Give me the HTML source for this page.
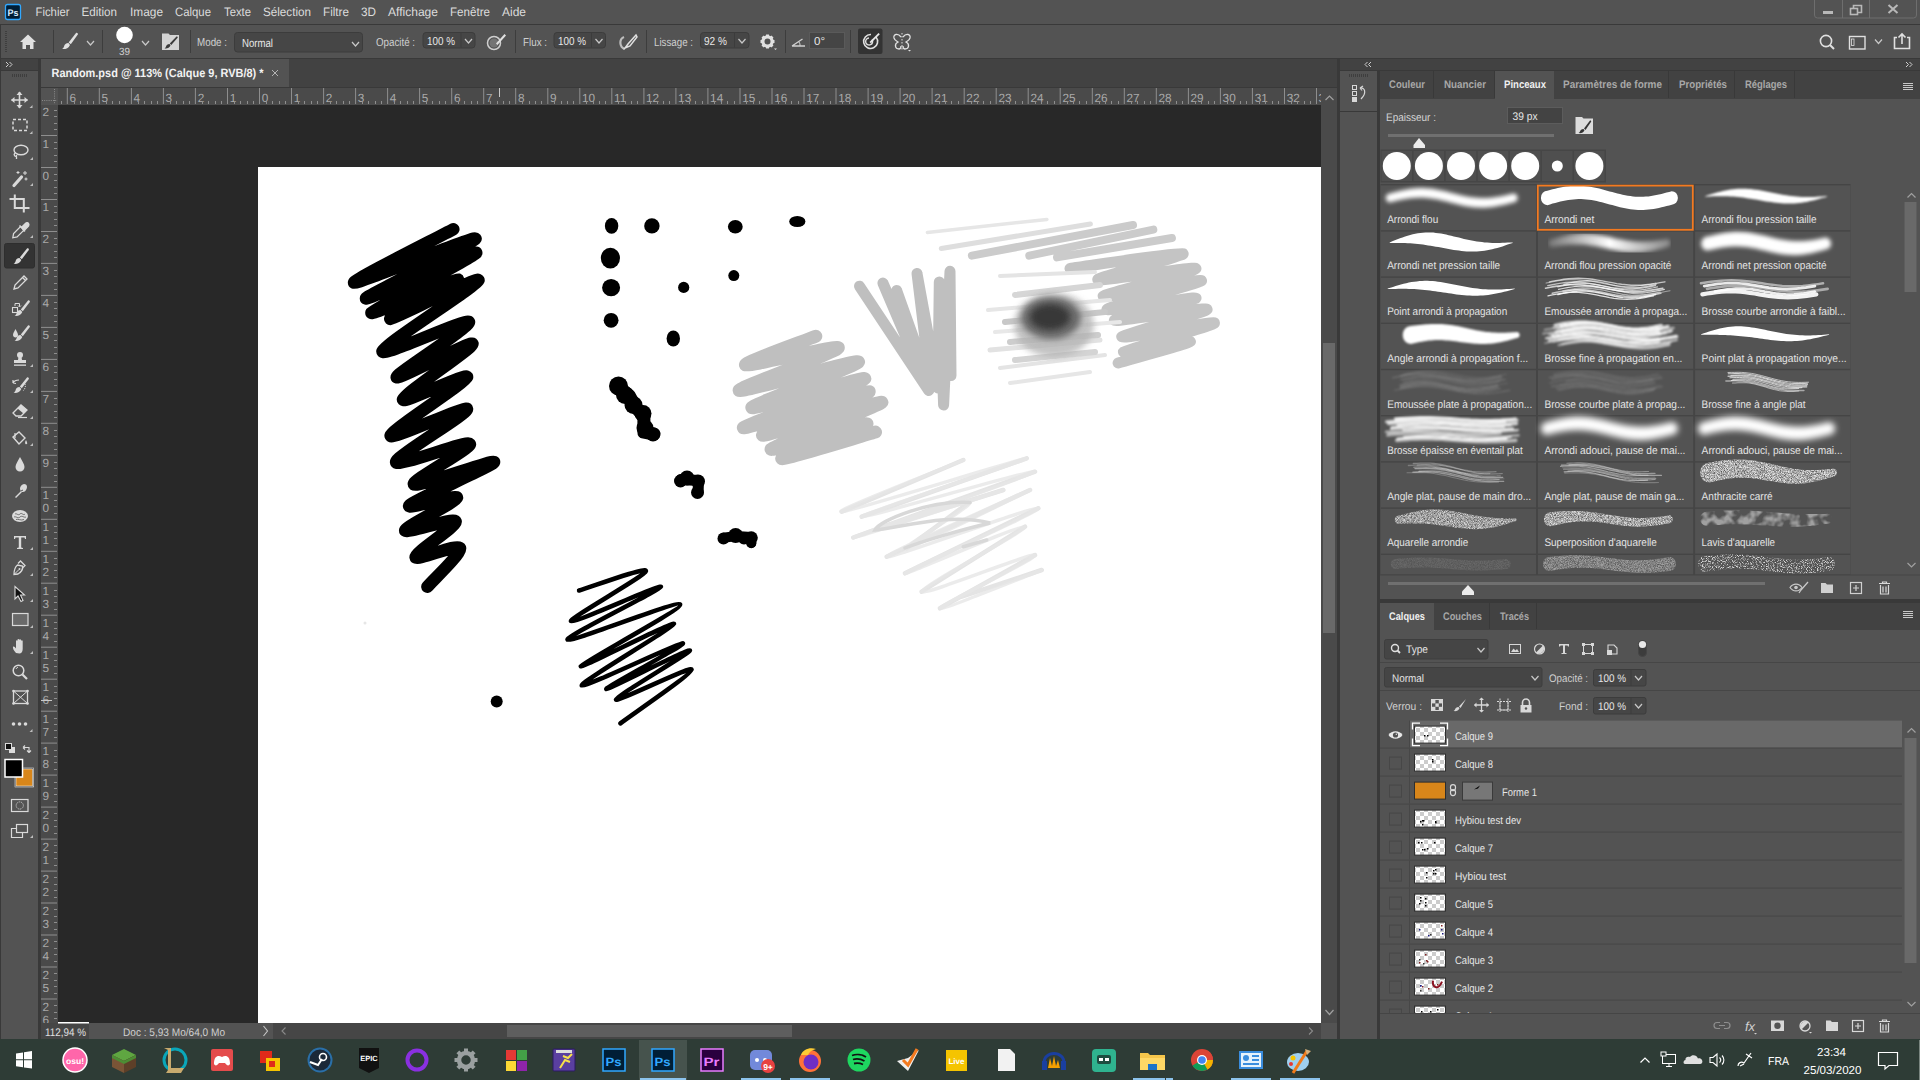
<!DOCTYPE html>
<html><head><meta charset="utf-8"><title>Photoshop</title>
<style>html,body{margin:0;padding:0;background:#393939;width:1920px;height:1080px;overflow:hidden}
svg{display:block;font-family:"Liberation Sans", sans-serif}</style></head>
<body><svg width="1920" height="1080" viewBox="0 0 1920 1080" text-rendering="geometricPrecision">
<defs>
<filter id="soft" x="-20%" y="-20%" width="140%" height="140%"><feGaussianBlur stdDeviation="0.7"/></filter>
<filter id="b06" x="-10%" y="-50%" width="120%" height="200%"><feGaussianBlur stdDeviation="0.6"/></filter>
<filter id="b1" x="-20%" y="-50%" width="140%" height="200%"><feGaussianBlur stdDeviation="1"/></filter>
<filter id="b2" x="-20%" y="-50%" width="140%" height="200%"><feGaussianBlur stdDeviation="2"/></filter>
<filter id="b3" x="-20%" y="-50%" width="140%" height="200%"><feGaussianBlur stdDeviation="3"/></filter>
<filter id="b4" x="-50%" y="-50%" width="200%" height="200%"><feGaussianBlur stdDeviation="6"/></filter>
<pattern id="checker" x="0" y="0" width="8" height="8" patternUnits="userSpaceOnUse"><rect width="8" height="8" fill="#ffffff"/><rect width="4" height="4" fill="#cccccc"/><rect x="4" y="4" width="4" height="4" fill="#cccccc"/></pattern>
<filter id="noise" x="-10%" y="-50%" width="120%" height="200%"><feTurbulence type="fractalNoise" baseFrequency="1.3" numOctaves="2" seed="3" result="n"/><feColorMatrix in="n" type="matrix" values="0 0 0 0 1  0 0 0 0 1  0 0 0 0 1  0 0 0 1.8 -0.3" result="na"/><feComposite in="SourceGraphic" in2="na" operator="in"/></filter>
<filter id="noise3" x="-10%" y="-50%" width="120%" height="200%"><feTurbulence type="fractalNoise" baseFrequency="0.12" numOctaves="2" seed="5" result="n"/><feColorMatrix in="n" type="matrix" values="0 0 0 0 1  0 0 0 0 1  0 0 0 0 1  0 0 0 3 -1.1" result="na"/><feComposite in="SourceGraphic" in2="na" operator="in"/></filter>
<filter id="noise2" x="-10%" y="-50%" width="120%" height="200%"><feTurbulence type="fractalNoise" baseFrequency="1.2" numOctaves="1" seed="7" result="n"/><feColorMatrix in="n" type="matrix" values="0 0 0 0 1  0 0 0 0 1  0 0 0 0 1  0 0 0 4 -1.9" result="na"/><feComposite in="SourceGraphic" in2="na" operator="in"/></filter>
<linearGradient id="fadeG" x1="0" x2="1" y1="0" y2="0"><stop offset="0" stop-color="#fff" stop-opacity="0.2"/><stop offset="0.5" stop-color="#fff" stop-opacity="1"/><stop offset="1" stop-color="#fff" stop-opacity="0.3"/></linearGradient>
<mask id="fadeMask" maskContentUnits="objectBoundingBox"><rect width="1" height="1" fill="url(#fadeG)"/></mask>
<clipPath id="rclip"><rect x="1316" y="88" width="5" height="17"/></clipPath>
<clipPath id="vrclip"><rect x="41" y="105" width="17" height="918"/></clipPath>
<clipPath id="canvclip"><rect x="258" y="167" width="1063" height="856"/></clipPath>
</defs>
<rect x="0" y="0" width="1920" height="1080" fill="#393939" />
<rect x="0" y="0" width="1920" height="24" fill="#535353" />
<rect x="5.5" y="4.5" width="15" height="15" rx="2" fill="#001e36" stroke="#31a8ff" stroke-width="1.3"/>
<text x="7.6" y="16" font-size="9.5" fill="#d6ecff" textLength="11" lengthAdjust="spacingAndGlyphs" font-weight="bold" >Ps</text>
<text x="35.5" y="16" font-size="12.3" fill="#dcdcdc" textLength="34" lengthAdjust="spacingAndGlyphs" >Fichier</text>
<text x="81.5" y="16" font-size="12.3" fill="#dcdcdc" textLength="35.5" lengthAdjust="spacingAndGlyphs" >Edition</text>
<text x="130" y="16" font-size="12.3" fill="#dcdcdc" textLength="33" lengthAdjust="spacingAndGlyphs" >Image</text>
<text x="175" y="16" font-size="12.3" fill="#dcdcdc" textLength="36" lengthAdjust="spacingAndGlyphs" >Calque</text>
<text x="224" y="16" font-size="12.3" fill="#dcdcdc" textLength="27" lengthAdjust="spacingAndGlyphs" >Texte</text>
<text x="263" y="16" font-size="12.3" fill="#dcdcdc" textLength="48" lengthAdjust="spacingAndGlyphs" >Sélection</text>
<text x="323" y="16" font-size="12.3" fill="#dcdcdc" textLength="26" lengthAdjust="spacingAndGlyphs" >Filtre</text>
<text x="361" y="16" font-size="12.3" fill="#dcdcdc" textLength="15" lengthAdjust="spacingAndGlyphs" >3D</text>
<text x="388" y="16" font-size="12.3" fill="#dcdcdc" textLength="50" lengthAdjust="spacingAndGlyphs" >Affichage</text>
<text x="450" y="16" font-size="12.3" fill="#dcdcdc" textLength="40" lengthAdjust="spacingAndGlyphs" >Fenêtre</text>
<text x="502" y="16" font-size="12.3" fill="#dcdcdc" textLength="24" lengthAdjust="spacingAndGlyphs" >Aide</text>
<path d="M1814.5,0 V15 a3,3 0 0 0 3,3 H1913.5 a3,3 0 0 0 3,-3 V0" fill="none" stroke="#6e6e6e" stroke-width="1"/>
<line x1="1842.5" y1="0" x2="1842.5" y2="18" stroke="#6e6e6e" stroke-width="1" />
<line x1="1869.5" y1="0" x2="1869.5" y2="18" stroke="#6e6e6e" stroke-width="1" />
<rect x="1823" y="11" width="10" height="3" fill="#b8b8b8" />
<rect x="1850.5" y="8.5" width="7" height="6" fill="none" stroke="#b8b8b8" stroke-width="1.6"/>
<path d="M1853.5,8 V5.5 H1861.5 V12.5 H1858" fill="none" stroke="#b8b8b8" stroke-width="1.6"/>
<path d="M1888.5,5 L1897.5,13 M1897.5,5 L1888.5,13" stroke="#b8b8b8" stroke-width="2"/>
<rect x="1" y="25" width="1919" height="33" fill="#535353" />
<line x1="6" y1="31" x2="6" y2="52" stroke="#3e3e3e" stroke-width="2" stroke-dasharray="1,1"/>
<path d="M20,42 L28,34.5 L36,42 H33.5 V49 H30 V45 H26 V49 H22.5 V42 Z" fill="#e0e0e0" />
<line x1="53.5" y1="30" x2="53.5" y2="53" stroke="#3d3d3d" stroke-width="1" />
<line x1="102.5" y1="30" x2="102.5" y2="53" stroke="#3d3d3d" stroke-width="1" />
<line x1="190.5" y1="30" x2="190.5" y2="53" stroke="#3d3d3d" stroke-width="1" />
<line x1="515.5" y1="30" x2="515.5" y2="53" stroke="#3d3d3d" stroke-width="1" />
<line x1="646.5" y1="30" x2="646.5" y2="53" stroke="#3d3d3d" stroke-width="1" />
<line x1="785.5" y1="30" x2="785.5" y2="53" stroke="#3d3d3d" stroke-width="1" />
<line x1="850.5" y1="30" x2="850.5" y2="53" stroke="#3d3d3d" stroke-width="1" />
<path d="M76,33 C77,32.5 78.3,33.5 77.8,34.6 L70.8,44.2 L68.6,42.4 Z" fill="#e0e0e0" />
<path d="M68.5,43 C66,43 64.5,44.5 64,46.5 C63.6,48 62.5,48.8 62,49 C65,49.5 68.5,48.5 70,45 Z" fill="#e0e0e0" />
<polyline points="87.0,41.0 90.5,45.0 94.0,41.0" fill="none" stroke="#c8c8c8" stroke-width="1.2"/>
<circle cx="124.5" cy="35" r="8.3" fill="#ffffff" filter="url(#soft)"/>
<text x="119" y="55" font-size="10.5" fill="#d0d0d0" textLength="11" lengthAdjust="spacingAndGlyphs" >39</text>
<polyline points="142.0,41.0 145.5,45.0 149.0,41.0" fill="none" stroke="#c8c8c8" stroke-width="1.2"/>
<path d="M162,33.5 H168.5 L170,35 H179 V50 H162 Z" fill="#d4d4d4" />
<path d="M176.5,36.5 C177.2,36.2 178,37 177.6,37.7 L171.3,45 L169.8,43.6 Z" fill="#3a3a3a" />
<path d="M169.5,44 C167.5,44 166.5,45 166,46.5 C165.7,47.5 165,48.2 164.5,48.5 C167,49 169.5,48 170.5,45.3 Z" fill="#3a3a3a" />
<text x="197" y="46" font-size="11.5" fill="#cfcfcf" textLength="30" lengthAdjust="spacingAndGlyphs" >Mode :</text>
<rect x="234.5" y="32.5" width="128" height="19.5" rx="3" fill="#464646" stroke="#3c3c3c" stroke-width="1"/>
<text x="242" y="46.5" font-size="11.5" fill="#e8e8e8" textLength="31" lengthAdjust="spacingAndGlyphs" >Normal</text>
<polyline points="352.0,42.0 355.5,46.0 359.0,42.0" fill="none" stroke="#c8c8c8" stroke-width="1.2"/>
<text x="376" y="46" font-size="11.5" fill="#cfcfcf" textLength="39" lengthAdjust="spacingAndGlyphs" >Opacité :</text>
<rect x="423.0" y="32.5" width="52.0" height="15.5" rx="3" fill="#464646" stroke="#3c3c3c" stroke-width="1"/>
<line x1="461" y1="33" x2="461" y2="47.5" stroke="#3c3c3c" stroke-width="1" />
<text x="427" y="45" font-size="11.5" fill="#e8e8e8" textLength="28" lengthAdjust="spacingAndGlyphs" >100 %</text>
<polyline points="465.0,39.0 468.5,43.0 472.0,39.0" fill="none" stroke="#c8c8c8" stroke-width="1.2"/>
<circle cx="494" cy="43" r="6.5" fill="none" stroke="#cfcfcf" stroke-width="1.5"/>
<circle cx="494" cy="43" r="4.5" fill="#8a8a8a" opacity="0.6"/>
<path d="M504.5,34 L496,43.5 L497.5,45 L506,35.5 Z" fill="#e0e0e0" />
<text x="523" y="46" font-size="11.5" fill="#cfcfcf" textLength="24" lengthAdjust="spacingAndGlyphs" >Flux :</text>
<rect x="554.0" y="32.5" width="51.5" height="15.5" rx="3" fill="#464646" stroke="#3c3c3c" stroke-width="1"/>
<line x1="591.5" y1="33" x2="591.5" y2="47.5" stroke="#3c3c3c" stroke-width="1" />
<text x="558" y="45" font-size="11.5" fill="#e8e8e8" textLength="28" lengthAdjust="spacingAndGlyphs" >100 %</text>
<polyline points="595.5,39.0 599,43.0 602.5,39.0" fill="none" stroke="#c8c8c8" stroke-width="1.2"/>
<path d="M624,37 C619,39 619,47 625,49" fill="none" stroke="#bdbdbd" stroke-width="2.2" />
<path d="M636,35 L628,44 L625,48 L630,46 L637,37 Z" fill="none" stroke="#e0e0e0" stroke-width="1.5" />
<text x="654" y="46" font-size="11.5" fill="#cfcfcf" textLength="39" lengthAdjust="spacingAndGlyphs" >Lissage :</text>
<rect x="700.5" y="32.5" width="48.5" height="15.5" rx="3" fill="#464646" stroke="#3c3c3c" stroke-width="1"/>
<line x1="734.5" y1="33" x2="734.5" y2="47.5" stroke="#3c3c3c" stroke-width="1" />
<text x="704" y="45" font-size="11.5" fill="#e8e8e8" textLength="23" lengthAdjust="spacingAndGlyphs" >92 %</text>
<polyline points="738.5,39.0 742,43.0 745.5,39.0" fill="none" stroke="#c8c8c8" stroke-width="1.2"/>
<g transform="translate(767.5,41.5)"><circle r="4.6" fill="none" stroke="#e0e0e0" stroke-width="3.2"/><rect x="-1.5" y="-7" width="3" height="3" fill="#e0e0e0" transform="rotate(0)"/><rect x="-1.5" y="-7" width="3" height="3" fill="#e0e0e0" transform="rotate(45)"/><rect x="-1.5" y="-7" width="3" height="3" fill="#e0e0e0" transform="rotate(90)"/><rect x="-1.5" y="-7" width="3" height="3" fill="#e0e0e0" transform="rotate(135)"/><rect x="-1.5" y="-7" width="3" height="3" fill="#e0e0e0" transform="rotate(180)"/><rect x="-1.5" y="-7" width="3" height="3" fill="#e0e0e0" transform="rotate(225)"/><rect x="-1.5" y="-7" width="3" height="3" fill="#e0e0e0" transform="rotate(270)"/><rect x="-1.5" y="-7" width="3" height="3" fill="#e0e0e0" transform="rotate(315)"/></g>
<path d="M774,48.5 L777,48.5 L775.5,50 Z" fill="#e0e0e0" />
<path d="M792,46 H805 M792,46 L802.5,39" fill="none" stroke="#d0d0d0" stroke-width="1.3" />
<path d="M800,46 A5,5 0 0 0 799,42" fill="none" stroke="#d0d0d0" stroke-width="1" />
<rect x="809.5" y="32.5" width="35" height="16" fill="#454545" stroke="#5a5a5a" stroke-width="1"/>
<text x="814" y="45" font-size="11.5" fill="#e8e8e8" textLength="11" lengthAdjust="spacingAndGlyphs" >0°</text>
<rect x="858" y="28.5" width="24.5" height="25.5" rx="2" fill="#333333"/>
<path d="M876,37 A7,7 0 1 1 871,34.5" fill="none" stroke="#e0e0e0" stroke-width="1.6"/>
<path d="M872,39.5 A3.5,3.5 0 1 1 869,38" fill="none" stroke="#e0e0e0" stroke-width="1.4"/>
<path d="M878.5,33 L869.5,42 L870.8,43.3 L879.8,34.3 Z" fill="#e8e8e8" />
<line x1="902" y1="33" x2="902" y2="51" stroke="#e0e0e0" stroke-width="1" stroke-dasharray="1.5,1.5"/>
<path d="M901,37 C898,33 893,34 894,38 C895,41 897,41 898,42 C894,44 895,49 899,49 C900,49 901,48 901,46" fill="none" stroke="#e0e0e0" stroke-width="1.3" />
<path d="M903,37 C906,33 911,34 910,38 C909,41 907,41 906,42 C910,44 909,49 905,49 C904,49 903,48 903,46" fill="none" stroke="#e0e0e0" stroke-width="1.3" />
<path d="M908,50 L911,50 L909.5,51.5 Z" fill="#e0e0e0" />
<circle cx="1826" cy="41" r="5.6" fill="none" stroke="#e0e0e0" stroke-width="1.6"/>
<line x1="1830" y1="45" x2="1834" y2="49" stroke="#e0e0e0" stroke-width="2" />
<rect x="1849.5" y="36.5" width="15.5" height="12.5" fill="none" stroke="#e0e0e0" stroke-width="1.4"/>
<rect x="1851.5" y="39" width="2.5" height="6.5" fill="none" stroke="#e0e0e0" stroke-width="0.8"/>
<polyline points="1875.0,39.5 1878.5,43.5 1882.0,39.5" fill="none" stroke="#c8c8c8" stroke-width="1.2"/>
<path d="M1897,37.5 H1894.5 V48.5 H1909.5 V37.5 H1907" fill="none" stroke="#e0e0e0" stroke-width="1.6" />
<path d="M1902,44 V35 M1898.5,37.5 L1902,34 L1905.5,37.5" fill="none" stroke="#e0e0e0" stroke-width="1.6" />
<rect x="41" y="59" width="1296" height="28" fill="#424242" />
<rect x="41" y="59" width="248" height="28" fill="#535353" />
<text x="51.5" y="77.3" font-size="12" fill="#f2f2f2" textLength="212" lengthAdjust="spacingAndGlyphs" font-weight="bold" >Random.psd @ 113% (Calque 9, RVB/8) *</text>
<path d="M272,70 L278,76 M278,70 L272,76" fill="none" stroke="#c0c0c0" stroke-width="0.9" />
<rect x="41" y="88" width="17" height="17" fill="#535353" />
<line x1="42" y1="100.5" x2="57" y2="100.5" stroke="#8a8a8a" stroke-width="1" stroke-dasharray="1,1.2"/>
<line x1="54.5" y1="89" x2="54.5" y2="104" stroke="#8a8a8a" stroke-width="1" stroke-dasharray="1,1.2"/>
<rect x="58" y="88" width="1263" height="17" fill="#4a4a4a" />
<rect x="41" y="105" width="17" height="918" fill="#4a4a4a" />
<text x="69.52" y="102" font-size="11.8" fill="#a9a9a9" >6</text>
<text x="101.55" y="102" font-size="11.8" fill="#a9a9a9" >5</text>
<text x="133.57999999999998" y="102" font-size="11.8" fill="#a9a9a9" >4</text>
<text x="165.60999999999999" y="102" font-size="11.8" fill="#a9a9a9" >3</text>
<text x="197.64" y="102" font-size="11.8" fill="#a9a9a9" >2</text>
<text x="229.67" y="102" font-size="11.8" fill="#a9a9a9" >1</text>
<text x="261.7" y="102" font-size="11.8" fill="#a9a9a9" >0</text>
<text x="293.72999999999996" y="102" font-size="11.8" fill="#a9a9a9" >1</text>
<text x="325.76" y="102" font-size="11.8" fill="#a9a9a9" >2</text>
<text x="357.79" y="102" font-size="11.8" fill="#a9a9a9" >3</text>
<text x="389.82" y="102" font-size="11.8" fill="#a9a9a9" >4</text>
<text x="421.84999999999997" y="102" font-size="11.8" fill="#a9a9a9" >5</text>
<text x="453.88" y="102" font-size="11.8" fill="#a9a9a9" >6</text>
<text x="485.91" y="102" font-size="11.8" fill="#a9a9a9" >7</text>
<text x="517.94" y="102" font-size="11.8" fill="#a9a9a9" >8</text>
<text x="549.97" y="102" font-size="11.8" fill="#a9a9a9" >9</text>
<text x="582.0" y="102" font-size="11.8" fill="#a9a9a9" >10</text>
<text x="614.0300000000001" y="102" font-size="11.8" fill="#a9a9a9" >11</text>
<text x="646.0600000000001" y="102" font-size="11.8" fill="#a9a9a9" >12</text>
<text x="678.09" y="102" font-size="11.8" fill="#a9a9a9" >13</text>
<text x="710.1200000000001" y="102" font-size="11.8" fill="#a9a9a9" >14</text>
<text x="742.1500000000001" y="102" font-size="11.8" fill="#a9a9a9" >15</text>
<text x="774.1800000000001" y="102" font-size="11.8" fill="#a9a9a9" >16</text>
<text x="806.21" y="102" font-size="11.8" fill="#a9a9a9" >17</text>
<text x="838.24" y="102" font-size="11.8" fill="#a9a9a9" >18</text>
<text x="870.2700000000001" y="102" font-size="11.8" fill="#a9a9a9" >19</text>
<text x="902.3000000000001" y="102" font-size="11.8" fill="#a9a9a9" >20</text>
<text x="934.33" y="102" font-size="11.8" fill="#a9a9a9" >21</text>
<text x="966.3600000000001" y="102" font-size="11.8" fill="#a9a9a9" >22</text>
<text x="998.3900000000001" y="102" font-size="11.8" fill="#a9a9a9" >23</text>
<text x="1030.42" y="102" font-size="11.8" fill="#a9a9a9" >24</text>
<text x="1062.45" y="102" font-size="11.8" fill="#a9a9a9" >25</text>
<text x="1094.48" y="102" font-size="11.8" fill="#a9a9a9" >26</text>
<text x="1126.51" y="102" font-size="11.8" fill="#a9a9a9" >27</text>
<text x="1158.5400000000002" y="102" font-size="11.8" fill="#a9a9a9" >28</text>
<text x="1190.57" y="102" font-size="11.8" fill="#a9a9a9" >29</text>
<text x="1222.6000000000001" y="102" font-size="11.8" fill="#a9a9a9" >30</text>
<text x="1254.63" y="102" font-size="11.8" fill="#a9a9a9" >31</text>
<text x="1286.66" y="102" font-size="11.8" fill="#a9a9a9" >32</text>
<text x="1318.5" y="102" font-size="11.8" fill="#a9a9a9" clip-path="url(#rclip)">3</text>
<text x="42.5" y="115.53999999999999" font-size="11.8" fill="#a9a9a9" clip-path="url(#vrclip)">2</text>
<text x="42.5" y="147.52" font-size="11.8" fill="#a9a9a9" clip-path="url(#vrclip)">1</text>
<text x="42.5" y="179.5" font-size="11.8" fill="#a9a9a9" clip-path="url(#vrclip)">0</text>
<text x="42.5" y="211.48" font-size="11.8" fill="#a9a9a9" clip-path="url(#vrclip)">1</text>
<text x="42.5" y="243.46" font-size="11.8" fill="#a9a9a9" clip-path="url(#vrclip)">2</text>
<text x="42.5" y="275.44" font-size="11.8" fill="#a9a9a9" clip-path="url(#vrclip)">3</text>
<text x="42.5" y="307.42" font-size="11.8" fill="#a9a9a9" clip-path="url(#vrclip)">4</text>
<text x="42.5" y="339.4" font-size="11.8" fill="#a9a9a9" clip-path="url(#vrclip)">5</text>
<text x="42.5" y="371.38" font-size="11.8" fill="#a9a9a9" clip-path="url(#vrclip)">6</text>
<text x="42.5" y="403.36" font-size="11.8" fill="#a9a9a9" clip-path="url(#vrclip)">7</text>
<text x="42.5" y="435.34000000000003" font-size="11.8" fill="#a9a9a9" clip-path="url(#vrclip)">8</text>
<text x="42.5" y="467.32" font-size="11.8" fill="#a9a9a9" clip-path="url(#vrclip)">9</text>
<text x="42.5" y="499.3" font-size="11.8" fill="#a9a9a9" clip-path="url(#vrclip)">1</text>
<text x="42.5" y="512.3" font-size="11.8" fill="#a9a9a9" clip-path="url(#vrclip)">0</text>
<text x="42.5" y="531.28" font-size="11.8" fill="#a9a9a9" clip-path="url(#vrclip)">1</text>
<text x="42.5" y="544.28" font-size="11.8" fill="#a9a9a9" clip-path="url(#vrclip)">1</text>
<text x="42.5" y="563.26" font-size="11.8" fill="#a9a9a9" clip-path="url(#vrclip)">1</text>
<text x="42.5" y="576.26" font-size="11.8" fill="#a9a9a9" clip-path="url(#vrclip)">2</text>
<text x="42.5" y="595.24" font-size="11.8" fill="#a9a9a9" clip-path="url(#vrclip)">1</text>
<text x="42.5" y="608.24" font-size="11.8" fill="#a9a9a9" clip-path="url(#vrclip)">3</text>
<text x="42.5" y="627.22" font-size="11.8" fill="#a9a9a9" clip-path="url(#vrclip)">1</text>
<text x="42.5" y="640.22" font-size="11.8" fill="#a9a9a9" clip-path="url(#vrclip)">4</text>
<text x="42.5" y="659.2" font-size="11.8" fill="#a9a9a9" clip-path="url(#vrclip)">1</text>
<text x="42.5" y="672.2" font-size="11.8" fill="#a9a9a9" clip-path="url(#vrclip)">5</text>
<text x="42.5" y="691.1800000000001" font-size="11.8" fill="#a9a9a9" clip-path="url(#vrclip)">1</text>
<text x="42.5" y="704.1800000000001" font-size="11.8" fill="#a9a9a9" clip-path="url(#vrclip)">6</text>
<text x="42.5" y="723.16" font-size="11.8" fill="#a9a9a9" clip-path="url(#vrclip)">1</text>
<text x="42.5" y="736.16" font-size="11.8" fill="#a9a9a9" clip-path="url(#vrclip)">7</text>
<text x="42.5" y="755.14" font-size="11.8" fill="#a9a9a9" clip-path="url(#vrclip)">1</text>
<text x="42.5" y="768.14" font-size="11.8" fill="#a9a9a9" clip-path="url(#vrclip)">8</text>
<text x="42.5" y="787.12" font-size="11.8" fill="#a9a9a9" clip-path="url(#vrclip)">1</text>
<text x="42.5" y="800.12" font-size="11.8" fill="#a9a9a9" clip-path="url(#vrclip)">9</text>
<text x="42.5" y="819.1" font-size="11.8" fill="#a9a9a9" clip-path="url(#vrclip)">2</text>
<text x="42.5" y="832.1" font-size="11.8" fill="#a9a9a9" clip-path="url(#vrclip)">0</text>
<text x="42.5" y="851.08" font-size="11.8" fill="#a9a9a9" clip-path="url(#vrclip)">2</text>
<text x="42.5" y="864.08" font-size="11.8" fill="#a9a9a9" clip-path="url(#vrclip)">1</text>
<text x="42.5" y="883.0600000000001" font-size="11.8" fill="#a9a9a9" clip-path="url(#vrclip)">2</text>
<text x="42.5" y="896.0600000000001" font-size="11.8" fill="#a9a9a9" clip-path="url(#vrclip)">2</text>
<text x="42.5" y="915.04" font-size="11.8" fill="#a9a9a9" clip-path="url(#vrclip)">2</text>
<text x="42.5" y="928.04" font-size="11.8" fill="#a9a9a9" clip-path="url(#vrclip)">3</text>
<text x="42.5" y="947.02" font-size="11.8" fill="#a9a9a9" clip-path="url(#vrclip)">2</text>
<text x="42.5" y="960.02" font-size="11.8" fill="#a9a9a9" clip-path="url(#vrclip)">4</text>
<text x="42.5" y="979.0" font-size="11.8" fill="#a9a9a9" clip-path="url(#vrclip)">2</text>
<text x="42.5" y="992.0" font-size="11.8" fill="#a9a9a9" clip-path="url(#vrclip)">5</text>
<text x="42.5" y="1010.98" font-size="11.8" fill="#a9a9a9" clip-path="url(#vrclip)">2</text>
<text x="42.5" y="1023.98" font-size="11.8" fill="#a9a9a9" clip-path="url(#vrclip)">6</text>
<path d="M61.5,101 V104 M67.3,88 V104 M74.5,101 V104 M80.5,101 V104 M87.5,101 V104 M93.5,101 V104 M99.3,88 V104 M106.5,101 V104 M112.5,101 V104 M119.5,101 V104 M125.5,101 V104 M131.4,88 V104 M138.5,101 V104 M144.5,101 V104 M151.5,101 V104 M157.5,101 V104 M163.4,88 V104 M170.5,101 V104 M176.5,101 V104 M183.5,101 V104 M189.5,101 V104 M195.4,88 V104 M202.5,101 V104 M208.5,101 V104 M215.5,101 V104 M221.5,101 V104 M227.5,88 V104 M234.5,101 V104 M240.5,101 V104 M247.5,101 V104 M253.5,101 V104 M259.5,88 V104 M266.5,101 V104 M272.5,101 V104 M279.5,101 V104 M285.5,101 V104 M291.5,88 V104 M298.5,101 V104 M304.5,101 V104 M311.5,101 V104 M317.5,101 V104 M323.6,88 V104 M330.5,101 V104 M336.5,101 V104 M343.5,101 V104 M349.5,101 V104 M355.6,88 V104 M362.5,101 V104 M368.5,101 V104 M375.5,101 V104 M381.5,101 V104 M387.6,88 V104 M394.5,101 V104 M400.5,101 V104 M407.5,101 V104 M413.5,101 V104 M419.6,88 V104 M426.5,101 V104 M432.5,101 V104 M439.5,101 V104 M445.5,101 V104 M451.7,88 V104 M458.5,101 V104 M464.5,101 V104 M471.5,101 V104 M477.5,101 V104 M483.7,88 V104 M490.5,101 V104 M497.5,101 V104 M503.5,101 V104 M509.5,101 V104 M515.7,88 V104 M522.5,101 V104 M529.5,101 V104 M535.5,101 V104 M541.5,101 V104 M547.8,88 V104 M554.5,101 V104 M561.5,101 V104 M567.5,101 V104 M573.5,101 V104 M579.8,88 V104 M586.5,101 V104 M593.5,101 V104 M599.5,101 V104 M605.5,101 V104 M611.8,88 V104 M618.5,101 V104 M625.5,101 V104 M631.5,101 V104 M637.5,101 V104 M643.9,88 V104 M650.5,101 V104 M657.5,101 V104 M663.5,101 V104 M669.5,101 V104 M675.9,88 V104 M682.5,101 V104 M689.5,101 V104 M695.5,101 V104 M702.5,101 V104 M707.9,88 V104 M714.5,101 V104 M721.5,101 V104 M727.5,101 V104 M734.5,101 V104 M740.0,88 V104 M746.5,101 V104 M753.5,101 V104 M759.5,101 V104 M766.5,101 V104 M772.0,88 V104 M778.5,101 V104 M785.5,101 V104 M791.5,101 V104 M798.5,101 V104 M804.0,88 V104 M810.5,101 V104 M817.5,101 V104 M823.5,101 V104 M830.5,101 V104 M836.0,88 V104 M842.5,101 V104 M849.5,101 V104 M855.5,101 V104 M862.5,101 V104 M868.1,88 V104 M874.5,101 V104 M881.5,101 V104 M887.5,101 V104 M894.5,101 V104 M900.1,88 V104 M907.5,101 V104 M913.5,101 V104 M919.5,101 V104 M926.5,101 V104 M932.1,88 V104 M939.5,101 V104 M945.5,101 V104 M951.5,101 V104 M958.5,101 V104 M964.2,88 V104 M971.5,101 V104 M977.5,101 V104 M983.5,101 V104 M990.5,101 V104 M996.2,88 V104 M1003.5,101 V104 M1009.5,101 V104 M1015.5,101 V104 M1022.5,101 V104 M1028.2,88 V104 M1035.5,101 V104 M1041.5,101 V104 M1047.5,101 V104 M1054.5,101 V104 M1060.2,88 V104 M1067.5,101 V104 M1073.5,101 V104 M1079.5,101 V104 M1086.5,101 V104 M1092.3,88 V104 M1099.5,101 V104 M1105.5,101 V104 M1111.5,101 V104 M1118.5,101 V104 M1124.3,88 V104 M1131.5,101 V104 M1137.5,101 V104 M1144.5,101 V104 M1150.5,101 V104 M1156.3,88 V104 M1163.5,101 V104 M1169.5,101 V104 M1176.5,101 V104 M1182.5,101 V104 M1188.4,88 V104 M1195.5,101 V104 M1201.5,101 V104 M1208.5,101 V104 M1214.5,101 V104 M1220.4,88 V104 M1227.5,101 V104 M1233.5,101 V104 M1240.5,101 V104 M1246.5,101 V104 M1252.4,88 V104 M1259.5,101 V104 M1265.5,101 V104 M1272.5,101 V104 M1278.5,101 V104 M1284.5,88 V104 M1291.5,101 V104 M1297.5,101 V104 M1304.5,101 V104 M1310.5,101 V104 M1316.5,88 V104 M54,110.5 H57 M54,116.5 H57 M54,123.5 H57 M54,129.5 H57 M41,135.5 H57 M54,142.5 H57 M54,148.5 H57 M54,155.5 H57 M54,161.5 H57 M41,167.5 H57 M54,174.5 H57 M54,180.5 H57 M54,187.5 H57 M54,193.5 H57 M41,199.5 H57 M54,206.5 H57 M54,212.5 H57 M54,219.5 H57 M54,225.5 H57 M41,231.5 H57 M54,238.5 H57 M54,244.5 H57 M54,251.5 H57 M54,257.5 H57 M41,263.4 H57 M54,270.5 H57 M54,276.5 H57 M54,283.5 H57 M54,289.5 H57 M41,295.4 H57 M54,302.5 H57 M54,308.5 H57 M54,315.5 H57 M54,321.5 H57 M41,327.4 H57 M54,334.5 H57 M54,340.5 H57 M54,347.5 H57 M54,353.5 H57 M41,359.4 H57 M54,366.5 H57 M54,372.5 H57 M54,379.5 H57 M54,385.5 H57 M41,391.4 H57 M54,398.5 H57 M54,404.5 H57 M54,411.5 H57 M54,417.5 H57 M41,423.3 H57 M54,430.5 H57 M54,436.5 H57 M54,443.5 H57 M54,449.5 H57 M41,455.3 H57 M54,462.5 H57 M54,468.5 H57 M54,475.5 H57 M54,481.5 H57 M41,487.3 H57 M54,494.5 H57 M54,500.5 H57 M54,506.5 H57 M54,513.5 H57 M41,519.3 H57 M54,526.5 H57 M54,532.5 H57 M54,538.5 H57 M54,545.5 H57 M41,551.3 H57 M54,558.5 H57 M54,564.5 H57 M54,570.5 H57 M54,577.5 H57 M41,583.2 H57 M54,590.5 H57 M54,596.5 H57 M54,602.5 H57 M54,609.5 H57 M41,615.2 H57 M54,622.5 H57 M54,628.5 H57 M54,634.5 H57 M54,641.5 H57 M41,647.2 H57 M54,654.5 H57 M54,660.5 H57 M54,666.5 H57 M54,673.5 H57 M41,679.2 H57 M54,686.5 H57 M54,692.5 H57 M54,698.5 H57 M54,705.5 H57 M41,711.2 H57 M54,718.5 H57 M54,724.5 H57 M54,730.5 H57 M54,737.5 H57 M41,743.1 H57 M54,750.5 H57 M54,756.5 H57 M54,762.5 H57 M54,769.5 H57 M41,775.1 H57 M54,782.5 H57 M54,788.5 H57 M54,794.5 H57 M54,801.5 H57 M41,807.1 H57 M54,813.5 H57 M54,820.5 H57 M54,826.5 H57 M54,833.5 H57 M41,839.1 H57 M54,845.5 H57 M54,852.5 H57 M54,858.5 H57 M54,865.5 H57 M41,871.1 H57 M54,877.5 H57 M54,884.5 H57 M54,890.5 H57 M54,897.5 H57 M41,903.0 H57 M54,909.5 H57 M54,916.5 H57 M54,922.5 H57 M54,929.5 H57 M41,935.0 H57 M54,941.5 H57 M54,948.5 H57 M54,954.5 H57 M54,961.5 H57 M41,967.0 H57 M54,973.5 H57 M54,980.5 H57 M54,986.5 H57 M54,993.5 H57 M41,999.0 H57 M54,1005.5 H57 M54,1012.5 H57 M54,1018.5 H57" stroke="#8e8e8e" stroke-width="1" fill="none"/>
<line x1="499.5" y1="88" x2="499.5" y2="97" stroke="#c8c8c8" stroke-width="1" />
<line x1="41" y1="700.5" x2="52" y2="700.5" stroke="#c8c8c8" stroke-width="1" />
<rect x="58" y="105" width="1263" height="918" fill="#282828" />
<rect x="258" y="167" width="1063" height="856" fill="#ffffff" />
<rect x="1321" y="88" width="16" height="935" fill="#4a4a4a" />
<polyline points="1325.5,100 1329.5,96 1333.5,100" fill="none" stroke="#a0a0a0" stroke-width="1.2"/>
<polyline points="1325.5,1010 1329.5,1014.5 1333.5,1010" fill="none" stroke="#a0a0a0" stroke-width="1.2"/>
<rect x="1323" y="343" width="12" height="290" fill="#696969" />
<rect x="41" y="1023" width="1296" height="16" fill="#464646" />
<rect x="89" y="1023" width="184" height="16" fill="#535353" />
<rect x="58" y="1022" width="31" height="1.5" fill="#ffffff" />
<text x="45" y="1035.5" font-size="11" fill="#e0e0e0" textLength="41" lengthAdjust="spacingAndGlyphs" >112,94 %</text>
<text x="123" y="1035.5" font-size="11" fill="#d0d0d0" textLength="102" lengthAdjust="spacingAndGlyphs" >Doc : 5,93 Mo/64,0 Mo</text>
<path d="M263.5,1026 L267.5,1031 L263.5,1036" fill="none" stroke="#c8c8c8" stroke-width="1.1" />
<path d="M285.5,1027.5 L282,1031 L285.5,1034.5" fill="none" stroke="#8a8a8a" stroke-width="1.1" />
<rect x="507" y="1025" width="285" height="12" fill="#5e5e5e" />
<path d="M1309,1027.5 L1312.5,1031 L1309,1034.5" fill="none" stroke="#8a8a8a" stroke-width="1.1" />
<rect x="1321" y="1023" width="16" height="16" fill="#535353" />
<g clip-path="url(#canvclip)">
<path d="M963.3,460 L841.7,511.7 M1026.7,458.3 L861.7,516.7 M1035,471.7 L853.3,537.5 M1003.3,490 L875,530 M970,501.7 L906.7,548.3 M1030,490 L886.7,556.7 M1038.3,508.3 L905,573.3 M1025,526.7 L921.7,591.7 M1035,555 L940,608.3 M1041.7,570 L961.7,596.7" stroke="#e4e4e4" stroke-width="4.5" stroke-linecap="round" fill="none"/>
<path d="M963.3,460 C943.0,468.6 831.1,512.0 841.7,511.7 C852.3,511.4 1023.4,457.5 1026.7,458.3 C1030.0,459.1 860.3,514.5 861.7,516.7 C863.1,518.9 1036.4,468.2 1035,471.7 C1033.6,475.2 858.6,534.5 853.3,537.5 C848.0,540.5 999.7,491.2 1003.3,490 C1006.9,488.8 880.5,528.0 875,530 C869.5,532.0 964.7,498.6 970,501.7 C975.3,504.8 896.7,550.2 906.7,548.3 C916.7,546.3 1033.3,488.6 1030,490 C1026.7,491.4 885.3,553.7 886.7,556.7 C888.1,559.8 1035.2,505.5 1038.3,508.3 C1041.3,511.1 907.2,570.2 905,573.3 C902.8,576.4 1022.2,523.6 1025,526.7 C1027.8,529.8 920.0,587.0 921.7,591.7 C923.4,596.4 1032.0,552.2 1035,555 C1038.0,557.8 938.9,605.8 940,608.3 C941.1,610.8 1024.8,576.4 1041.7,570" fill="none" stroke="#e6e6e6" stroke-width="3.5" stroke-linecap="round" stroke-linejoin="round" opacity="0.8"/>
<path d="M970,502.5 C930,500 880,520 875,530 C900,528 950,512 990,523 C960,530 920,542 905,548 M986.7,540 L963.3,546.7" stroke="#d8d8d8" stroke-width="3.5" fill="none" stroke-linecap="round"/>
<path d="M815.8,336.2 C804.1,341.0 741.9,363.0 745.6,365 C749.3,367.0 839.3,343.8 838.2,348 C837.1,352.2 735.8,388.2 739.2,390.5 C742.6,392.8 856.3,358.9 858.4,361.8 C860.5,364.7 750.8,404.8 751.9,407.6 C753.0,410.4 866.2,375.4 864.8,378.8 C863.4,382.2 742.7,425.7 743.4,427.8 C744.1,429.9 865.9,390.4 869.1,391.6 C872.3,392.9 760.5,433.5 762.6,435.3 C764.7,437.1 880.4,400.0 881.8,402.3 C883.2,404.6 773.6,445.6 771.1,449.1 C768.6,452.7 865.1,422.0 866.9,423.6 C868.7,425.2 780.4,457.3 781.8,458.7 C783.2,460.1 859.9,436.5 875.5,432.1" fill="none" stroke="#bfbfbf" stroke-width="13" stroke-linecap="round" stroke-linejoin="round" />
<polyline points="859.5,286.2 928.7,390.5 882.9,283 928,388 896.7,290.5 930.8,386.3 917,273.4 938,388 939.3,282 943.6,405 950,271.3 951,375.6" fill="none" stroke="#bfbfbf" stroke-width="11" stroke-linecap="round" stroke-linejoin="round" />
<path d="M927.4,232.4 L1046.9,219.4" stroke="#e6e6e6" stroke-width="3.5" stroke-linecap="round"/>
<path d="M941.3,248.5 L1090.4,224" stroke="#dedede" stroke-width="5" stroke-linecap="round"/>
<path d="M971.9,255.6 L1133,225 M1029.3,255.6 L1153.3,229.6 M1057,257.4 L1171.9,238" stroke="#cbcbcb" stroke-width="8" stroke-linecap="round"/>
<path d="M1070,268.5 C1088.8,266.0 1178.4,251.8 1183,253.7 C1187.6,255.5 1095.6,277.1 1097.8,279.6 C1100.0,282.1 1195.0,265.7 1195.9,268.5 C1196.8,271.3 1102.4,294.3 1103.3,296.3 C1104.2,298.3 1200.9,278.4 1201.5,280.6 C1202.1,282.8 1107.9,306.4 1107,309.3 C1106.1,312.2 1194.8,296.1 1196,298 C1197.2,299.9 1112.6,318.5 1114.4,320.4 C1116.2,322.3 1205.8,306.5 1207,309.3 C1208.2,312.1 1120.7,334.7 1121.9,337 C1123.1,339.3 1214.1,320.5 1214.4,323 C1214.7,325.5 1127.7,348.8 1123.7,351.9 C1119.7,355.0 1191.3,339.8 1190.4,341.7 C1189.5,343.6 1130.1,359.4 1118.1,363" fill="none" stroke="#c4c4c4" stroke-width="11" stroke-linecap="round" stroke-linejoin="round" />
<path d="M1000,276 L1095,272" stroke="#e4e4e4" stroke-width="4" stroke-linecap="round"/>
<path d="M988,310 L1110,300" stroke="#e6e6e6" stroke-width="4" stroke-linecap="round"/>
<path d="M995,332 L1120,322" stroke="#e8e8e8" stroke-width="4" stroke-linecap="round"/>
<path d="M990,350 L1100,340" stroke="#e2e2e2" stroke-width="5" stroke-linecap="round"/>
<path d="M1000,368 L1105,355" stroke="#e4e4e4" stroke-width="4" stroke-linecap="round"/>
<path d="M1010,383 L1090,372" stroke="#e6e6e6" stroke-width="4" stroke-linecap="round"/>
<path d="M1015,295 L1100,285" stroke="#d6d6d6" stroke-width="6" stroke-linecap="round"/>
<path d="M1005,322 L1105,312" stroke="#c8c8c8" stroke-width="6" stroke-linecap="round"/>
<path d="M1010,342 L1098,335" stroke="#cdcdcd" stroke-width="6" stroke-linecap="round"/>
<path d="M1015,360 L1095,352" stroke="#d4d4d4" stroke-width="6" stroke-linecap="round"/>
<ellipse cx="1054" cy="325" rx="40" ry="32" fill="#b4b4b4" filter="url(#b3)" opacity="0.8"/>
<ellipse cx="1051" cy="318" rx="30" ry="21" fill="#6a6a6a" filter="url(#b3)"/>
<ellipse cx="1050" cy="317" rx="20" ry="13" fill="#383838" filter="url(#b3)"/>
<circle cx="365" cy="623" r="1.5" fill="#e6e6e6" />
<path d="M453.3,229.2 C436.8,238.1 350.5,281.1 354.2,282.7 C357.9,284.3 473.4,236.0 475.4,238.6 C477.4,241.2 365.9,296.0 366,298.4 C366.1,300.8 475.3,250.4 476.2,252.8 C477.1,255.2 374.5,308.2 371.5,312.6 C368.5,317.1 454.9,278.4 458,279.5 C461.1,280.6 387.0,318.8 390.4,318.9 C393.8,319.0 479.8,274.9 478.5,280.3 C477.2,285.7 384.1,344.2 382.5,351.2 C380.9,358.1 466.6,317.7 469,322 C471.4,326.3 396.1,373.5 396.7,377.1 C397.3,380.8 471.4,340.2 472.5,343.9 C473.6,347.6 403.9,393.8 403,399.4 C402.1,404.9 469.1,371.2 467,377.2 C464.9,383.2 390.6,430.3 390.6,435.6 C390.6,440.9 466.1,404.8 467,409.2 C467.9,413.6 395.7,456.2 396.1,462 C396.6,467.8 466.7,440.2 469.7,443.9 C472.7,447.6 409.9,481.3 414,484.4 C418.1,487.4 494.7,458.7 494,462.2 C493.3,465.7 415.8,499.3 409.6,505.2 C403.4,511.1 457.7,493.6 457,497.8 C456.3,502.0 405.4,526.4 405.2,530.4 C405.0,534.4 453.9,517.1 455.6,521.5 C457.3,525.9 414.9,552.6 415.6,557 C416.3,561.4 458.0,543.1 460,548.1 C462.0,553.1 432.8,580.3 427.4,586.7" fill="none" stroke="#000" stroke-width="12.5" stroke-linecap="round" stroke-linejoin="round" />
<ellipse cx="611.6" cy="225.9" rx="6.7" ry="7.9" fill="#000" />
<ellipse cx="651.9" cy="225.9" rx="7.7" ry="7.7" fill="#000" />
<ellipse cx="735.3" cy="226.7" rx="7.4" ry="6.7" fill="#000" />
<ellipse cx="797.3" cy="221.5" rx="8.1" ry="5.6" fill="#000" />
<ellipse cx="610.4" cy="258.1" rx="9.6" ry="10.4" fill="#000" />
<ellipse cx="611.1" cy="287.7" rx="9" ry="8.6" fill="#000" />
<ellipse cx="611.1" cy="320.3" rx="7.4" ry="7.4" fill="#000" />
<ellipse cx="683.7" cy="287.4" rx="5.6" ry="5.6" fill="#000" />
<ellipse cx="733.8" cy="275.6" rx="5.5" ry="5.5" fill="#000" />
<ellipse cx="673.3" cy="338.5" rx="6.7" ry="8.1" fill="#000" />
<ellipse cx="496.7" cy="701.6" rx="6" ry="6" fill="#000" />
<circle cx="618.5" cy="386" r="9.5" fill="#000" />
<circle cx="625" cy="395" r="9" fill="#000" />
<circle cx="633.5" cy="405" r="9" fill="#000" />
<circle cx="643" cy="413.5" r="8.5" fill="#000" />
<circle cx="645" cy="428" r="8.5" fill="#000" />
<circle cx="653" cy="434.5" r="7" fill="#000" />
<circle cx="680.5" cy="481" r="6.5" fill="#000" />
<circle cx="687" cy="478" r="7.5" fill="#000" />
<circle cx="698" cy="481.5" r="7" fill="#000" />
<circle cx="697.5" cy="492.5" r="6.5" fill="#000" />
<circle cx="723.5" cy="538.5" r="6" fill="#000" />
<circle cx="735.6" cy="535.5" r="7.5" fill="#000" />
<circle cx="744" cy="538.5" r="6" fill="#000" />
<circle cx="751.3" cy="537.8" r="6.5" fill="#000" />
<circle cx="751.3" cy="543" r="5" fill="#000" />
<polyline points="619.8,387.8 629,395.2 635.6,407.2 643.9,416.5 643.9,432.2 654,434" fill="none" stroke="#000" stroke-width="13" stroke-linecap="round" stroke-linejoin="round" />
<polyline points="681,479.4 698.5,480.4 698.1,492.4" fill="none" stroke="#000" stroke-width="11" stroke-linecap="round" stroke-linejoin="round" />
<polyline points="723.5,537.8 736.5,536 751.3,536.9 751.3,543.3" fill="none" stroke="#000" stroke-width="10" stroke-linecap="round" stroke-linejoin="round" />
<path d="M579.1,590.5 C590.2,587.3 647.2,566.0 645.9,571.1 C644.6,576.2 568.6,618.6 571.1,621.2 C573.6,623.8 661.5,583.8 660.9,586.9 C660.3,590.0 564.4,636.8 567.6,639.7 C570.8,642.6 678.0,600.1 680.2,604.5 C682.4,608.9 581.8,662.9 580.8,666.1 C579.8,669.3 673.9,620.7 674,623.9 C674.1,627.1 580.2,682.2 581.7,685.4 C583.2,688.6 678.7,642.6 682.8,643.2 C686.9,643.8 605.1,687.8 606.3,689 C607.5,690.2 688.3,648.5 689.9,650.3 C691.5,652.0 615.7,696.3 616,699.5 C616.3,702.7 690.9,665.6 691.6,669.6 C692.3,673.6 632.3,714.3 620.4,723.3" fill="none" stroke="#000" stroke-width="4.6" stroke-linecap="round" stroke-linejoin="round" />
</g>
<rect x="1" y="59" width="37" height="11" fill="#424242" />
<path d="M6,62 L8.5,64.5 L6,67 M9.5,62 L12,64.5 L9.5,67" fill="none" stroke="#d0d0d0" stroke-width="1" />
<rect x="1" y="71" width="37" height="968" fill="#535353" />
<line x1="12" y1="75.5" x2="28" y2="75.5" stroke="#3e3e3e" stroke-width="3" stroke-dasharray="1,1"/>
<g transform="translate(11.5,92)"><path d="M8,0 V16 M0,8 H16" stroke="#dadada" stroke-width="1.6"/><path d="M8,-0.5 L5,3 H11 Z M8,16.5 L5,13 H11 Z M-0.5,8 L3,5 V11 Z M16.5,8 L13,5 V11 Z" fill="#dadada"/></g>
<path d="M29.5,108 h3 v-3 z" fill="#bdbdbd"/>
<g transform="translate(11.5,118)"><rect x="1.5" y="1.5" width="14" height="11" fill="none" stroke="#dadada" stroke-width="1.5" stroke-dasharray="3,2"/></g>
<path d="M29.5,134 h3 v-3 z" fill="#bdbdbd"/>
<g transform="translate(12,144)"><ellipse cx="9" cy="6" rx="7" ry="4.8" fill="none" stroke="#dadada" stroke-width="1.4"/><path d="M3,9 C1,11 3,13 5,12 M4.5,11 V15" fill="none" stroke="#dadada" stroke-width="1.3"/></g>
<path d="M30,160 h3 v-3 z" fill="#bdbdbd"/>
<g transform="translate(12,170)"><path d="M2,15.5 L9.5,7" stroke="#dadada" stroke-width="3.2" stroke-linecap="round"/><path d="M6,1 v3 M4.5,2.5 h3 M13,1 v4 M11,3 h4 M14,7.5 v3 M12.5,9 h3" stroke="#dadada" stroke-width="1"/></g>
<path d="M30,186 h3 v-3 z" fill="#bdbdbd"/>
<path d="M14.8,194.5 V208 H29.5 M9.5,199 H23.8 V212.5" fill="none" stroke="#dadada" stroke-width="2"/>
<path d="M12.8,237.8 L13.6,233.5 L20.5,226.6 L24,230.1 L17.1,237 Z" fill="none" stroke="#dadada" stroke-width="1.3"/>
<path d="M19.5,225.5 L25.2,231.2 M21.5,227.5 L25.5,223.5 C26.5,222.5 28.5,222.5 28.8,224.5 C29,226 27.5,227 26.5,228 L23.3,231.2" fill="#dadada" stroke="#dadada" stroke-width="1.6"/>
<path d="M30,238 h3 v-3 z" fill="#bdbdbd"/>
<rect x="4.5" y="243.5" width="30" height="24.5" rx="2" fill="#333333" stroke="#2e2e2e"/>
<g transform="translate(12,248)"><path d="M15,0.5 C16,0 17.2,1 16.8,2 L9.8,11.2 L7.8,9.5 Z" fill="#dadada"/><path d="M7.5,10 C5,10 4,11.5 3.5,13.5 C3.2,14.8 2,15.5 1.5,15.8 C4.5,16.3 8,15.5 9.3,12 Z" fill="#dadada"/></g>
<g transform="translate(12,274)"><path d="M2,15 L3,11 L12,2 L15,5 L6,14 Z M10.5,3.5 L13.5,6.5" fill="none" stroke="#dadada" stroke-width="1.3"/></g>
<g transform="translate(13,300)"><rect x="-0.5" y="7.5" width="5" height="5" fill="none" stroke="#dadada" stroke-width="1.1"/><path d="M2,6 V3.5 H6.5 V6.5 M5,5.5 L6.5,7 L8,5.5" fill="none" stroke="#dadada" stroke-width="1"/><path d="M15,0.5 C16,0 17.2,1 16.8,2 L9.8,11.2 L7.8,9.5 Z" fill="#dadada"/><path d="M7.5,10 C5,10 4,11.5 3.5,13.5 C3.2,14.8 2,15.5 1.5,15.8 C4.5,16.3 8,15.5 9.3,12 Z" fill="#dadada"/></g>
<g transform="translate(13,325)"><path d="M2.5,4 C1,7 0,8.5 0,10 C0,11.5 1.2,12.5 2.5,12.5 C3.8,12.5 5,11.5 5,10 C5,8.5 4,7 2.5,4 Z" fill="#dadada"/><path d="M15,0.5 C16,0 17.2,1 16.8,2 L9.8,11.2 L7.8,9.5 Z" fill="#dadada"/><path d="M7.5,10 C5,10 4,11.5 3.5,13.5 C3.2,14.8 2,15.5 1.5,15.8 C4.5,16.3 8,15.5 9.3,12 Z" fill="#dadada"/></g>
<g transform="translate(12,351)"><circle cx="8" cy="4" r="3" fill="#dadada"/><path d="M6.5,6 L6,9 H2 V12 H14 V9 H10 L9.5,6 Z" fill="#dadada"/><rect x="2" y="13.5" width="12" height="1.3" fill="#dadada"/></g>
<path d="M30,367 h3 v-3 z" fill="#bdbdbd"/>
<g transform="translate(12,377)"><path d="M7,3 C4,3 2,4 1,6 M1,6 L1,3 M1,6 L4,6.5" fill="none" stroke="#dadada" stroke-width="1.2"/><path d="M13,7 C14,9 13,12 11,14" fill="none" stroke="#dadada" stroke-width="1" stroke-dasharray="1,1"/><path d="M15,0.5 C16,0 17.2,1 16.8,2 L9.8,11.2 L7.8,9.5 Z" fill="#dadada"/><path d="M7.5,10 C5,10 4,11.5 3.5,13.5 C3.2,14.8 2,15.5 1.5,15.8 C4.5,16.3 8,15.5 9.3,12 Z" fill="#dadada"/></g>
<path d="M30,393 h3 v-3 z" fill="#bdbdbd"/>
<g transform="translate(12,403)"><path d="M1,10 L9,2 L15,7 L9,13 H4 Z" fill="none" stroke="#dadada" stroke-width="1.3"/><path d="M9,2 L15,7 L11.5,10.5 L5.5,5.5 Z" fill="#dadada"/><path d="M6,14.5 H15" stroke="#dadada" stroke-width="1.2"/></g>
<path d="M30,419 h3 v-3 z" fill="#bdbdbd"/>
<g transform="translate(12,430)"><path d="M1,7 L7,2 L13,8 L7,14 Z" fill="none" stroke="#dadada" stroke-width="1.4"/><path d="M3,3 V8" stroke="#dadada" stroke-width="1.2"/><path d="M14,10 C13,12 12.8,13 13.5,14 C14.5,14.5 15.5,14 15.2,13 C15,12 14.5,11 14,10 Z" fill="#dadada"/></g>
<path d="M30,446 h3 v-3 z" fill="#bdbdbd"/>
<g transform="translate(12,456)"><path d="M8,1 C6,5 3.5,8 3.5,11 C3.5,13.5 5.5,15.5 8,15.5 C10.5,15.5 12.5,13.5 12.5,11 C12.5,8 10,5 8,1 Z" fill="#dadada"/></g>
<g transform="translate(12,482)"><path d="M3,15 L9,9 C7,7 8,3 12,2 C15,2 16,5 14,8 C13,10 11,10 10,10 L4,16 Z" fill="#dadada"/><path d="M9,9 L11,8" stroke="#535353" stroke-width="1"/></g>
<g transform="translate(12,508)"><ellipse cx="8" cy="8" rx="8" ry="6" fill="#dadada"/><path d="M3,6 C5,5 6,8 8,6 C10,4 11,8 13,6 M2,9 C4,8 6,11 8,9 C10,7 12,10 14,9 M4,11.5 C6,10.5 9,13 12,11.5" fill="none" stroke="#535353" stroke-width="0.8"/></g>
<g transform="translate(12,534)"><path d="M2,2 H14 V5 H13 L12.5,3.5 H9.2 V13.5 L11,14 V15 H5 V14 L6.8,13.5 V3.5 H3.5 L3,5 H2 Z" fill="#dadada"/></g>
<path d="M30,550 h3 v-3 z" fill="#bdbdbd"/>
<g transform="translate(12,560)"><path d="M2,14.5 C2,10 3,7 5.5,5 L10.5,6 C11,9 9.5,12 6,14 Z" fill="none" stroke="#dadada" stroke-width="1.3"/><path d="M6,3.5 L8.5,1 L13,5.5 L10.5,8" fill="none" stroke="#dadada" stroke-width="1.3"/><path d="M2.5,14 L7,9.5" stroke="#dadada" stroke-width="1"/><circle cx="7.5" cy="9" r="1" fill="#dadada"/></g>
<path d="M30,576 h3 v-3 z" fill="#bdbdbd"/>
<g transform="translate(12,586)"><path d="M3,0.5 V13 L6,10 L9,15.5 L11,14.5 L8.5,9 H12.5 Z" fill="#111111" stroke="#dadada" stroke-width="1.1"/></g>
<path d="M30,602 h3 v-3 z" fill="#bdbdbd"/>
<g transform="translate(12,612)"><rect x="0.5" y="1.5" width="15.5" height="12" fill="#6a6a6a" stroke="#dadada" stroke-width="1.2"/></g>
<path d="M30,628 h3 v-3 z" fill="#bdbdbd"/>
<g transform="translate(12,638)"><path d="M4,15 C2,13 0.5,10 1,9 C1.5,8 3,9 4,10.5 V3 C4,2 5.5,2 5.5,3 V8 V1.8 C5.5,0.8 7.3,0.8 7.3,1.8 V8 V2 C7.3,1 9,1 9,2 V8 V3 C9,2 10.7,2 10.7,3 V11 C10.7,14 9,15.5 7.5,15.5 Z" fill="#dadada"/></g>
<path d="M30,654 h3 v-3 z" fill="#bdbdbd"/>
<g transform="translate(12,664)"><circle cx="6.5" cy="6.5" r="5.3" fill="none" stroke="#dadada" stroke-width="1.5"/><path d="M10.5,10.5 L15,15" stroke="#dadada" stroke-width="2.2"/><path d="M4,5 A3,3 0 0 1 6,3.2" stroke="#dadada" stroke-width="0.9" fill="none"/></g>
<g transform="translate(12.5,690)"><rect x="1" y="1" width="14" height="12.5" fill="none" stroke="#dadada" stroke-width="1.3"/><path d="M1,1 L15,13.5 M15,1 L1,13.5" stroke="#dadada" stroke-width="1"/><circle cx="1" cy="1" r="1.3" fill="#dadada"/><circle cx="15" cy="1" r="1.3" fill="#dadada"/><circle cx="1" cy="13.5" r="1.3" fill="#dadada"/><circle cx="15" cy="13.5" r="1.3" fill="#dadada"/></g>
<g transform="translate(11.5,716)"><circle cx="2" cy="8" r="1.8" fill="#dadada"/><circle cx="8" cy="8" r="1.8" fill="#dadada"/><circle cx="14" cy="8" r="1.8" fill="#dadada"/></g>
<path d="M29.5,732 h3 v-3 z" fill="#bdbdbd"/>
<rect x="9" y="747" width="6" height="6" fill="#dadada"/><rect x="5.5" y="743.5" width="6" height="6" fill="#111" stroke="#dadada" stroke-width="1"/>
<path d="M23,747.5 H29 V752.5 M23,747.5 L25,745.5 M23,747.5 L25,749.5 M29,752.5 L27,750.5 M29,752.5 L31,750.5" fill="none" stroke="#dadada" stroke-width="1.1" />
<rect x="15.5" y="768.5" width="17.5" height="18" fill="#d8861a" stroke="#ffffff" stroke-width="1.5"/>
<rect x="15.5" y="768.5" width="17.5" height="18" fill="none" stroke="#222" stroke-width="0.5" transform="translate(0,0)"/>
<rect x="5" y="759.5" width="17.5" height="17.5" fill="#000000" stroke="#ffffff" stroke-width="1.5"/>
<rect x="11.5" y="799.5" width="16.5" height="12" fill="none" stroke="#dadada" stroke-width="1.2"/><circle cx="19.75" cy="805.5" r="3.6" fill="none" stroke="#dadada" stroke-width="1" stroke-dasharray="1,1"/>
<rect x="16.5" y="824.5" width="11" height="8" fill="#535353" stroke="#dadada" stroke-width="1.2"/><path d="M16.5,828.5 H11.5 V837.5 H22.5 V832.5" fill="none" stroke="#dadada" stroke-width="1.2"/>
<path d="M30,838 h3 v-3 z" fill="#bdbdbd"/>
<rect x="1340" y="59" width="580" height="11" fill="#424242" />
<path d="M1367.5,62 L1365,64.5 L1367.5,67 M1371,62 L1368.5,64.5 L1371,67" fill="none" stroke="#d0d0d0" stroke-width="1" />
<path d="M1906,62 L1908.5,64.5 L1906,67 M1909.5,62 L1912,64.5 L1909.5,67" fill="none" stroke="#d0d0d0" stroke-width="1" />
<rect x="1340" y="71" width="37" height="40" fill="#535353" />
<line x1="1349" y1="75.5" x2="1368" y2="75.5" stroke="#3e3e3e" stroke-width="3" stroke-dasharray="1,1"/>
<rect x="1352.5" y="85.5" width="4" height="4" fill="none" stroke="#d8d8d8" stroke-width="1"/><rect x="1352.5" y="91.5" width="4" height="4" fill="none" stroke="#d8d8d8" stroke-width="1"/><rect x="1352" y="97" width="5" height="5" fill="#d8d8d8"/>
<path d="M1360,88 C1365,87 1367,93 1361,99 M1360,88 L1363,86 M1360,88 L1362,90.5" fill="none" stroke="#d8d8d8" stroke-width="1.2" />
<rect x="1340" y="112" width="37" height="927" fill="#535353" />
<rect x="1380" y="71" width="540" height="28" fill="#424242" />
<line x1="1433.5" y1="71" x2="1433.5" y2="98" stroke="#393939" stroke-width="1" />
<text x="1389" y="87.5" font-size="11" fill="#a8a8a8" textLength="36" lengthAdjust="spacingAndGlyphs" font-weight="bold" >Couleur</text>
<line x1="1494.5" y1="71" x2="1494.5" y2="98" stroke="#393939" stroke-width="1" />
<text x="1444" y="87.5" font-size="11" fill="#a8a8a8" textLength="42" lengthAdjust="spacingAndGlyphs" font-weight="bold" >Nuancier</text>
<rect x="1495" y="71" width="59" height="28" fill="#535353" />
<text x="1504" y="87.5" font-size="11" fill="#f0f0f0" textLength="42" lengthAdjust="spacingAndGlyphs" font-weight="bold" >Pinceaux</text>
<line x1="1668.5" y1="71" x2="1668.5" y2="98" stroke="#393939" stroke-width="1" />
<text x="1563" y="87.5" font-size="11" fill="#a8a8a8" textLength="99" lengthAdjust="spacingAndGlyphs" font-weight="bold" >Paramètres de forme</text>
<line x1="1734.5" y1="71" x2="1734.5" y2="98" stroke="#393939" stroke-width="1" />
<text x="1679" y="87.5" font-size="11" fill="#a8a8a8" textLength="48" lengthAdjust="spacingAndGlyphs" font-weight="bold" >Propriétés</text>
<line x1="1794.5" y1="71" x2="1794.5" y2="98" stroke="#393939" stroke-width="1" />
<text x="1745" y="87.5" font-size="11" fill="#a8a8a8" textLength="42" lengthAdjust="spacingAndGlyphs" font-weight="bold" >Réglages</text>
<line x1="1903" y1="83.5" x2="1913" y2="83.5" stroke="#c8c8c8" stroke-width="1" />
<line x1="1903" y1="85.5" x2="1913" y2="85.5" stroke="#c8c8c8" stroke-width="1" />
<line x1="1903" y1="87.5" x2="1913" y2="87.5" stroke="#c8c8c8" stroke-width="1" />
<line x1="1903" y1="89.5" x2="1913" y2="89.5" stroke="#c8c8c8" stroke-width="1" />
<rect x="1380" y="99" width="540" height="500" fill="#535353" />
<text x="1386" y="121" font-size="11" fill="#d4d4d4" textLength="50" lengthAdjust="spacingAndGlyphs" >Epaisseur :</text>
<rect x="1507.5" y="107.5" width="55" height="16" fill="#434343" stroke="#5c5c5c" stroke-width="1"/>
<text x="1512.5" y="120" font-size="11" fill="#e8e8e8" textLength="25" lengthAdjust="spacingAndGlyphs" >39 px</text>
<path d="M1575.5,117 H1582 L1583.5,118.5 H1593 V134 H1575.5 Z" fill="#dcdcdc" />
<path d="M1590,120.5 C1590.7,120.2 1591.5,121 1591.1,121.7 L1585.5,130 L1584,128.6 Z" fill="#333" />
<path d="M1583.5,129 C1581.5,129 1580.5,130 1580,131.5 C1579.7,132.3 1579,132.8 1578.5,133 C1581,133.5 1583.5,132.8 1584.5,130.3 Z" fill="#333" />
<rect x="1388" y="134" width="166" height="3" fill="#707070" />
<path d="M1419,138 L1425,145 V148 H1413.5 V145 Z" fill="#ececec" />
<rect x="1380.5" y="149.5" width="225.5" height="33" fill="#464646" />
<rect x="1381.5" y="151" width="30.5" height="30" fill="#4f4f4f" />
<circle cx="1396.8" cy="166" r="14" fill="#ffffff" filter="url(#soft)"/>
<rect x="1413.6" y="151" width="30.5" height="30" fill="#4f4f4f" />
<circle cx="1428.8999999999999" cy="166" r="14" fill="#ffffff" filter="url(#soft)"/>
<rect x="1445.7" y="151" width="30.5" height="30" fill="#4f4f4f" />
<circle cx="1461.0" cy="166" r="14" fill="#ffffff" filter="url(#soft)"/>
<rect x="1477.8" y="151" width="30.5" height="30" fill="#4f4f4f" />
<circle cx="1493.1" cy="166" r="14" fill="#ffffff" filter="url(#soft)"/>
<rect x="1509.9" y="151" width="30.5" height="30" fill="#4f4f4f" />
<circle cx="1525.2" cy="166" r="14" fill="#ffffff" filter="url(#soft)"/>
<rect x="1542.0" y="151" width="30.5" height="30" fill="#4f4f4f" />
<circle cx="1557.3" cy="166" r="5.5" fill="#ffffff" filter="url(#soft)"/>
<rect x="1574.1" y="151" width="30.5" height="30" fill="#4f4f4f" />
<circle cx="1589.3999999999999" cy="166" r="14" fill="#ffffff" filter="url(#soft)"/>
<rect x="1380.5" y="184" width="470" height="391" fill="#454545" />
<clipPath id="gridclip"><rect x="1380" y="184" width="471" height="390.5"/></clipPath>
<g clip-path="url(#gridclip)">
<rect x="1380.7" y="185.4" width="155.3" height="44.8" fill="#535353" />
<text x="1387.2" y="222.9" font-size="11" fill="#e4e4e4" textLength="51" lengthAdjust="spacingAndGlyphs" >Arrondi flou</text>
<rect x="1537.9" y="185.4" width="155.3" height="44.8" fill="#535353" />
<text x="1544.4" y="222.9" font-size="11" fill="#e4e4e4" textLength="50" lengthAdjust="spacingAndGlyphs" >Arrondi net</text>
<rect x="1695.1" y="185.4" width="155.3" height="44.8" fill="#535353" />
<text x="1701.6" y="222.9" font-size="11" fill="#e4e4e4" textLength="115" lengthAdjust="spacingAndGlyphs" >Arrondi flou pression taille</text>
<rect x="1380.7" y="231.60000000000002" width="155.3" height="44.8" fill="#535353" />
<text x="1387.2" y="269.1" font-size="11" fill="#e4e4e4" textLength="113" lengthAdjust="spacingAndGlyphs" >Arrondi net pression taille</text>
<rect x="1537.9" y="231.60000000000002" width="155.3" height="44.8" fill="#535353" />
<text x="1544.4" y="269.1" font-size="11" fill="#e4e4e4" textLength="127" lengthAdjust="spacingAndGlyphs" >Arrondi flou pression opacité</text>
<rect x="1695.1" y="231.60000000000002" width="155.3" height="44.8" fill="#535353" />
<text x="1701.6" y="269.1" font-size="11" fill="#e4e4e4" textLength="125" lengthAdjust="spacingAndGlyphs" >Arrondi net pression opacité</text>
<rect x="1380.7" y="277.8" width="155.3" height="44.8" fill="#535353" />
<text x="1387.2" y="315.3" font-size="11" fill="#e4e4e4" textLength="120" lengthAdjust="spacingAndGlyphs" >Point arrondi à propagation</text>
<rect x="1537.9" y="277.8" width="155.3" height="44.8" fill="#535353" />
<text x="1544.4" y="315.3" font-size="11" fill="#e4e4e4" textLength="143" lengthAdjust="spacingAndGlyphs" >Emoussée arrondie à propaga...</text>
<rect x="1695.1" y="277.8" width="155.3" height="44.8" fill="#535353" />
<text x="1701.6" y="315.3" font-size="11" fill="#e4e4e4" textLength="144" lengthAdjust="spacingAndGlyphs" >Brosse courbe arrondie à faibl...</text>
<rect x="1380.7" y="324.0" width="155.3" height="44.8" fill="#535353" />
<text x="1387.2" y="361.5" font-size="11" fill="#e4e4e4" textLength="141" lengthAdjust="spacingAndGlyphs" >Angle arrondi à propagation f...</text>
<rect x="1537.9" y="324.0" width="155.3" height="44.8" fill="#535353" />
<text x="1544.4" y="361.5" font-size="11" fill="#e4e4e4" textLength="138" lengthAdjust="spacingAndGlyphs" >Brosse fine à propagation en...</text>
<rect x="1695.1" y="324.0" width="155.3" height="44.8" fill="#535353" />
<text x="1701.6" y="361.5" font-size="11" fill="#e4e4e4" textLength="145" lengthAdjust="spacingAndGlyphs" >Point plat à propagation moye...</text>
<rect x="1380.7" y="370.20000000000005" width="155.3" height="44.8" fill="#535353" />
<text x="1387.2" y="407.70000000000005" font-size="11" fill="#e4e4e4" textLength="145" lengthAdjust="spacingAndGlyphs" >Emoussée plate à propagation...</text>
<rect x="1537.9" y="370.20000000000005" width="155.3" height="44.8" fill="#535353" />
<text x="1544.4" y="407.70000000000005" font-size="11" fill="#e4e4e4" textLength="141" lengthAdjust="spacingAndGlyphs" >Brosse courbe plate à propag...</text>
<rect x="1695.1" y="370.20000000000005" width="155.3" height="44.8" fill="#535353" />
<text x="1701.6" y="407.70000000000005" font-size="11" fill="#e4e4e4" textLength="104" lengthAdjust="spacingAndGlyphs" >Brosse fine à angle plat</text>
<rect x="1380.7" y="416.4" width="155.3" height="44.8" fill="#535353" />
<text x="1387.2" y="453.9" font-size="11" fill="#e4e4e4" textLength="135.5" lengthAdjust="spacingAndGlyphs" >Brosse épaisse en éventail plat</text>
<rect x="1537.9" y="416.4" width="155.3" height="44.8" fill="#535353" />
<text x="1544.4" y="453.9" font-size="11" fill="#e4e4e4" textLength="141" lengthAdjust="spacingAndGlyphs" >Arrondi adouci, pause de mai...</text>
<rect x="1695.1" y="416.4" width="155.3" height="44.8" fill="#535353" />
<text x="1701.6" y="453.9" font-size="11" fill="#e4e4e4" textLength="141" lengthAdjust="spacingAndGlyphs" >Arrondi adouci, pause de mai...</text>
<rect x="1380.7" y="462.6" width="155.3" height="44.8" fill="#535353" />
<text x="1387.2" y="500.1" font-size="11" fill="#e4e4e4" textLength="144" lengthAdjust="spacingAndGlyphs" >Angle plat, pause de main dro...</text>
<rect x="1537.9" y="462.6" width="155.3" height="44.8" fill="#535353" />
<text x="1544.4" y="500.1" font-size="11" fill="#e4e4e4" textLength="140" lengthAdjust="spacingAndGlyphs" >Angle plat, pause de main ga...</text>
<rect x="1695.1" y="462.6" width="155.3" height="44.8" fill="#535353" />
<text x="1701.6" y="500.1" font-size="11" fill="#e4e4e4" textLength="71" lengthAdjust="spacingAndGlyphs" >Anthracite carré</text>
<rect x="1380.7" y="508.80000000000007" width="155.3" height="44.8" fill="#535353" />
<text x="1387.2" y="546.3000000000001" font-size="11" fill="#e4e4e4" textLength="81" lengthAdjust="spacingAndGlyphs" >Aquarelle arrondie</text>
<rect x="1537.9" y="508.80000000000007" width="155.3" height="44.8" fill="#535353" />
<text x="1544.4" y="546.3000000000001" font-size="11" fill="#e4e4e4" textLength="112.5" lengthAdjust="spacingAndGlyphs" >Superposition d&#x27;aquarelle</text>
<rect x="1695.1" y="508.80000000000007" width="155.3" height="44.8" fill="#535353" />
<text x="1701.6" y="546.3000000000001" font-size="11" fill="#e4e4e4" textLength="73.5" lengthAdjust="spacingAndGlyphs" >Lavis d&#x27;aquarelle</text>
<rect x="1380.7" y="555.0" width="155.3" height="44.8" fill="#535353" />
<rect x="1537.9" y="555.0" width="155.3" height="44.8" fill="#535353" />
<rect x="1695.1" y="555.0" width="155.3" height="44.8" fill="#535353" />
<path d="M1389.8,193.4 L1388.2,193.7 L1386.9,194.7 L1386.0,196.2 L1385.7,197.9 L1386.0,199.6 L1386.9,201.1 L1388.2,202.1 L1389.8,202.4 L1389.8,193.4 L1392.3,192.7 L1394.9,192.0 L1397.5,191.4 L1400.1,190.8 L1402.7,190.2 L1405.2,189.7 L1407.8,189.2 L1410.4,188.8 L1413.0,188.5 L1415.6,188.3 L1418.1,188.1 L1420.7,188.0 L1423.3,188.1 L1425.9,188.2 L1428.5,188.4 L1431.0,188.6 L1433.6,189.0 L1436.2,189.4 L1438.8,189.9 L1441.4,190.4 L1444.0,191.0 L1446.5,191.6 L1449.1,192.2 L1451.7,192.9 L1454.3,193.6 L1456.9,194.2 L1459.4,194.8 L1462.0,195.4 L1464.6,196.0 L1467.2,196.5 L1469.8,196.9 L1472.4,197.3 L1474.9,197.6 L1477.5,197.8 L1480.1,198.0 L1482.7,198.0 L1485.3,198.0 L1487.8,197.9 L1490.4,197.7 L1493.0,197.5 L1495.6,197.1 L1498.2,196.7 L1500.7,196.3 L1503.3,195.8 L1505.9,195.2 L1508.5,194.6 L1511.1,194.0 L1513.7,193.4 L1513.7,193.4 L1515.2,193.7 L1516.5,194.7 L1517.4,196.2 L1517.7,197.9 L1517.4,199.6 L1516.5,201.1 L1515.2,202.1 L1513.7,202.4 L1513.7,202.4 L1511.1,203.1 L1508.5,203.8 L1505.9,204.4 L1503.3,205.0 L1500.7,205.6 L1498.2,206.1 L1495.6,206.6 L1493.0,207.0 L1490.4,207.3 L1487.8,207.5 L1485.3,207.7 L1482.7,207.8 L1480.1,207.7 L1477.5,207.6 L1474.9,207.4 L1472.4,207.2 L1469.8,206.8 L1467.2,206.4 L1464.6,205.9 L1462.0,205.4 L1459.4,204.8 L1456.9,204.2 L1454.3,203.6 L1451.7,202.9 L1449.1,202.2 L1446.5,201.6 L1444.0,201.0 L1441.4,200.4 L1438.8,199.8 L1436.2,199.3 L1433.6,198.9 L1431.0,198.5 L1428.5,198.2 L1425.9,198.0 L1423.3,197.8 L1420.7,197.8 L1418.1,197.8 L1415.6,197.9 L1413.0,198.1 L1410.4,198.3 L1407.8,198.7 L1405.2,199.1 L1402.7,199.5 L1400.1,200.0 L1397.5,200.6 L1394.9,201.2 L1392.3,201.8 L1389.8,202.4Z" fill="#ffffff" opacity="1" filter="url(#b2)" />
<path d="M1547.4,190.7 L1544.9,191.2 L1542.8,192.8 L1541.4,195.1 L1540.9,197.9 L1541.4,200.7 L1542.8,203.0 L1544.9,204.6 L1547.4,205.2 L1547.4,190.7 L1550.0,190.0 L1552.6,189.3 L1555.2,188.7 L1557.8,188.1 L1560.4,187.5 L1563.0,187.0 L1565.6,186.6 L1568.2,186.3 L1570.8,186.0 L1573.3,185.8 L1575.9,185.7 L1578.5,185.7 L1581.1,185.8 L1583.7,185.9 L1586.3,186.2 L1588.9,186.5 L1591.5,187.0 L1594.1,187.5 L1596.7,188.0 L1599.3,188.6 L1601.9,189.3 L1604.4,190.0 L1607.0,190.7 L1609.6,191.4 L1612.2,192.1 L1614.8,192.8 L1617.4,193.5 L1620.0,194.1 L1622.6,194.7 L1625.2,195.3 L1627.8,195.7 L1630.4,196.1 L1633.0,196.4 L1635.5,196.7 L1638.1,196.8 L1640.7,196.8 L1643.3,196.8 L1645.9,196.6 L1648.5,196.4 L1651.1,196.0 L1653.7,195.6 L1656.3,195.1 L1658.9,194.6 L1661.5,194.0 L1664.0,193.3 L1666.6,192.6 L1669.2,191.9 L1671.8,191.2 L1671.8,191.2 L1674.1,191.7 L1676.1,193.1 L1677.4,195.3 L1677.9,197.9 L1677.4,200.5 L1676.1,202.7 L1674.1,204.1 L1671.8,204.7 L1671.8,204.7 L1669.2,205.4 L1666.6,206.0 L1664.0,206.7 L1661.5,207.3 L1658.9,207.9 L1656.3,208.4 L1653.7,208.9 L1651.1,209.3 L1648.5,209.6 L1645.9,209.8 L1643.3,209.9 L1640.7,210.0 L1638.1,209.9 L1635.5,209.8 L1633.0,209.5 L1630.4,209.2 L1627.8,208.8 L1625.2,208.3 L1622.6,207.8 L1620.0,207.2 L1617.4,206.5 L1614.8,205.8 L1612.2,205.1 L1609.6,204.4 L1607.0,203.7 L1604.4,203.0 L1601.9,202.3 L1599.3,201.7 L1596.7,201.1 L1594.1,200.6 L1591.5,200.1 L1588.9,199.7 L1586.3,199.4 L1583.7,199.2 L1581.1,199.1 L1578.5,199.1 L1575.9,199.2 L1573.3,199.4 L1570.8,199.7 L1568.2,200.0 L1565.6,200.5 L1563.0,201.0 L1560.4,201.6 L1557.8,202.2 L1555.2,202.9 L1552.6,203.6 L1550.0,204.4 L1547.4,205.2Z" fill="#ffffff" opacity="1" />
<path d="M1705.1,196.2 L1707.6,195.3 L1710.2,194.6 L1712.7,193.8 L1715.3,193.0 L1717.8,192.3 L1720.3,191.7 L1722.9,191.1 L1725.4,190.5 L1728.0,190.0 L1730.5,189.6 L1733.1,189.3 L1735.6,189.0 L1738.1,188.8 L1740.7,188.7 L1743.2,188.7 L1745.8,188.8 L1748.3,188.9 L1750.8,189.1 L1753.4,189.4 L1755.9,189.7 L1758.5,190.1 L1761.0,190.5 L1763.6,191.0 L1766.1,191.4 L1768.6,192.0 L1771.2,192.5 L1773.7,193.0 L1776.3,193.5 L1778.8,194.0 L1781.3,194.5 L1783.9,194.9 L1786.4,195.3 L1789.0,195.7 L1791.5,196.0 L1794.1,196.3 L1796.6,196.5 L1799.1,196.7 L1801.7,196.9 L1804.2,197.0 L1806.8,197.0 L1809.3,197.0 L1811.8,197.0 L1814.4,196.9 L1816.9,196.8 L1819.5,196.6 L1822.0,196.5 L1824.6,196.3 L1827.1,196.2 L1827.1,196.7 L1824.6,197.4 L1822.0,198.1 L1819.5,198.8 L1816.9,199.5 L1814.4,200.2 L1811.8,200.8 L1809.3,201.3 L1806.8,201.9 L1804.2,202.3 L1801.7,202.7 L1799.1,203.0 L1796.6,203.3 L1794.1,203.4 L1791.5,203.5 L1789.0,203.6 L1786.4,203.6 L1783.9,203.5 L1781.3,203.3 L1778.8,203.1 L1776.3,202.8 L1773.7,202.5 L1771.2,202.1 L1768.6,201.8 L1766.1,201.4 L1763.6,200.9 L1761.0,200.5 L1758.5,200.1 L1755.9,199.6 L1753.4,199.2 L1750.8,198.8 L1748.3,198.4 L1745.8,198.0 L1743.2,197.6 L1740.7,197.3 L1738.1,197.0 L1735.6,196.8 L1733.1,196.6 L1730.5,196.4 L1728.0,196.3 L1725.4,196.2 L1722.9,196.2 L1720.3,196.2 L1717.8,196.2 L1715.3,196.3 L1712.7,196.3 L1710.2,196.4 L1707.6,196.5 L1705.1,196.7Z" fill="#ffffff" opacity="1" filter="url(#b1)" />
<path d="M1389.7,242.4 L1392.3,241.3 L1394.8,240.3 L1397.4,239.3 L1400.0,238.3 L1402.5,237.4 L1405.1,236.5 L1407.6,235.7 L1410.2,234.9 L1412.8,234.3 L1415.3,233.7 L1417.9,233.3 L1420.5,232.9 L1423.0,232.7 L1425.6,232.5 L1428.1,232.4 L1430.7,232.5 L1433.3,232.6 L1435.8,232.9 L1438.4,233.2 L1441.0,233.6 L1443.5,234.1 L1446.1,234.6 L1448.6,235.2 L1451.2,235.8 L1453.8,236.4 L1456.3,237.0 L1458.9,237.6 L1461.5,238.2 L1464.0,238.9 L1466.6,239.4 L1469.1,240.0 L1471.7,240.5 L1474.3,241.0 L1476.8,241.4 L1479.4,241.8 L1482.0,242.1 L1484.5,242.4 L1487.1,242.6 L1489.6,242.8 L1492.2,242.9 L1494.8,242.9 L1497.3,242.9 L1499.9,242.9 L1502.5,242.8 L1505.0,242.7 L1507.6,242.6 L1510.1,242.5 L1512.7,242.4 L1512.7,242.9 L1510.1,243.8 L1507.6,244.6 L1505.0,245.5 L1502.5,246.4 L1499.9,247.2 L1497.3,247.9 L1494.8,248.6 L1492.2,249.3 L1489.6,249.8 L1487.1,250.3 L1484.5,250.7 L1482.0,251.1 L1479.4,251.3 L1476.8,251.5 L1474.3,251.6 L1471.7,251.6 L1469.1,251.5 L1466.6,251.4 L1464.0,251.2 L1461.5,251.0 L1458.9,250.6 L1456.3,250.3 L1453.8,249.9 L1451.2,249.4 L1448.6,249.0 L1446.1,248.5 L1443.5,248.1 L1441.0,247.6 L1438.4,247.1 L1435.8,246.7 L1433.3,246.2 L1430.7,245.8 L1428.1,245.4 L1425.6,245.0 L1423.0,244.6 L1420.5,244.3 L1417.9,244.0 L1415.3,243.7 L1412.8,243.5 L1410.2,243.3 L1407.6,243.2 L1405.1,243.1 L1402.5,243.0 L1400.0,242.9 L1397.4,242.9 L1394.8,242.9 L1392.3,242.9 L1389.7,242.9Z" fill="#ffffff" opacity="1" />
<path d="M1551.5,239.1 L1550.1,239.4 L1549.0,240.3 L1548.2,241.6 L1547.9,243.1 L1548.2,244.6 L1549.0,245.9 L1550.1,246.8 L1551.5,247.1 L1551.5,239.1 L1553.9,238.4 L1556.3,237.8 L1558.7,237.2 L1561.2,236.6 L1563.6,236.0 L1566.0,235.5 L1568.4,235.0 L1570.8,234.6 L1573.2,234.3 L1575.6,234.0 L1578.0,233.8 L1580.5,233.7 L1582.9,233.6 L1585.3,233.6 L1587.7,233.7 L1590.1,233.9 L1592.5,234.1 L1594.9,234.4 L1597.3,234.8 L1599.8,235.2 L1602.2,235.6 L1604.6,236.1 L1607.0,236.6 L1609.4,237.1 L1611.8,237.6 L1614.2,238.2 L1616.6,238.7 L1619.1,239.2 L1621.5,239.6 L1623.9,240.1 L1626.3,240.5 L1628.7,240.8 L1631.1,241.1 L1633.5,241.4 L1635.9,241.6 L1638.4,241.7 L1640.8,241.7 L1643.2,241.7 L1645.6,241.7 L1648.0,241.6 L1650.4,241.4 L1652.8,241.2 L1655.2,240.9 L1657.7,240.6 L1660.1,240.2 L1662.5,239.9 L1664.9,239.5 L1667.3,239.1 L1667.3,239.1 L1668.7,239.4 L1669.8,240.3 L1670.6,241.6 L1670.9,243.1 L1670.6,244.6 L1669.8,245.9 L1668.7,246.8 L1667.3,247.1 L1667.3,247.1 L1664.9,247.8 L1662.5,248.4 L1660.1,249.0 L1657.7,249.6 L1655.2,250.2 L1652.8,250.7 L1650.4,251.2 L1648.0,251.6 L1645.6,251.9 L1643.2,252.2 L1640.8,252.4 L1638.4,252.5 L1635.9,252.6 L1633.5,252.6 L1631.1,252.5 L1628.7,252.3 L1626.3,252.1 L1623.9,251.8 L1621.5,251.4 L1619.1,251.0 L1616.6,250.6 L1614.2,250.1 L1611.8,249.6 L1609.4,249.1 L1607.0,248.6 L1604.6,248.0 L1602.2,247.5 L1599.8,247.0 L1597.3,246.6 L1594.9,246.1 L1592.5,245.7 L1590.1,245.4 L1587.7,245.1 L1585.3,244.8 L1582.9,244.6 L1580.5,244.5 L1578.0,244.5 L1575.6,244.5 L1573.2,244.5 L1570.8,244.6 L1568.4,244.8 L1566.0,245.0 L1563.6,245.3 L1561.2,245.6 L1558.7,246.0 L1556.3,246.3 L1553.9,246.7 L1551.5,247.1Z" fill="#ffffff" opacity="1" filter="url(#b2)" mask="url(#fadeMask)"/>
<path d="M1707.4,236.6 L1705.0,237.1 L1702.9,238.7 L1701.6,240.9 L1701.1,243.6 L1701.6,246.3 L1702.9,248.5 L1705.0,250.1 L1707.4,250.6 L1707.4,236.6 L1709.9,236.0 L1712.3,235.4 L1714.8,234.8 L1717.3,234.2 L1719.7,233.7 L1722.2,233.2 L1724.7,232.8 L1727.1,232.5 L1729.6,232.2 L1732.0,231.9 L1734.5,231.8 L1737.0,231.7 L1739.4,231.8 L1741.9,231.9 L1744.4,232.0 L1746.8,232.3 L1749.3,232.6 L1751.8,233.0 L1754.2,233.4 L1756.7,233.9 L1759.2,234.4 L1761.6,234.9 L1764.1,235.5 L1766.5,236.1 L1769.0,236.7 L1771.5,237.3 L1773.9,237.9 L1776.4,238.4 L1778.9,238.9 L1781.3,239.4 L1783.8,239.8 L1786.3,240.2 L1788.7,240.5 L1791.2,240.8 L1793.7,240.9 L1796.1,241.0 L1798.6,241.1 L1801.1,241.0 L1803.5,240.9 L1806.0,240.7 L1808.4,240.5 L1810.9,240.2 L1813.4,239.9 L1815.8,239.5 L1818.3,239.0 L1820.8,238.6 L1823.2,238.1 L1825.7,237.6 L1825.7,237.6 L1827.8,238.1 L1829.5,239.4 L1830.7,241.3 L1831.1,243.6 L1830.7,245.9 L1829.5,247.8 L1827.8,249.1 L1825.7,249.6 L1825.7,249.6 L1823.2,250.3 L1820.8,251.0 L1818.3,251.6 L1815.8,252.2 L1813.4,252.8 L1810.9,253.4 L1808.4,253.8 L1806.0,254.2 L1803.5,254.6 L1801.1,254.9 L1798.6,255.1 L1796.1,255.2 L1793.7,255.2 L1791.2,255.1 L1788.7,255.0 L1786.3,254.8 L1783.8,254.5 L1781.3,254.2 L1778.9,253.8 L1776.4,253.3 L1773.9,252.8 L1771.5,252.3 L1769.0,251.7 L1766.5,251.1 L1764.1,250.5 L1761.6,249.9 L1759.2,249.4 L1756.7,248.8 L1754.2,248.3 L1751.8,247.9 L1749.3,247.5 L1746.8,247.1 L1744.4,246.9 L1741.9,246.7 L1739.4,246.5 L1737.0,246.5 L1734.5,246.5 L1732.0,246.6 L1729.6,246.7 L1727.1,247.0 L1724.7,247.3 L1722.2,247.6 L1719.7,248.0 L1717.3,248.5 L1714.8,249.0 L1712.3,249.5 L1709.9,250.0 L1707.4,250.6Z" fill="#ffffff" opacity="1" filter="url(#b2)" />
<path d="M1387.7,288.6 L1390.3,287.7 L1393.0,286.9 L1395.6,286.1 L1398.3,285.3 L1400.9,284.5 L1403.6,283.8 L1406.2,283.2 L1408.9,282.6 L1411.5,282.1 L1414.2,281.7 L1416.8,281.4 L1419.5,281.1 L1422.1,280.9 L1424.7,280.8 L1427.4,280.8 L1430.0,280.9 L1432.7,281.1 L1435.3,281.3 L1438.0,281.7 L1440.6,282.1 L1443.3,282.5 L1445.9,282.9 L1448.6,283.4 L1451.2,284.0 L1453.8,284.5 L1456.5,285.0 L1459.1,285.6 L1461.8,286.1 L1464.4,286.6 L1467.1,287.1 L1469.7,287.5 L1472.4,287.9 L1475.0,288.3 L1477.7,288.6 L1480.3,288.9 L1483.0,289.2 L1485.6,289.3 L1488.2,289.5 L1490.9,289.5 L1493.5,289.6 L1496.2,289.6 L1498.8,289.5 L1501.5,289.4 L1504.1,289.3 L1506.8,289.1 L1509.4,288.9 L1512.1,288.7 L1514.7,288.6 L1514.7,289.1 L1512.1,289.8 L1509.4,290.5 L1506.8,291.2 L1504.1,291.8 L1501.5,292.5 L1498.8,293.1 L1496.2,293.6 L1493.5,294.1 L1490.9,294.5 L1488.2,294.9 L1485.6,295.2 L1483.0,295.4 L1480.3,295.6 L1477.7,295.7 L1475.0,295.8 L1472.4,295.7 L1469.7,295.6 L1467.1,295.5 L1464.4,295.3 L1461.8,295.0 L1459.1,294.7 L1456.5,294.4 L1453.8,294.0 L1451.2,293.6 L1448.6,293.2 L1445.9,292.8 L1443.3,292.4 L1440.6,292.0 L1438.0,291.7 L1435.3,291.3 L1432.7,290.9 L1430.0,290.6 L1427.4,290.3 L1424.7,290.0 L1422.1,289.7 L1419.5,289.5 L1416.8,289.3 L1414.2,289.1 L1411.5,289.0 L1408.9,288.9 L1406.2,288.8 L1403.6,288.8 L1400.9,288.8 L1398.3,288.8 L1395.6,288.9 L1393.0,288.9 L1390.3,289.0 L1387.7,289.1Z" fill="#ffffff" opacity="1" />
<g filter="url(#b06)"><path d="M1549.4,281.8 L1554.2,280.9 L1559.1,280.1 L1563.9,279.3 L1568.7,278.8 L1573.5,278.4 L1578.3,278.3 L1583.1,278.4 L1587.9,278.8 L1592.7,279.3 L1597.5,280.1 L1602.3,280.9 L1607.1,281.8 L1612.0,282.7 L1616.8,283.6 L1621.6,284.3 L1626.4,284.8 L1631.2,285.2 L1636.0,285.3 L1640.8,285.2 L1645.6,284.8 L1650.4,284.3 L1655.2,283.6 L1660.0,282.7 L1664.9,281.8" fill="none" stroke="#ffffff" stroke-width="1.37" stroke-linecap="round" opacity="0.66"/><path d="M1546.1,283.1 L1550.7,282.2 L1555.3,281.3 L1559.9,280.6 L1564.4,280.0 L1569.0,279.7 L1573.6,279.6 L1578.2,279.7 L1582.7,280.0 L1587.3,280.6 L1591.9,281.3 L1596.5,282.2 L1601.0,283.1 L1605.6,284.0 L1610.2,284.8 L1614.8,285.5 L1619.3,286.1 L1623.9,286.5 L1628.5,286.6 L1633.1,286.5 L1637.6,286.1 L1642.2,285.5 L1646.8,284.8 L1651.4,284.0 L1655.9,283.1" fill="none" stroke="#ffffff" stroke-width="1.04" stroke-linecap="round" opacity="0.50"/><path d="M1563.9,284.3 L1567.7,283.4 L1571.5,282.6 L1575.4,281.9 L1579.2,281.3 L1583.1,281.0 L1586.9,280.8 L1590.7,281.0 L1594.6,281.3 L1598.4,281.9 L1602.2,282.6 L1606.1,283.4 L1609.9,284.3 L1613.8,285.3 L1617.6,286.1 L1621.4,286.8 L1625.3,287.4 L1629.1,287.7 L1632.9,287.8 L1636.8,287.7 L1640.6,287.4 L1644.5,286.8 L1648.3,286.1 L1652.1,285.3 L1656.0,284.3" fill="none" stroke="#ffffff" stroke-width="1.38" stroke-linecap="round" opacity="0.61"/><path d="M1547.8,285.6 L1552.3,284.7 L1556.7,283.9 L1561.2,283.1 L1565.7,282.6 L1570.2,282.2 L1574.7,282.1 L1579.2,282.2 L1583.6,282.6 L1588.1,283.1 L1592.6,283.9 L1597.1,284.7 L1601.6,285.6 L1606.0,286.5 L1610.5,287.4 L1615.0,288.1 L1619.5,288.6 L1624.0,289.0 L1628.5,289.1 L1632.9,289.0 L1637.4,288.6 L1641.9,288.1 L1646.4,287.4 L1650.9,286.5 L1655.4,285.6" fill="none" stroke="#ffffff" stroke-width="1.46" stroke-linecap="round" opacity="0.63"/><path d="M1557.7,286.9 L1561.8,286.0 L1566.0,285.1 L1570.2,284.4 L1574.3,283.9 L1578.5,283.5 L1582.6,283.4 L1586.8,283.5 L1590.9,283.9 L1595.1,284.4 L1599.3,285.1 L1603.4,286.0 L1607.6,286.9 L1611.7,287.8 L1615.9,288.6 L1620.0,289.4 L1624.2,289.9 L1628.4,290.3 L1632.5,290.4 L1636.7,290.3 L1640.8,289.9 L1645.0,289.4 L1649.1,288.6 L1653.3,287.8 L1657.5,286.9" fill="none" stroke="#ffffff" stroke-width="1.09" stroke-linecap="round" opacity="0.66"/><path d="M1545.5,288.2 L1550.4,287.3 L1555.3,286.4 L1560.2,285.7 L1565.1,285.1 L1569.9,284.8 L1574.8,284.7 L1579.7,284.8 L1584.6,285.1 L1589.5,285.7 L1594.4,286.4 L1599.3,287.3 L1604.2,288.2 L1609.1,289.1 L1614.0,289.9 L1618.9,290.6 L1623.8,291.2 L1628.7,291.5 L1633.5,291.7 L1638.4,291.5 L1643.3,291.2 L1648.2,290.6 L1653.1,289.9 L1658.0,289.1 L1662.9,288.2" fill="none" stroke="#ffffff" stroke-width="1.58" stroke-linecap="round" opacity="0.72"/><path d="M1558.5,289.4 L1562.9,288.5 L1567.3,287.7 L1571.7,287.0 L1576.1,286.4 L1580.6,286.1 L1585.0,285.9 L1589.4,286.1 L1593.8,286.4 L1598.2,287.0 L1602.6,287.7 L1607.0,288.5 L1611.4,289.4 L1615.9,290.3 L1620.3,291.2 L1624.7,291.9 L1629.1,292.5 L1633.5,292.8 L1637.9,292.9 L1642.3,292.8 L1646.7,292.5 L1651.1,291.9 L1655.6,291.2 L1660.0,290.3 L1664.4,289.4" fill="none" stroke="#ffffff" stroke-width="1.21" stroke-linecap="round" opacity="0.76"/><path d="M1562.7,290.7 L1567.2,289.8 L1571.7,289.0 L1576.1,288.2 L1580.6,287.7 L1585.1,287.3 L1589.6,287.2 L1594.0,287.3 L1598.5,287.7 L1603.0,288.2 L1607.4,289.0 L1611.9,289.8 L1616.4,290.7 L1620.9,291.6 L1625.3,292.5 L1629.8,293.2 L1634.3,293.7 L1638.7,294.1 L1643.2,294.2 L1647.7,294.1 L1652.2,293.7 L1656.6,293.2 L1661.1,292.5 L1665.6,291.6 L1670.0,290.7" fill="none" stroke="#ffffff" stroke-width="1.02" stroke-linecap="round" opacity="0.45"/><path d="M1563.3,292.0 L1567.3,291.1 L1571.3,290.2 L1575.4,289.5 L1579.4,289.0 L1583.4,288.6 L1587.5,288.5 L1591.5,288.6 L1595.5,289.0 L1599.5,289.5 L1603.6,290.2 L1607.6,291.1 L1611.6,292.0 L1615.7,292.9 L1619.7,293.7 L1623.7,294.5 L1627.7,295.0 L1631.8,295.4 L1635.8,295.5 L1639.8,295.4 L1643.9,295.0 L1647.9,294.5 L1651.9,293.7 L1655.9,292.9 L1660.0,292.0" fill="none" stroke="#ffffff" stroke-width="1.27" stroke-linecap="round" opacity="0.52"/><path d="M1552.3,293.3 L1556.8,292.3 L1561.3,291.5 L1565.8,290.8 L1570.3,290.2 L1574.9,289.9 L1579.4,289.8 L1583.9,289.9 L1588.4,290.2 L1592.9,290.8 L1597.5,291.5 L1602.0,292.3 L1606.5,293.3 L1611.0,294.2 L1615.5,295.0 L1620.1,295.7 L1624.6,296.3 L1629.1,296.6 L1633.6,296.8 L1638.1,296.6 L1642.7,296.3 L1647.2,295.7 L1651.7,295.0 L1656.2,294.2 L1660.8,293.3" fill="none" stroke="#ffffff" stroke-width="1.60" stroke-linecap="round" opacity="0.66"/><path d="M1557.9,294.5 L1562.0,293.6 L1566.0,292.8 L1570.1,292.1 L1574.2,291.5 L1578.2,291.1 L1582.3,291.0 L1586.4,291.1 L1590.5,291.5 L1594.5,292.1 L1598.6,292.8 L1602.7,293.6 L1606.7,294.5 L1610.8,295.4 L1614.9,296.3 L1619.0,297.0 L1623.0,297.6 L1627.1,297.9 L1631.2,298.0 L1635.2,297.9 L1639.3,297.6 L1643.4,297.0 L1647.4,296.3 L1651.5,295.4 L1655.6,294.5" fill="none" stroke="#ffffff" stroke-width="1.40" stroke-linecap="round" opacity="0.85"/><path d="M1548.0,295.8 L1552.4,294.9 L1556.8,294.1 L1561.2,293.3 L1565.6,292.8 L1570.0,292.4 L1574.4,292.3 L1578.8,292.4 L1583.2,292.8 L1587.6,293.3 L1592.0,294.1 L1596.4,294.9 L1600.8,295.8 L1605.2,296.7 L1609.6,297.6 L1614.0,298.3 L1618.4,298.8 L1622.7,299.2 L1627.1,299.3 L1631.5,299.2 L1635.9,298.8 L1640.3,298.3 L1644.7,297.6 L1649.1,296.7 L1653.5,295.8" fill="none" stroke="#ffffff" stroke-width="1.32" stroke-linecap="round" opacity="0.81"/></g>
<g filter="url(#b06)"><path d="M1700.9,283.3 L1706.0,282.5 L1711.1,281.8 L1716.2,281.2 L1721.2,280.7 L1726.3,280.4 L1731.4,280.3 L1736.5,280.4 L1741.6,280.7 L1746.7,281.2 L1751.8,281.8 L1756.9,282.5 L1762.0,283.3 L1767.1,284.1 L1772.2,284.8 L1777.3,285.4 L1782.3,285.9 L1787.4,286.2 L1792.5,286.3 L1797.6,286.2 L1802.7,285.9 L1807.8,285.4 L1812.9,284.8 L1818.0,284.1 L1823.1,283.3" fill="none" stroke="#ffffff" stroke-width="2.39" stroke-linecap="round" opacity="0.54"/><path d="M1704.2,286.1 L1708.8,285.3 L1713.5,284.6 L1718.1,283.9 L1722.7,283.5 L1727.3,283.2 L1731.9,283.1 L1736.5,283.2 L1741.1,283.5 L1745.7,283.9 L1750.3,284.6 L1755.0,285.3 L1759.6,286.1 L1764.2,286.8 L1768.8,287.6 L1773.4,288.2 L1778.0,288.6 L1782.6,288.9 L1787.2,289.1 L1791.8,288.9 L1796.4,288.6 L1801.1,288.2 L1805.7,287.6 L1810.3,286.8 L1814.9,286.1" fill="none" stroke="#ffffff" stroke-width="2.74" stroke-linecap="round" opacity="0.87"/><path d="M1707.0,288.8 L1712.0,288.0 L1717.0,287.3 L1722.0,286.7 L1727.1,286.2 L1732.1,285.9 L1737.1,285.8 L1742.2,285.9 L1747.2,286.2 L1752.2,286.7 L1757.2,287.3 L1762.3,288.0 L1767.3,288.8 L1772.3,289.6 L1777.3,290.3 L1782.4,290.9 L1787.4,291.4 L1792.4,291.7 L1797.4,291.8 L1802.5,291.7 L1807.5,291.4 L1812.5,290.9 L1817.6,290.3 L1822.6,289.6 L1827.6,288.8" fill="none" stroke="#ffffff" stroke-width="2.72" stroke-linecap="round" opacity="0.51"/><path d="M1714.9,291.6 L1719.0,290.8 L1723.2,290.1 L1727.4,289.4 L1731.5,289.0 L1735.7,288.7 L1739.9,288.6 L1744.0,288.7 L1748.2,289.0 L1752.3,289.4 L1756.5,290.1 L1760.7,290.8 L1764.8,291.6 L1769.0,292.3 L1773.1,293.1 L1777.3,293.7 L1781.5,294.1 L1785.6,294.4 L1789.8,294.6 L1794.0,294.4 L1798.1,294.1 L1802.3,293.7 L1806.4,293.1 L1810.6,292.3 L1814.8,291.6" fill="none" stroke="#ffffff" stroke-width="2.67" stroke-linecap="round" opacity="0.89"/><path d="M1702.4,294.3 L1707.1,293.5 L1711.9,292.8 L1716.6,292.2 L1721.4,291.7 L1726.1,291.4 L1730.9,291.3 L1735.6,291.4 L1740.3,291.7 L1745.1,292.2 L1749.8,292.8 L1754.6,293.5 L1759.3,294.3 L1764.1,295.1 L1768.8,295.8 L1773.6,296.4 L1778.3,296.9 L1783.1,297.2 L1787.8,297.3 L1792.5,297.2 L1797.3,296.9 L1802.0,296.4 L1806.8,295.8 L1811.5,295.1 L1816.3,294.3" fill="none" stroke="#ffffff" stroke-width="4.21" stroke-linecap="round" opacity="0.92"/></g>
<path d="M1410.8,326.0 L1407.7,326.7 L1405.1,328.6 L1403.3,331.6 L1402.7,335.0 L1403.3,338.4 L1405.1,341.4 L1407.7,343.3 L1410.8,344.0 L1410.8,326.0 L1413.0,325.7 L1415.2,325.4 L1417.4,325.2 L1419.6,324.9 L1421.9,324.7 L1424.1,324.5 L1426.3,324.3 L1428.5,324.2 L1430.7,324.1 L1432.9,324.0 L1435.1,324.0 L1437.3,324.0 L1439.6,324.0 L1441.8,324.1 L1444.0,324.2 L1446.2,324.4 L1448.4,324.7 L1450.6,324.9 L1452.8,325.3 L1455.0,325.7 L1457.3,326.1 L1459.5,326.5 L1461.7,327.0 L1463.9,327.5 L1466.1,328.0 L1468.3,328.5 L1470.5,329.0 L1472.8,329.5 L1475.0,329.9 L1477.2,330.4 L1479.4,330.8 L1481.6,331.2 L1483.8,331.5 L1486.0,331.9 L1488.2,332.1 L1490.5,332.3 L1492.7,332.5 L1494.9,332.6 L1497.1,332.7 L1499.3,332.8 L1501.5,332.8 L1503.7,332.7 L1505.9,332.7 L1508.2,332.6 L1510.4,332.4 L1512.6,332.3 L1514.8,332.2 L1517.0,332.0 L1517.0,332.0 L1518.0,332.2 L1518.9,332.9 L1519.5,333.9 L1519.7,335.0 L1519.5,336.1 L1518.9,337.1 L1518.0,337.8 L1517.0,338.0 L1517.0,338.0 L1514.8,338.6 L1512.6,339.2 L1510.4,339.8 L1508.2,340.4 L1505.9,341.0 L1503.7,341.5 L1501.5,342.0 L1499.3,342.4 L1497.1,342.8 L1494.9,343.2 L1492.7,343.4 L1490.5,343.7 L1488.2,343.8 L1486.0,343.9 L1483.8,344.0 L1481.6,344.0 L1479.4,343.9 L1477.2,343.8 L1475.0,343.7 L1472.8,343.5 L1470.5,343.3 L1468.3,343.1 L1466.1,342.8 L1463.9,342.5 L1461.7,342.2 L1459.5,341.9 L1457.3,341.6 L1455.0,341.3 L1452.8,341.1 L1450.6,340.8 L1448.4,340.6 L1446.2,340.4 L1444.0,340.2 L1441.8,340.1 L1439.6,340.0 L1437.3,340.0 L1435.1,340.1 L1432.9,340.2 L1430.7,340.4 L1428.5,340.6 L1426.3,340.9 L1424.1,341.3 L1421.9,341.7 L1419.6,342.1 L1417.4,342.5 L1415.2,343.0 L1413.0,343.5 L1410.8,344.0Z" fill="#ffffff" opacity="1" filter="url(#b1)" />
<g filter="url(#b1)"><path d="M1554.6,325.0 L1559.1,324.1 L1563.5,323.2 L1568.0,322.5 L1572.5,322.0 L1576.9,321.6 L1581.4,321.5 L1585.8,321.6 L1590.3,322.0 L1594.8,322.5 L1599.2,323.2 L1603.7,324.1 L1608.1,325.0 L1612.6,325.9 L1617.1,326.8 L1621.5,327.5 L1626.0,328.0 L1630.4,328.4 L1634.9,328.5 L1639.4,328.4 L1643.8,328.0 L1648.3,327.5 L1652.8,326.8 L1657.2,325.9 L1661.7,325.0" fill="none" stroke="#ffffff" stroke-width="2.19" stroke-linecap="round" opacity="0.92"/><path d="M1560.7,326.0 L1565.2,325.0 L1569.7,324.2 L1574.2,323.5 L1578.7,322.9 L1583.1,322.6 L1587.6,322.5 L1592.1,322.6 L1596.6,322.9 L1601.1,323.5 L1605.6,324.2 L1610.1,325.0 L1614.6,326.0 L1619.0,326.9 L1623.5,327.7 L1628.0,328.4 L1632.5,329.0 L1637.0,329.3 L1641.5,329.5 L1646.0,329.3 L1650.5,329.0 L1654.9,328.4 L1659.4,327.7 L1663.9,326.9 L1668.4,326.0" fill="none" stroke="#ffffff" stroke-width="2.08" stroke-linecap="round" opacity="0.92"/><path d="M1560.3,326.9 L1564.8,326.0 L1569.3,325.2 L1573.8,324.4 L1578.3,323.9 L1582.8,323.5 L1587.3,323.4 L1591.8,323.5 L1596.3,323.9 L1600.8,324.4 L1605.3,325.2 L1609.8,326.0 L1614.3,326.9 L1618.8,327.8 L1623.3,328.7 L1627.8,329.4 L1632.3,329.9 L1636.8,330.3 L1641.3,330.4 L1645.8,330.3 L1650.3,329.9 L1654.8,329.4 L1659.3,328.7 L1663.8,327.8 L1668.3,326.9" fill="none" stroke="#ffffff" stroke-width="1.95" stroke-linecap="round" opacity="0.56"/><path d="M1553.6,327.9 L1558.6,327.0 L1563.6,326.1 L1568.6,325.4 L1573.6,324.8 L1578.6,324.5 L1583.6,324.4 L1588.6,324.5 L1593.6,324.8 L1598.6,325.4 L1603.6,326.1 L1608.5,327.0 L1613.5,327.9 L1618.5,328.8 L1623.5,329.6 L1628.5,330.3 L1633.5,330.9 L1638.5,331.2 L1643.5,331.4 L1648.5,331.2 L1653.5,330.9 L1658.5,330.3 L1663.5,329.6 L1668.5,328.8 L1673.5,327.9" fill="none" stroke="#ffffff" stroke-width="2.41" stroke-linecap="round" opacity="0.57"/><path d="M1557.5,328.8 L1561.9,327.9 L1566.2,327.1 L1570.5,326.3 L1574.9,325.8 L1579.2,325.4 L1583.6,325.3 L1587.9,325.4 L1592.2,325.8 L1596.6,326.3 L1600.9,327.1 L1605.2,327.9 L1609.6,328.8 L1613.9,329.7 L1618.3,330.6 L1622.6,331.3 L1626.9,331.8 L1631.3,332.2 L1635.6,332.3 L1639.9,332.2 L1644.3,331.8 L1648.6,331.3 L1653.0,330.6 L1657.3,329.7 L1661.6,328.8" fill="none" stroke="#ffffff" stroke-width="2.04" stroke-linecap="round" opacity="0.50"/><path d="M1544.5,329.8 L1549.3,328.9 L1554.1,328.0 L1558.9,327.3 L1563.8,326.7 L1568.6,326.4 L1573.4,326.3 L1578.2,326.4 L1583.0,326.7 L1587.8,327.3 L1592.7,328.0 L1597.5,328.9 L1602.3,329.8 L1607.1,330.7 L1611.9,331.5 L1616.8,332.2 L1621.6,332.8 L1626.4,333.1 L1631.2,333.3 L1636.0,333.1 L1640.9,332.8 L1645.7,332.2 L1650.5,331.5 L1655.3,330.7 L1660.1,329.8" fill="none" stroke="#ffffff" stroke-width="1.53" stroke-linecap="round" opacity="0.54"/><path d="M1561.9,330.7 L1566.5,329.8 L1571.1,329.0 L1575.7,328.2 L1580.3,327.7 L1584.9,327.3 L1589.5,327.2 L1594.0,327.3 L1598.6,327.7 L1603.2,328.2 L1607.8,329.0 L1612.4,329.8 L1617.0,330.7 L1621.6,331.6 L1626.1,332.5 L1630.7,333.2 L1635.3,333.7 L1639.9,334.1 L1644.5,334.2 L1649.1,334.1 L1653.7,333.7 L1658.2,333.2 L1662.8,332.5 L1667.4,331.6 L1672.0,330.7" fill="none" stroke="#ffffff" stroke-width="1.94" stroke-linecap="round" opacity="0.93"/><path d="M1555.7,331.7 L1560.0,330.8 L1564.3,329.9 L1568.6,329.2 L1572.9,328.6 L1577.2,328.3 L1581.5,328.2 L1585.8,328.3 L1590.1,328.6 L1594.3,329.2 L1598.6,329.9 L1602.9,330.8 L1607.2,331.7 L1611.5,332.6 L1615.8,333.4 L1620.1,334.1 L1624.4,334.7 L1628.7,335.0 L1633.0,335.2 L1637.3,335.0 L1641.5,334.7 L1645.8,334.1 L1650.1,333.4 L1654.4,332.6 L1658.7,331.7" fill="none" stroke="#ffffff" stroke-width="2.48" stroke-linecap="round" opacity="0.79"/><path d="M1560.1,332.6 L1564.7,331.7 L1569.3,330.9 L1573.9,330.1 L1578.5,329.6 L1583.1,329.2 L1587.7,329.1 L1592.3,329.2 L1596.9,329.6 L1601.5,330.1 L1606.1,330.9 L1610.7,331.7 L1615.3,332.6 L1619.9,333.5 L1624.5,334.4 L1629.1,335.1 L1633.7,335.7 L1638.3,336.0 L1642.9,336.1 L1647.5,336.0 L1652.1,335.7 L1656.7,335.1 L1661.3,334.4 L1665.9,333.5 L1670.5,332.6" fill="none" stroke="#ffffff" stroke-width="1.44" stroke-linecap="round" opacity="0.51"/><path d="M1543.2,333.6 L1548.3,332.7 L1553.4,331.8 L1558.5,331.1 L1563.6,330.5 L1568.7,330.2 L1573.8,330.1 L1578.9,330.2 L1584.0,330.5 L1589.1,331.1 L1594.2,331.8 L1599.3,332.7 L1604.4,333.6 L1609.5,334.5 L1614.6,335.3 L1619.7,336.0 L1624.8,336.6 L1629.9,337.0 L1635.0,337.1 L1640.1,337.0 L1645.2,336.6 L1650.3,336.0 L1655.4,335.3 L1660.5,334.5 L1665.6,333.6" fill="none" stroke="#ffffff" stroke-width="2.11" stroke-linecap="round" opacity="0.43"/><path d="M1548.8,334.5 L1553.5,333.6 L1558.2,332.8 L1562.8,332.0 L1567.5,331.5 L1572.2,331.1 L1576.9,331.0 L1581.6,331.1 L1586.3,331.5 L1590.9,332.0 L1595.6,332.8 L1600.3,333.6 L1605.0,334.5 L1609.7,335.4 L1614.4,336.3 L1619.0,337.0 L1623.7,337.6 L1628.4,337.9 L1633.1,338.0 L1637.8,337.9 L1642.5,337.6 L1647.2,337.0 L1651.8,336.3 L1656.5,335.4 L1661.2,334.5" fill="none" stroke="#ffffff" stroke-width="1.66" stroke-linecap="round" opacity="0.68"/><path d="M1551.7,335.5 L1556.9,334.6 L1562.1,333.7 L1567.3,333.0 L1572.6,332.4 L1577.8,332.1 L1583.0,332.0 L1588.2,332.1 L1593.4,332.4 L1598.6,333.0 L1603.8,333.7 L1609.0,334.6 L1614.2,335.5 L1619.4,336.4 L1624.6,337.2 L1629.9,338.0 L1635.1,338.5 L1640.3,338.9 L1645.5,339.0 L1650.7,338.9 L1655.9,338.5 L1661.1,338.0 L1666.3,337.2 L1671.5,336.4 L1676.7,335.5" fill="none" stroke="#ffffff" stroke-width="1.29" stroke-linecap="round" opacity="0.94"/><path d="M1557.2,336.4 L1562.2,335.5 L1567.2,334.7 L1572.2,334.0 L1577.3,333.4 L1582.3,333.0 L1587.3,332.9 L1592.3,333.0 L1597.3,333.4 L1602.3,334.0 L1607.3,334.7 L1612.3,335.5 L1617.4,336.4 L1622.4,337.3 L1627.4,338.2 L1632.4,338.9 L1637.4,339.5 L1642.4,339.8 L1647.4,339.9 L1652.5,339.8 L1657.5,339.5 L1662.5,338.9 L1667.5,338.2 L1672.5,337.3 L1677.5,336.4" fill="none" stroke="#ffffff" stroke-width="1.72" stroke-linecap="round" opacity="0.84"/><path d="M1553.7,337.4 L1558.8,336.5 L1564.0,335.6 L1569.1,334.9 L1574.2,334.3 L1579.4,334.0 L1584.5,333.9 L1589.6,334.0 L1594.8,334.3 L1599.9,334.9 L1605.1,335.6 L1610.2,336.5 L1615.3,337.4 L1620.5,338.3 L1625.6,339.1 L1630.7,339.9 L1635.9,340.4 L1641.0,340.8 L1646.1,340.9 L1651.3,340.8 L1656.4,340.4 L1661.5,339.9 L1666.7,339.1 L1671.8,338.3 L1676.9,337.4" fill="none" stroke="#ffffff" stroke-width="2.46" stroke-linecap="round" opacity="0.52"/><path d="M1545.9,338.3 L1550.6,337.4 L1555.3,336.6 L1560.0,335.9 L1564.7,335.3 L1569.5,335.0 L1574.2,334.8 L1578.9,335.0 L1583.6,335.3 L1588.3,335.9 L1593.0,336.6 L1597.7,337.4 L1602.4,338.3 L1607.1,339.2 L1611.8,340.1 L1616.6,340.8 L1621.3,341.4 L1626.0,341.7 L1630.7,341.8 L1635.4,341.7 L1640.1,341.4 L1644.8,340.8 L1649.5,340.1 L1654.2,339.2 L1658.9,338.3" fill="none" stroke="#ffffff" stroke-width="1.69" stroke-linecap="round" opacity="0.92"/><path d="M1549.1,339.3 L1553.8,338.4 L1558.5,337.5 L1563.3,336.8 L1568.0,336.3 L1572.7,335.9 L1577.4,335.8 L1582.1,335.9 L1586.8,336.3 L1591.5,336.8 L1596.2,337.5 L1600.9,338.4 L1605.6,339.3 L1610.3,340.2 L1615.0,341.0 L1619.7,341.8 L1624.4,342.3 L1629.1,342.7 L1633.8,342.8 L1638.5,342.7 L1643.3,342.3 L1648.0,341.8 L1652.7,341.0 L1657.4,340.2 L1662.1,339.3" fill="none" stroke="#ffffff" stroke-width="2.20" stroke-linecap="round" opacity="0.48"/><path d="M1558.2,340.2 L1563.1,339.3 L1568.1,338.5 L1573.0,337.8 L1578.0,337.2 L1583.0,336.9 L1587.9,336.7 L1592.9,336.9 L1597.8,337.2 L1602.8,337.8 L1607.7,338.5 L1612.7,339.3 L1617.7,340.2 L1622.6,341.1 L1627.6,342.0 L1632.5,342.7 L1637.5,343.3 L1642.4,343.6 L1647.4,343.7 L1652.4,343.6 L1657.3,343.3 L1662.3,342.7 L1667.2,342.0 L1672.2,341.1 L1677.2,340.2" fill="none" stroke="#ffffff" stroke-width="1.37" stroke-linecap="round" opacity="0.92"/><path d="M1548.9,341.2 L1553.4,340.3 L1558.0,339.4 L1562.6,338.7 L1567.2,338.2 L1571.8,337.8 L1576.4,337.7 L1581.0,337.8 L1585.6,338.2 L1590.2,338.7 L1594.8,339.4 L1599.4,340.3 L1604.0,341.2 L1608.6,342.1 L1613.2,342.9 L1617.8,343.7 L1622.4,344.2 L1627.0,344.6 L1631.6,344.7 L1636.2,344.6 L1640.8,344.2 L1645.4,343.7 L1650.0,342.9 L1654.6,342.1 L1659.2,341.2" fill="none" stroke="#ffffff" stroke-width="2.42" stroke-linecap="round" opacity="0.61"/><path d="M1553.0,342.1 L1558.0,341.2 L1562.9,340.4 L1567.8,339.7 L1572.8,339.1 L1577.7,338.8 L1582.6,338.6 L1587.6,338.8 L1592.5,339.1 L1597.4,339.7 L1602.4,340.4 L1607.3,341.2 L1612.2,342.1 L1617.2,343.0 L1622.1,343.9 L1627.0,344.6 L1632.0,345.2 L1636.9,345.5 L1641.8,345.6 L1646.8,345.5 L1651.7,345.2 L1656.6,344.6 L1661.6,343.9 L1666.5,343.0 L1671.4,342.1" fill="none" stroke="#ffffff" stroke-width="1.36" stroke-linecap="round" opacity="0.52"/><path d="M1544.9,343.1 L1549.6,342.2 L1554.3,341.3 L1559.0,340.6 L1563.7,340.1 L1568.4,339.7 L1573.1,339.6 L1577.8,339.7 L1582.5,340.1 L1587.2,340.6 L1591.9,341.3 L1596.6,342.2 L1601.3,343.1 L1605.9,344.0 L1610.6,344.8 L1615.3,345.6 L1620.0,346.1 L1624.7,346.5 L1629.4,346.6 L1634.1,346.5 L1638.8,346.1 L1643.5,345.6 L1648.2,344.8 L1652.9,344.0 L1657.6,343.1" fill="none" stroke="#ffffff" stroke-width="1.32" stroke-linecap="round" opacity="0.51"/><path d="M1562.0,344.0 L1566.5,343.1 L1571.0,342.3 L1575.5,341.6 L1580.0,341.0 L1584.4,340.7 L1588.9,340.5 L1593.4,340.7 L1597.9,341.0 L1602.4,341.6 L1606.9,342.3 L1611.3,343.1 L1615.8,344.0 L1620.3,345.0 L1624.8,345.8 L1629.3,346.5 L1633.8,347.1 L1638.2,347.4 L1642.7,347.5 L1647.2,347.4 L1651.7,347.1 L1656.2,346.5 L1660.7,345.8 L1665.1,345.0 L1669.6,344.0" fill="none" stroke="#ffffff" stroke-width="2.01" stroke-linecap="round" opacity="0.55"/><path d="M1558.8,345.0 L1563.4,344.1 L1568.0,343.2 L1572.6,342.5 L1577.2,342.0 L1581.8,341.6 L1586.4,341.5 L1591.0,341.6 L1595.6,342.0 L1600.2,342.5 L1604.8,343.2 L1609.4,344.1 L1614.0,345.0 L1618.6,345.9 L1623.2,346.8 L1627.8,347.5 L1632.4,348.0 L1637.1,348.4 L1641.7,348.5 L1646.3,348.4 L1650.9,348.0 L1655.5,347.5 L1660.1,346.8 L1664.7,345.9 L1669.3,345.0" fill="none" stroke="#ffffff" stroke-width="2.41" stroke-linecap="round" opacity="0.46"/></g>
<path d="M1701.1,334.2 L1703.8,333.3 L1706.4,332.5 L1709.1,331.6 L1711.8,330.8 L1714.4,330.0 L1717.1,329.2 L1719.8,328.6 L1722.4,328.0 L1725.1,327.5 L1727.8,327.0 L1730.4,326.7 L1733.1,326.5 L1735.8,326.3 L1738.4,326.3 L1741.1,326.3 L1743.8,326.5 L1746.4,326.7 L1749.1,327.0 L1751.8,327.4 L1754.4,327.8 L1757.1,328.3 L1759.8,328.8 L1762.4,329.3 L1765.1,329.8 L1767.8,330.4 L1770.4,330.9 L1773.1,331.5 L1775.8,332.0 L1778.4,332.5 L1781.1,333.0 L1783.8,333.4 L1786.4,333.9 L1789.1,334.2 L1791.8,334.6 L1794.4,334.8 L1797.1,335.1 L1799.8,335.2 L1802.4,335.3 L1805.1,335.4 L1807.8,335.4 L1810.4,335.4 L1813.1,335.3 L1815.8,335.2 L1818.4,335.0 L1821.1,334.9 L1823.8,334.7 L1826.4,334.5 L1829.1,334.2 L1829.1,334.8 L1826.4,335.4 L1823.8,336.1 L1821.1,336.8 L1818.4,337.5 L1815.8,338.1 L1813.1,338.6 L1810.4,339.2 L1807.8,339.6 L1805.1,340.1 L1802.4,340.4 L1799.8,340.7 L1797.1,340.9 L1794.4,341.1 L1791.8,341.2 L1789.1,341.2 L1786.4,341.2 L1783.8,341.1 L1781.1,341.0 L1778.4,340.8 L1775.8,340.5 L1773.1,340.2 L1770.4,339.9 L1767.8,339.6 L1765.1,339.2 L1762.4,338.8 L1759.8,338.4 L1757.1,338.1 L1754.4,337.7 L1751.8,337.3 L1749.1,337.0 L1746.4,336.7 L1743.8,336.5 L1741.1,336.2 L1738.4,336.0 L1735.8,335.7 L1733.1,335.5 L1730.4,335.3 L1727.8,335.2 L1725.1,335.1 L1722.4,334.9 L1719.8,334.9 L1717.1,334.8 L1714.4,334.8 L1711.8,334.7 L1709.1,334.7 L1706.4,334.7 L1703.8,334.7 L1701.1,334.8Z" fill="#ffffff" opacity="1" />
<g filter="url(#b1)"><path d="M1402.9,374.2 L1407.2,373.3 L1411.6,372.5 L1415.9,371.7 L1420.2,371.2 L1424.5,370.8 L1428.8,370.7 L1433.1,370.8 L1437.4,371.2 L1441.7,371.7 L1446.0,372.5 L1450.3,373.3 L1454.7,374.2 L1459.0,375.1 L1463.3,376.0 L1467.6,376.7 L1471.9,377.2 L1476.2,377.6 L1480.5,377.7 L1484.8,377.6 L1489.1,377.2 L1493.5,376.7 L1497.8,376.0 L1502.1,375.1 L1506.4,374.2" fill="none" stroke="#ffffff" stroke-width="0.98" stroke-linecap="round" opacity="0.13"/><path d="M1400.4,376.0 L1404.6,375.1 L1408.8,374.2 L1413.0,373.5 L1417.2,372.9 L1421.4,372.6 L1425.6,372.5 L1429.8,372.6 L1434.0,372.9 L1438.2,373.5 L1442.4,374.2 L1446.6,375.1 L1450.8,376.0 L1455.0,376.9 L1459.2,377.7 L1463.4,378.5 L1467.6,379.0 L1471.7,379.4 L1475.9,379.5 L1480.1,379.4 L1484.3,379.0 L1488.5,378.5 L1492.7,377.7 L1496.9,376.9 L1501.1,376.0" fill="none" stroke="#ffffff" stroke-width="1.73" stroke-linecap="round" opacity="0.14"/><path d="M1392.9,377.8 L1397.5,376.8 L1402.0,376.0 L1406.5,375.3 L1411.1,374.7 L1415.6,374.4 L1420.1,374.3 L1424.7,374.4 L1429.2,374.7 L1433.7,375.3 L1438.2,376.0 L1442.8,376.8 L1447.3,377.8 L1451.8,378.7 L1456.4,379.5 L1460.9,380.2 L1465.4,380.8 L1470.0,381.1 L1474.5,381.3 L1479.0,381.1 L1483.6,380.8 L1488.1,380.2 L1492.6,379.5 L1497.2,378.7 L1501.7,377.8" fill="none" stroke="#ffffff" stroke-width="1.51" stroke-linecap="round" opacity="0.15"/><path d="M1400.8,379.5 L1405.1,378.6 L1409.5,377.8 L1413.8,377.1 L1418.2,376.5 L1422.5,376.2 L1426.9,376.0 L1431.2,376.2 L1435.6,376.5 L1439.9,377.1 L1444.2,377.8 L1448.6,378.6 L1452.9,379.5 L1457.3,380.4 L1461.6,381.3 L1466.0,382.0 L1470.3,382.6 L1474.7,382.9 L1479.0,383.0 L1483.3,382.9 L1487.7,382.6 L1492.0,382.0 L1496.4,381.3 L1500.7,380.4 L1505.1,379.5" fill="none" stroke="#ffffff" stroke-width="1.24" stroke-linecap="round" opacity="0.20"/><path d="M1403.1,381.3 L1407.1,380.4 L1411.2,379.6 L1415.2,378.8 L1419.2,378.3 L1423.2,377.9 L1427.2,377.8 L1431.2,377.9 L1435.2,378.3 L1439.3,378.8 L1443.3,379.6 L1447.3,380.4 L1451.3,381.3 L1455.3,382.2 L1459.3,383.1 L1463.4,383.8 L1467.4,384.3 L1471.4,384.7 L1475.4,384.8 L1479.4,384.7 L1483.4,384.3 L1487.4,383.8 L1491.5,383.1 L1495.5,382.2 L1499.5,381.3" fill="none" stroke="#ffffff" stroke-width="1.07" stroke-linecap="round" opacity="0.14"/><path d="M1403.1,383.1 L1407.4,382.2 L1411.7,381.3 L1416.1,380.6 L1420.4,380.1 L1424.8,379.7 L1429.1,379.6 L1433.4,379.7 L1437.8,380.1 L1442.1,380.6 L1446.4,381.3 L1450.8,382.2 L1455.1,383.1 L1459.4,384.0 L1463.8,384.8 L1468.1,385.6 L1472.5,386.1 L1476.8,386.5 L1481.1,386.6 L1485.5,386.5 L1489.8,386.1 L1494.1,385.6 L1498.5,384.8 L1502.8,384.0 L1507.2,383.1" fill="none" stroke="#ffffff" stroke-width="1.17" stroke-linecap="round" opacity="0.11"/><path d="M1399.9,384.9 L1404.0,384.0 L1408.0,383.1 L1412.1,382.4 L1416.1,381.8 L1420.2,381.5 L1424.3,381.4 L1428.3,381.5 L1432.4,381.8 L1436.5,382.4 L1440.5,383.1 L1444.6,384.0 L1448.7,384.9 L1452.7,385.8 L1456.8,386.6 L1460.9,387.3 L1464.9,387.9 L1469.0,388.2 L1473.0,388.4 L1477.1,388.2 L1481.2,387.9 L1485.2,387.3 L1489.3,386.6 L1493.4,385.8 L1497.4,384.9" fill="none" stroke="#ffffff" stroke-width="1.18" stroke-linecap="round" opacity="0.17"/><path d="M1400.3,386.6 L1404.3,385.7 L1408.4,384.9 L1412.5,384.2 L1416.5,383.6 L1420.6,383.3 L1424.7,383.1 L1428.7,383.3 L1432.8,383.6 L1436.8,384.2 L1440.9,384.9 L1445.0,385.7 L1449.0,386.6 L1453.1,387.6 L1457.2,388.4 L1461.2,389.1 L1465.3,389.7 L1469.4,390.0 L1473.4,390.1 L1477.5,390.0 L1481.5,389.7 L1485.6,389.1 L1489.7,388.4 L1493.7,387.6 L1497.8,386.6" fill="none" stroke="#ffffff" stroke-width="1.48" stroke-linecap="round" opacity="0.21"/><path d="M1400.1,388.4 L1404.2,387.5 L1408.4,386.7 L1412.6,385.9 L1416.8,385.4 L1420.9,385.0 L1425.1,384.9 L1429.3,385.0 L1433.5,385.4 L1437.6,385.9 L1441.8,386.7 L1446.0,387.5 L1450.2,388.4 L1454.3,389.3 L1458.5,390.2 L1462.7,390.9 L1466.8,391.5 L1471.0,391.8 L1475.2,391.9 L1479.4,391.8 L1483.5,391.5 L1487.7,390.9 L1491.9,390.2 L1496.1,389.3 L1500.2,388.4" fill="none" stroke="#ffffff" stroke-width="1.01" stroke-linecap="round" opacity="0.22"/><path d="M1394.6,390.2 L1399.4,389.3 L1404.2,388.5 L1409.0,387.7 L1413.8,387.2 L1418.6,386.8 L1423.4,386.7 L1428.2,386.8 L1433.0,387.2 L1437.8,387.7 L1442.6,388.5 L1447.4,389.3 L1452.2,390.2 L1457.0,391.1 L1461.8,392.0 L1466.7,392.7 L1471.5,393.2 L1476.3,393.6 L1481.1,393.7 L1485.9,393.6 L1490.7,393.2 L1495.5,392.7 L1500.3,392.0 L1505.1,391.1 L1509.9,390.2" fill="none" stroke="#ffffff" stroke-width="1.07" stroke-linecap="round" opacity="0.17"/></g>
<g filter="url(#b1)"><path d="M1553.8,374.2 L1558.2,373.3 L1562.5,372.5 L1566.8,371.7 L1571.2,371.2 L1575.5,370.8 L1579.9,370.7 L1584.2,370.8 L1588.5,371.2 L1592.9,371.7 L1597.2,372.5 L1601.6,373.3 L1605.9,374.2 L1610.2,375.1 L1614.6,376.0 L1618.9,376.7 L1623.3,377.2 L1627.6,377.6 L1631.9,377.7 L1636.3,377.6 L1640.6,377.2 L1645.0,376.7 L1649.3,376.0 L1653.6,375.1 L1658.0,374.2" fill="none" stroke="#ffffff" stroke-width="1.51" stroke-linecap="round" opacity="0.11"/><path d="M1554.6,376.0 L1559.0,375.1 L1563.4,374.2 L1567.8,373.5 L1572.3,372.9 L1576.7,372.6 L1581.1,372.5 L1585.5,372.6 L1589.9,372.9 L1594.4,373.5 L1598.8,374.2 L1603.2,375.1 L1607.6,376.0 L1612.0,376.9 L1616.4,377.7 L1620.9,378.5 L1625.3,379.0 L1629.7,379.4 L1634.1,379.5 L1638.5,379.4 L1642.9,379.0 L1647.4,378.5 L1651.8,377.7 L1656.2,376.9 L1660.6,376.0" fill="none" stroke="#ffffff" stroke-width="1.40" stroke-linecap="round" opacity="0.10"/><path d="M1549.2,377.8 L1553.9,376.8 L1558.6,376.0 L1563.3,375.3 L1568.0,374.7 L1572.7,374.4 L1577.4,374.3 L1582.1,374.4 L1586.8,374.7 L1591.5,375.3 L1596.2,376.0 L1600.9,376.8 L1605.7,377.8 L1610.4,378.7 L1615.1,379.5 L1619.8,380.2 L1624.5,380.8 L1629.2,381.1 L1633.9,381.3 L1638.6,381.1 L1643.3,380.8 L1648.0,380.2 L1652.7,379.5 L1657.4,378.7 L1662.1,377.8" fill="none" stroke="#ffffff" stroke-width="1.10" stroke-linecap="round" opacity="0.20"/><path d="M1552.0,379.5 L1556.2,378.6 L1560.4,377.8 L1564.6,377.1 L1568.7,376.5 L1572.9,376.2 L1577.1,376.0 L1581.3,376.2 L1585.5,376.5 L1589.7,377.1 L1593.9,377.8 L1598.1,378.6 L1602.3,379.5 L1606.5,380.4 L1610.7,381.3 L1614.8,382.0 L1619.0,382.6 L1623.2,382.9 L1627.4,383.0 L1631.6,382.9 L1635.8,382.6 L1640.0,382.0 L1644.2,381.3 L1648.4,380.4 L1652.6,379.5" fill="none" stroke="#ffffff" stroke-width="1.37" stroke-linecap="round" opacity="0.17"/><path d="M1565.8,381.3 L1569.4,380.4 L1573.1,379.6 L1576.8,378.8 L1580.5,378.3 L1584.2,377.9 L1587.9,377.8 L1591.6,377.9 L1595.2,378.3 L1598.9,378.8 L1602.6,379.6 L1606.3,380.4 L1610.0,381.3 L1613.7,382.2 L1617.3,383.1 L1621.0,383.8 L1624.7,384.3 L1628.4,384.7 L1632.1,384.8 L1635.8,384.7 L1639.5,384.3 L1643.1,383.8 L1646.8,383.1 L1650.5,382.2 L1654.2,381.3" fill="none" stroke="#ffffff" stroke-width="1.12" stroke-linecap="round" opacity="0.13"/><path d="M1550.1,383.1 L1554.4,382.2 L1558.8,381.3 L1563.2,380.6 L1567.5,380.1 L1571.9,379.7 L1576.3,379.6 L1580.7,379.7 L1585.0,380.1 L1589.4,380.6 L1593.8,381.3 L1598.1,382.2 L1602.5,383.1 L1606.9,384.0 L1611.3,384.8 L1615.6,385.6 L1620.0,386.1 L1624.4,386.5 L1628.7,386.6 L1633.1,386.5 L1637.5,386.1 L1641.9,385.6 L1646.2,384.8 L1650.6,384.0 L1655.0,383.1" fill="none" stroke="#ffffff" stroke-width="1.55" stroke-linecap="round" opacity="0.12"/><path d="M1559.6,384.9 L1563.8,384.0 L1567.9,383.1 L1572.1,382.4 L1576.3,381.8 L1580.5,381.5 L1584.7,381.4 L1588.8,381.5 L1593.0,381.8 L1597.2,382.4 L1601.4,383.1 L1605.6,384.0 L1609.7,384.9 L1613.9,385.8 L1618.1,386.6 L1622.3,387.3 L1626.4,387.9 L1630.6,388.2 L1634.8,388.4 L1639.0,388.2 L1643.2,387.9 L1647.3,387.3 L1651.5,386.6 L1655.7,385.8 L1659.9,384.9" fill="none" stroke="#ffffff" stroke-width="1.04" stroke-linecap="round" opacity="0.11"/><path d="M1551.7,386.6 L1556.3,385.7 L1560.9,384.9 L1565.5,384.2 L1570.1,383.6 L1574.7,383.3 L1579.3,383.1 L1583.9,383.3 L1588.5,383.6 L1593.1,384.2 L1597.7,384.9 L1602.3,385.7 L1606.9,386.6 L1611.5,387.6 L1616.1,388.4 L1620.7,389.1 L1625.3,389.7 L1629.9,390.0 L1634.5,390.1 L1639.1,390.0 L1643.7,389.7 L1648.3,389.1 L1652.9,388.4 L1657.5,387.6 L1662.1,386.6" fill="none" stroke="#ffffff" stroke-width="1.55" stroke-linecap="round" opacity="0.14"/><path d="M1556.2,388.4 L1560.3,387.5 L1564.5,386.7 L1568.6,385.9 L1572.7,385.4 L1576.9,385.0 L1581.0,384.9 L1585.1,385.0 L1589.2,385.4 L1593.4,385.9 L1597.5,386.7 L1601.6,387.5 L1605.8,388.4 L1609.9,389.3 L1614.0,390.2 L1618.2,390.9 L1622.3,391.5 L1626.4,391.8 L1630.6,391.9 L1634.7,391.8 L1638.8,391.5 L1643.0,390.9 L1647.1,390.2 L1651.2,389.3 L1655.4,388.4" fill="none" stroke="#ffffff" stroke-width="1.22" stroke-linecap="round" opacity="0.18"/><path d="M1558.4,390.2 L1562.4,389.3 L1566.4,388.5 L1570.3,387.7 L1574.3,387.2 L1578.3,386.8 L1582.3,386.7 L1586.3,386.8 L1590.2,387.2 L1594.2,387.7 L1598.2,388.5 L1602.2,389.3 L1606.1,390.2 L1610.1,391.1 L1614.1,392.0 L1618.1,392.7 L1622.1,393.2 L1626.0,393.6 L1630.0,393.7 L1634.0,393.6 L1638.0,393.2 L1642.0,392.7 L1645.9,392.0 L1649.9,391.1 L1653.9,390.2" fill="none" stroke="#ffffff" stroke-width="1.26" stroke-linecap="round" opacity="0.19"/></g>
<g filter="url(#b06)"><path d="M1728.0,372.5 L1731.3,372.4 L1734.7,372.4 L1738.1,372.3 L1741.4,372.4 L1744.8,372.6 L1748.1,373.0 L1751.5,373.4 L1754.8,374.0 L1758.2,374.8 L1761.5,375.6 L1764.9,376.5 L1768.2,377.4 L1771.6,378.3 L1774.9,379.2 L1778.3,380.0 L1781.7,380.7 L1785.0,381.3 L1788.4,381.8 L1791.7,382.1 L1795.1,382.3 L1798.4,382.4 L1801.8,382.4 L1805.1,382.3 L1808.5,382.2" fill="none" stroke="#ffffff" stroke-width="0.84" stroke-linecap="round" opacity="0.75"/><path d="M1728.3,373.8 L1731.6,373.7 L1734.9,373.6 L1738.2,373.6 L1741.5,373.7 L1744.7,373.9 L1748.0,374.2 L1751.3,374.7 L1754.6,375.3 L1757.9,376.0 L1761.2,376.8 L1764.5,377.7 L1767.8,378.6 L1771.1,379.5 L1774.4,380.4 L1777.7,381.2 L1781.0,381.9 L1784.3,382.5 L1787.6,383.0 L1790.9,383.3 L1794.2,383.5 L1797.5,383.6 L1800.8,383.5 L1804.1,383.5 L1807.4,383.3" fill="none" stroke="#ffffff" stroke-width="1.12" stroke-linecap="round" opacity="0.72"/><path d="M1730.9,375.4 L1734.1,375.3 L1737.3,375.2 L1740.5,375.1 L1743.7,375.2 L1746.9,375.4 L1750.1,375.7 L1753.3,376.1 L1756.5,376.7 L1759.7,377.4 L1762.9,378.2 L1766.1,379.1 L1769.3,380.0 L1772.5,380.9 L1775.7,381.8 L1778.9,382.6 L1782.1,383.3 L1785.3,383.9 L1788.5,384.3 L1791.7,384.6 L1794.9,384.8 L1798.1,384.9 L1801.3,384.8 L1804.5,384.7 L1807.6,384.6" fill="none" stroke="#ffffff" stroke-width="0.84" stroke-linecap="round" opacity="0.82"/><path d="M1728.1,376.3 L1731.4,376.2 L1734.6,376.1 L1737.9,376.1 L1741.2,376.1 L1744.5,376.3 L1747.7,376.7 L1751.0,377.1 L1754.3,377.7 L1757.6,378.4 L1760.8,379.2 L1764.1,380.1 L1767.4,381.0 L1770.7,381.9 L1773.9,382.8 L1777.2,383.6 L1780.5,384.3 L1783.8,384.9 L1787.0,385.4 L1790.3,385.7 L1793.6,385.9 L1796.9,386.0 L1800.1,386.0 L1803.4,385.9 L1806.7,385.7" fill="none" stroke="#ffffff" stroke-width="1.46" stroke-linecap="round" opacity="0.61"/><path d="M1729.9,377.8 L1733.1,377.6 L1736.3,377.5 L1739.5,377.5 L1742.7,377.6 L1745.9,377.8 L1749.2,378.1 L1752.4,378.5 L1755.6,379.1 L1758.8,379.8 L1762.0,380.6 L1765.2,381.5 L1768.4,382.4 L1771.6,383.3 L1774.8,384.2 L1778.0,385.0 L1781.2,385.7 L1784.4,386.2 L1787.6,386.7 L1790.8,387.0 L1794.0,387.2 L1797.2,387.3 L1800.4,387.2 L1803.6,387.1 L1806.8,387.0" fill="none" stroke="#ffffff" stroke-width="0.82" stroke-linecap="round" opacity="0.90"/><path d="M1733.0,379.4 L1735.9,379.2 L1738.7,379.1 L1741.6,379.0 L1744.5,379.0 L1747.3,379.2 L1750.2,379.5 L1753.0,379.9 L1755.9,380.4 L1758.8,381.1 L1761.6,381.8 L1764.5,382.7 L1767.3,383.5 L1770.2,384.4 L1773.1,385.2 L1775.9,386.0 L1778.8,386.6 L1781.6,387.2 L1784.5,387.6 L1787.4,387.9 L1790.2,388.0 L1793.1,388.0 L1796.0,388.0 L1798.8,387.8 L1801.7,387.6" fill="none" stroke="#ffffff" stroke-width="1.30" stroke-linecap="round" opacity="0.57"/><path d="M1731.4,380.5 L1734.2,380.3 L1737.0,380.1 L1739.8,380.1 L1742.6,380.1 L1745.4,380.2 L1748.2,380.5 L1751.0,380.9 L1753.8,381.4 L1756.6,382.1 L1759.4,382.8 L1762.2,383.6 L1765.0,384.5 L1767.8,385.3 L1770.6,386.2 L1773.4,386.9 L1776.2,387.6 L1779.0,388.1 L1781.8,388.5 L1784.6,388.8 L1787.4,388.9 L1790.2,388.9 L1793.0,388.8 L1795.8,388.7 L1798.6,388.5" fill="none" stroke="#ffffff" stroke-width="0.88" stroke-linecap="round" opacity="0.69"/><path d="M1725.9,381.0 L1729.2,380.9 L1732.4,380.8 L1735.7,380.8 L1738.9,380.9 L1742.2,381.1 L1745.4,381.4 L1748.7,381.8 L1751.9,382.4 L1755.2,383.1 L1758.4,383.9 L1761.6,384.8 L1764.9,385.7 L1768.1,386.6 L1771.4,387.5 L1774.6,388.3 L1777.9,389.0 L1781.1,389.6 L1784.4,390.1 L1787.6,390.4 L1790.9,390.6 L1794.1,390.6 L1797.4,390.6 L1800.6,390.5 L1803.9,390.4" fill="none" stroke="#ffffff" stroke-width="1.50" stroke-linecap="round" opacity="0.50"/><path d="M1732.5,383.1 L1735.2,382.9 L1738.0,382.7 L1740.8,382.7 L1743.5,382.7 L1746.3,382.8 L1749.1,383.1 L1751.8,383.5 L1754.6,384.0 L1757.4,384.7 L1760.1,385.4 L1762.9,386.2 L1765.7,387.1 L1768.4,387.9 L1771.2,388.7 L1774.0,389.5 L1776.7,390.1 L1779.5,390.7 L1782.3,391.1 L1785.0,391.3 L1787.8,391.5 L1790.6,391.5 L1793.3,391.4 L1796.1,391.2 L1798.9,391.1" fill="none" stroke="#ffffff" stroke-width="1.04" stroke-linecap="round" opacity="0.55"/></g>
<g filter="url(#b1)"><path d="M1394.9,418.4 L1400.0,418.0 L1405.0,417.6 L1410.1,417.3 L1415.1,417.1 L1420.1,417.0 L1425.2,416.9 L1430.2,417.0 L1435.3,417.1 L1440.3,417.3 L1445.4,417.6 L1450.4,418.0 L1455.4,418.4 L1460.5,418.8 L1465.5,419.1 L1470.6,419.5 L1475.6,419.7 L1480.6,419.8 L1485.7,419.9 L1490.7,419.8 L1495.8,419.7 L1500.8,419.5 L1505.9,419.1 L1510.9,418.8 L1515.9,418.4" fill="none" stroke="#ffffff" stroke-width="1.83" stroke-linecap="round" opacity="0.93"/><path d="M1395.7,420.1 L1400.8,419.7 L1405.8,419.3 L1410.9,419.0 L1416.0,418.8 L1421.0,418.6 L1426.1,418.6 L1431.1,418.6 L1436.2,418.8 L1441.2,419.0 L1446.3,419.3 L1451.4,419.7 L1456.4,420.1 L1461.5,420.5 L1466.5,420.8 L1471.6,421.2 L1476.6,421.4 L1481.7,421.5 L1486.7,421.6 L1491.8,421.5 L1496.9,421.4 L1501.9,421.2 L1507.0,420.8 L1512.0,420.5 L1517.1,420.1" fill="none" stroke="#ffffff" stroke-width="2.94" stroke-linecap="round" opacity="0.75"/><path d="M1386.5,421.8 L1391.4,421.4 L1396.4,421.0 L1401.3,420.7 L1406.2,420.5 L1411.1,420.3 L1416.1,420.3 L1421.0,420.3 L1425.9,420.5 L1430.8,420.7 L1435.7,421.0 L1440.7,421.4 L1445.6,421.8 L1450.5,422.2 L1455.4,422.5 L1460.4,422.8 L1465.3,423.1 L1470.2,423.2 L1475.1,423.3 L1480.1,423.2 L1485.0,423.1 L1489.9,422.8 L1494.8,422.5 L1499.7,422.2 L1504.7,421.8" fill="none" stroke="#ffffff" stroke-width="3.14" stroke-linecap="round" opacity="0.70"/><path d="M1388.8,423.5 L1394.2,423.1 L1399.5,422.7 L1404.8,422.4 L1410.1,422.2 L1415.4,422.0 L1420.7,422.0 L1426.1,422.0 L1431.4,422.2 L1436.7,422.4 L1442.0,422.7 L1447.3,423.1 L1452.7,423.5 L1458.0,423.9 L1463.3,424.2 L1468.6,424.5 L1473.9,424.8 L1479.3,424.9 L1484.6,425.0 L1489.9,424.9 L1495.2,424.8 L1500.5,424.5 L1505.8,424.2 L1511.2,423.9 L1516.5,423.5" fill="none" stroke="#ffffff" stroke-width="3.50" stroke-linecap="round" opacity="0.73"/><path d="M1397.5,425.2 L1402.2,424.8 L1406.9,424.4 L1411.7,424.1 L1416.4,423.9 L1421.1,423.7 L1425.9,423.7 L1430.6,423.7 L1435.3,423.9 L1440.1,424.1 L1444.8,424.4 L1449.5,424.8 L1454.3,425.2 L1459.0,425.6 L1463.7,425.9 L1468.5,426.2 L1473.2,426.5 L1477.9,426.6 L1482.7,426.7 L1487.4,426.6 L1492.1,426.5 L1496.9,426.2 L1501.6,425.9 L1506.3,425.6 L1511.0,425.2" fill="none" stroke="#ffffff" stroke-width="2.01" stroke-linecap="round" opacity="0.86"/><path d="M1391.5,426.9 L1396.2,426.5 L1400.9,426.1 L1405.6,425.8 L1410.3,425.6 L1415.0,425.4 L1419.7,425.4 L1424.4,425.4 L1429.1,425.6 L1433.8,425.8 L1438.5,426.1 L1443.2,426.5 L1447.9,426.9 L1452.6,427.2 L1457.3,427.6 L1462.0,427.9 L1466.7,428.2 L1471.3,428.3 L1476.0,428.4 L1480.7,428.3 L1485.4,428.2 L1490.1,427.9 L1494.8,427.6 L1499.5,427.2 L1504.2,426.9" fill="none" stroke="#ffffff" stroke-width="1.98" stroke-linecap="round" opacity="0.68"/><path d="M1391.0,428.6 L1396.1,428.2 L1401.2,427.8 L1406.3,427.5 L1411.4,427.3 L1416.5,427.1 L1421.5,427.1 L1426.6,427.1 L1431.7,427.3 L1436.8,427.5 L1441.9,427.8 L1447.0,428.2 L1452.1,428.6 L1457.1,428.9 L1462.2,429.3 L1467.3,429.6 L1472.4,429.9 L1477.5,430.0 L1482.6,430.1 L1487.7,430.0 L1492.7,429.9 L1497.8,429.6 L1502.9,429.3 L1508.0,428.9 L1513.1,428.6" fill="none" stroke="#ffffff" stroke-width="2.18" stroke-linecap="round" opacity="0.90"/><path d="M1403.4,430.2 L1408.1,429.9 L1412.9,429.5 L1417.7,429.2 L1422.4,428.9 L1427.2,428.8 L1431.9,428.7 L1436.7,428.8 L1441.5,428.9 L1446.2,429.2 L1451.0,429.5 L1455.7,429.9 L1460.5,430.2 L1465.3,430.6 L1470.0,431.0 L1474.8,431.3 L1479.5,431.5 L1484.3,431.7 L1489.1,431.7 L1493.8,431.7 L1498.6,431.5 L1503.3,431.3 L1508.1,431.0 L1512.8,430.6 L1517.6,430.2" fill="none" stroke="#ffffff" stroke-width="2.71" stroke-linecap="round" opacity="0.66"/><path d="M1386.2,431.9 L1390.9,431.6 L1395.7,431.2 L1400.5,430.9 L1405.2,430.6 L1410.0,430.5 L1414.8,430.4 L1419.5,430.5 L1424.3,430.6 L1429.1,430.9 L1433.9,431.2 L1438.6,431.6 L1443.4,431.9 L1448.2,432.3 L1452.9,432.7 L1457.7,433.0 L1462.5,433.2 L1467.2,433.4 L1472.0,433.4 L1476.8,433.4 L1481.5,433.2 L1486.3,433.0 L1491.1,432.7 L1495.8,432.3 L1500.6,431.9" fill="none" stroke="#ffffff" stroke-width="2.91" stroke-linecap="round" opacity="0.51"/><path d="M1388.1,433.6 L1392.8,433.2 L1397.5,432.9 L1402.2,432.6 L1406.9,432.3 L1411.6,432.2 L1416.3,432.1 L1421.0,432.2 L1425.7,432.3 L1430.4,432.6 L1435.1,432.9 L1439.8,433.2 L1444.5,433.6 L1449.2,434.0 L1453.9,434.4 L1458.6,434.7 L1463.3,434.9 L1468.0,435.1 L1472.7,435.1 L1477.4,435.1 L1482.1,434.9 L1486.7,434.7 L1491.4,434.4 L1496.1,434.0 L1500.8,433.6" fill="none" stroke="#ffffff" stroke-width="1.84" stroke-linecap="round" opacity="0.56"/><path d="M1387.4,435.3 L1392.8,434.9 L1398.3,434.6 L1403.7,434.3 L1409.2,434.0 L1414.7,433.9 L1420.1,433.8 L1425.6,433.9 L1431.0,434.0 L1436.5,434.3 L1441.9,434.6 L1447.4,434.9 L1452.9,435.3 L1458.3,435.7 L1463.8,436.1 L1469.2,436.4 L1474.7,436.6 L1480.1,436.8 L1485.6,436.8 L1491.1,436.8 L1496.5,436.6 L1502.0,436.4 L1507.4,436.1 L1512.9,435.7 L1518.4,435.3" fill="none" stroke="#ffffff" stroke-width="2.72" stroke-linecap="round" opacity="0.50"/><path d="M1404.1,437.0 L1408.5,436.6 L1413.0,436.3 L1417.4,436.0 L1421.9,435.7 L1426.3,435.6 L1430.7,435.5 L1435.2,435.6 L1439.6,435.7 L1444.1,436.0 L1448.5,436.3 L1453.0,436.6 L1457.4,437.0 L1461.9,437.4 L1466.3,437.8 L1470.8,438.1 L1475.2,438.3 L1479.6,438.5 L1484.1,438.5 L1488.5,438.5 L1493.0,438.3 L1497.4,438.1 L1501.9,437.8 L1506.3,437.4 L1510.8,437.0" fill="none" stroke="#ffffff" stroke-width="1.99" stroke-linecap="round" opacity="0.80"/><path d="M1397.3,438.7 L1401.8,438.3 L1406.4,438.0 L1410.9,437.6 L1415.5,437.4 L1420.0,437.3 L1424.6,437.2 L1429.1,437.3 L1433.7,437.4 L1438.2,437.6 L1442.8,438.0 L1447.4,438.3 L1451.9,438.7 L1456.5,439.1 L1461.0,439.5 L1465.6,439.8 L1470.1,440.0 L1474.7,440.2 L1479.2,440.2 L1483.8,440.2 L1488.3,440.0 L1492.9,439.8 L1497.4,439.5 L1502.0,439.1 L1506.6,438.7" fill="none" stroke="#ffffff" stroke-width="1.92" stroke-linecap="round" opacity="0.98"/><path d="M1396.8,440.4 L1401.7,440.0 L1406.7,439.6 L1411.6,439.3 L1416.6,439.1 L1421.6,439.0 L1426.5,438.9 L1431.5,439.0 L1436.4,439.1 L1441.4,439.3 L1446.3,439.6 L1451.3,440.0 L1456.2,440.4 L1461.2,440.8 L1466.2,441.1 L1471.1,441.5 L1476.1,441.7 L1481.0,441.8 L1486.0,441.9 L1490.9,441.8 L1495.9,441.7 L1500.9,441.5 L1505.8,441.1 L1510.8,440.8 L1515.7,440.4" fill="none" stroke="#ffffff" stroke-width="3.63" stroke-linecap="round" opacity="0.60"/></g>
<path d="M1546.8,421.9 L1544.5,422.4 L1542.6,423.8 L1541.3,425.9 L1540.9,428.4 L1541.3,430.9 L1542.6,433.0 L1544.5,434.4 L1546.8,434.9 L1546.8,421.9 L1549.4,421.2 L1552.0,420.5 L1554.6,419.9 L1557.2,419.3 L1559.8,418.7 L1562.4,418.2 L1565.0,417.7 L1567.6,417.3 L1570.2,417.0 L1572.9,416.8 L1575.5,416.6 L1578.1,416.5 L1580.7,416.6 L1583.3,416.7 L1585.9,416.9 L1588.5,417.1 L1591.1,417.5 L1593.7,417.9 L1596.3,418.4 L1599.0,418.9 L1601.6,419.5 L1604.2,420.1 L1606.8,420.7 L1609.4,421.4 L1612.0,422.1 L1614.6,422.7 L1617.2,423.3 L1619.8,423.9 L1622.5,424.5 L1625.1,425.0 L1627.7,425.4 L1630.3,425.8 L1632.9,426.1 L1635.5,426.3 L1638.1,426.5 L1640.7,426.5 L1643.3,426.5 L1645.9,426.4 L1648.6,426.2 L1651.2,426.0 L1653.8,425.6 L1656.4,425.2 L1659.0,424.8 L1661.6,424.3 L1664.2,423.7 L1666.8,423.1 L1669.4,422.5 L1672.1,421.9 L1672.1,421.9 L1674.3,422.4 L1676.2,423.8 L1677.5,425.9 L1677.9,428.4 L1677.5,430.9 L1676.2,433.0 L1674.3,434.4 L1672.1,434.9 L1672.1,434.9 L1669.4,435.6 L1666.8,436.3 L1664.2,436.9 L1661.6,437.5 L1659.0,438.1 L1656.4,438.6 L1653.8,439.1 L1651.2,439.5 L1648.6,439.8 L1645.9,440.0 L1643.3,440.2 L1640.7,440.3 L1638.1,440.2 L1635.5,440.1 L1632.9,439.9 L1630.3,439.7 L1627.7,439.3 L1625.1,438.9 L1622.5,438.4 L1619.8,437.9 L1617.2,437.3 L1614.6,436.7 L1612.0,436.1 L1609.4,435.4 L1606.8,434.7 L1604.2,434.1 L1601.6,433.5 L1599.0,432.9 L1596.3,432.3 L1593.7,431.8 L1591.1,431.4 L1588.5,431.0 L1585.9,430.7 L1583.3,430.5 L1580.7,430.3 L1578.1,430.3 L1575.5,430.3 L1572.9,430.4 L1570.2,430.6 L1567.6,430.8 L1565.0,431.2 L1562.4,431.6 L1559.8,432.0 L1557.2,432.5 L1554.6,433.1 L1552.0,433.7 L1549.4,434.3 L1546.8,434.9Z" fill="#ffffff" opacity="1" filter="url(#b3)" />
<path d="M1703.9,421.9 L1701.7,422.4 L1699.8,423.8 L1698.5,425.9 L1698.1,428.4 L1698.5,430.9 L1699.8,433.0 L1701.7,434.4 L1703.9,434.9 L1703.9,421.9 L1706.6,421.2 L1709.2,420.5 L1711.8,419.9 L1714.4,419.3 L1717.0,418.7 L1719.6,418.2 L1722.2,417.7 L1724.8,417.3 L1727.4,417.0 L1730.1,416.8 L1732.7,416.6 L1735.3,416.5 L1737.9,416.6 L1740.5,416.7 L1743.1,416.9 L1745.7,417.1 L1748.3,417.5 L1750.9,417.9 L1753.5,418.4 L1756.2,418.9 L1758.8,419.5 L1761.4,420.1 L1764.0,420.7 L1766.6,421.4 L1769.2,422.1 L1771.8,422.7 L1774.4,423.3 L1777.0,423.9 L1779.7,424.5 L1782.3,425.0 L1784.9,425.4 L1787.5,425.8 L1790.1,426.1 L1792.7,426.3 L1795.3,426.5 L1797.9,426.5 L1800.5,426.5 L1803.1,426.4 L1805.8,426.2 L1808.4,426.0 L1811.0,425.6 L1813.6,425.2 L1816.2,424.8 L1818.8,424.3 L1821.4,423.7 L1824.0,423.1 L1826.6,422.5 L1829.2,421.9 L1829.2,421.9 L1831.5,422.4 L1833.4,423.8 L1834.7,425.9 L1835.1,428.4 L1834.7,430.9 L1833.4,433.0 L1831.5,434.4 L1829.2,434.9 L1829.2,434.9 L1826.6,435.6 L1824.0,436.3 L1821.4,436.9 L1818.8,437.5 L1816.2,438.1 L1813.6,438.6 L1811.0,439.1 L1808.4,439.5 L1805.8,439.8 L1803.1,440.0 L1800.5,440.2 L1797.9,440.3 L1795.3,440.2 L1792.7,440.1 L1790.1,439.9 L1787.5,439.7 L1784.9,439.3 L1782.3,438.9 L1779.7,438.4 L1777.0,437.9 L1774.4,437.3 L1771.8,436.7 L1769.2,436.1 L1766.6,435.4 L1764.0,434.7 L1761.4,434.1 L1758.8,433.5 L1756.2,432.9 L1753.5,432.3 L1750.9,431.8 L1748.3,431.4 L1745.7,431.0 L1743.1,430.7 L1740.5,430.5 L1737.9,430.3 L1735.3,430.3 L1732.7,430.3 L1730.1,430.4 L1727.4,430.6 L1724.8,430.8 L1722.2,431.2 L1719.6,431.6 L1717.0,432.0 L1714.4,432.5 L1711.8,433.1 L1709.2,433.7 L1706.6,434.3 L1703.9,434.9Z" fill="#ffffff" opacity="1" filter="url(#b3)" />
<g filter="url(#b06)"><path d="M1413.3,463.5 L1416.7,463.3 L1420.2,463.1 L1423.6,463.1 L1427.1,463.1 L1430.5,463.2 L1434.0,463.5 L1437.4,463.9 L1440.9,464.5 L1444.3,465.1 L1447.8,465.9 L1451.2,466.7 L1454.6,467.6 L1458.1,468.5 L1461.5,469.3 L1465.0,470.0 L1468.4,470.7 L1471.9,471.3 L1475.3,471.7 L1478.8,471.9 L1482.2,472.1 L1485.7,472.1 L1489.1,472.0 L1492.6,471.9 L1496.0,471.7" fill="none" stroke="#ffffff" stroke-width="1.27" stroke-linecap="round" opacity="0.28"/><path d="M1417.1,465.1 L1420.6,464.9 L1424.2,464.8 L1427.7,464.7 L1431.3,464.8 L1434.8,464.9 L1438.4,465.2 L1441.9,465.6 L1445.5,466.2 L1449.0,466.9 L1452.6,467.6 L1456.1,468.5 L1459.7,469.3 L1463.2,470.2 L1466.8,471.1 L1470.3,471.8 L1473.9,472.5 L1477.4,473.1 L1481.0,473.5 L1484.5,473.8 L1488.1,473.9 L1491.6,474.0 L1495.2,473.9 L1498.7,473.8 L1502.3,473.6" fill="none" stroke="#ffffff" stroke-width="0.93" stroke-linecap="round" opacity="0.37"/><path d="M1408.4,465.5 L1411.8,465.3 L1415.2,465.2 L1418.6,465.1 L1422.0,465.1 L1425.4,465.2 L1428.8,465.5 L1432.2,465.9 L1435.6,466.5 L1438.9,467.1 L1442.3,467.9 L1445.7,468.7 L1449.1,469.5 L1452.5,470.4 L1455.9,471.2 L1459.3,472.0 L1462.7,472.6 L1466.0,473.2 L1469.4,473.6 L1472.8,473.8 L1476.2,474.0 L1479.6,474.0 L1483.0,473.9 L1486.4,473.8 L1489.8,473.6" fill="none" stroke="#ffffff" stroke-width="1.30" stroke-linecap="round" opacity="0.24"/><path d="M1413.7,467.3 L1417.4,467.1 L1421.0,467.0 L1424.6,466.9 L1428.2,467.0 L1431.8,467.1 L1435.4,467.4 L1439.0,467.9 L1442.6,468.4 L1446.3,469.1 L1449.9,469.9 L1453.5,470.7 L1457.1,471.6 L1460.7,472.5 L1464.3,473.3 L1467.9,474.1 L1471.5,474.8 L1475.2,475.3 L1478.8,475.8 L1482.4,476.1 L1486.0,476.2 L1489.6,476.3 L1493.2,476.2 L1496.8,476.1 L1500.4,475.9" fill="none" stroke="#ffffff" stroke-width="1.02" stroke-linecap="round" opacity="0.41"/><path d="M1415.0,468.6 L1418.6,468.5 L1422.3,468.4 L1426.0,468.3 L1429.6,468.4 L1433.3,468.5 L1436.9,468.8 L1440.6,469.3 L1444.2,469.8 L1447.9,470.5 L1451.5,471.3 L1455.2,472.1 L1458.8,473.0 L1462.5,473.9 L1466.2,474.7 L1469.8,475.5 L1473.5,476.2 L1477.1,476.8 L1480.8,477.2 L1484.4,477.5 L1488.1,477.7 L1491.7,477.7 L1495.4,477.7 L1499.1,477.6 L1502.7,477.4" fill="none" stroke="#ffffff" stroke-width="1.39" stroke-linecap="round" opacity="0.44"/><path d="M1419.2,470.3 L1422.8,470.1 L1426.3,470.0 L1429.8,469.9 L1433.4,470.0 L1436.9,470.1 L1440.4,470.4 L1444.0,470.8 L1447.5,471.4 L1451.0,472.1 L1454.6,472.8 L1458.1,473.7 L1461.6,474.5 L1465.2,475.4 L1468.7,476.3 L1472.2,477.0 L1475.8,477.7 L1479.3,478.2 L1482.8,478.7 L1486.4,478.9 L1489.9,479.1 L1493.4,479.1 L1497.0,479.1 L1500.5,478.9 L1504.0,478.8" fill="none" stroke="#ffffff" stroke-width="0.79" stroke-linecap="round" opacity="0.23"/><path d="M1418.8,471.5 L1422.2,471.3 L1425.5,471.2 L1428.9,471.1 L1432.2,471.1 L1435.6,471.3 L1438.9,471.5 L1442.3,471.9 L1445.6,472.5 L1449.0,473.1 L1452.3,473.9 L1455.7,474.7 L1459.0,475.5 L1462.4,476.4 L1465.7,477.2 L1469.1,478.0 L1472.4,478.6 L1475.8,479.1 L1479.1,479.5 L1482.5,479.8 L1485.8,479.9 L1489.2,480.0 L1492.5,479.9 L1495.9,479.7 L1499.2,479.6" fill="none" stroke="#ffffff" stroke-width="0.92" stroke-linecap="round" opacity="0.47"/><path d="M1412.9,472.2 L1416.7,472.0 L1420.5,471.9 L1424.3,471.9 L1428.1,472.0 L1431.8,472.1 L1435.6,472.4 L1439.4,472.9 L1443.2,473.5 L1447.0,474.2 L1450.8,475.0 L1454.5,475.8 L1458.3,476.7 L1462.1,477.6 L1465.9,478.5 L1469.7,479.3 L1473.5,480.0 L1477.2,480.5 L1481.0,481.0 L1484.8,481.3 L1488.6,481.5 L1492.4,481.5 L1496.2,481.5 L1499.9,481.4 L1503.7,481.3" fill="none" stroke="#ffffff" stroke-width="1.29" stroke-linecap="round" opacity="0.39"/><path d="M1407.0,472.8 L1410.9,472.7 L1414.7,472.6 L1418.5,472.6 L1422.3,472.6 L1426.1,472.8 L1429.9,473.1 L1433.7,473.6 L1437.5,474.2 L1441.3,474.9 L1445.2,475.6 L1449.0,476.5 L1452.8,477.4 L1456.6,478.3 L1460.4,479.2 L1464.2,480.0 L1468.0,480.7 L1471.8,481.2 L1475.6,481.7 L1479.5,482.0 L1483.3,482.2 L1487.1,482.3 L1490.9,482.2 L1494.7,482.1 L1498.5,482.0" fill="none" stroke="#ffffff" stroke-width="1.05" stroke-linecap="round" opacity="0.24"/></g>
<g filter="url(#b06)"><path d="M1566.9,463.3 L1570.3,463.1 L1573.7,463.0 L1577.1,462.9 L1580.5,462.9 L1583.9,463.1 L1587.3,463.3 L1590.7,463.8 L1594.1,464.3 L1597.5,464.9 L1600.9,465.7 L1604.3,466.5 L1607.8,467.4 L1611.2,468.2 L1614.6,469.1 L1618.0,469.8 L1621.4,470.5 L1624.8,471.0 L1628.2,471.4 L1631.6,471.7 L1635.0,471.8 L1638.4,471.9 L1641.8,471.8 L1645.2,471.6 L1648.6,471.5" fill="none" stroke="#ffffff" stroke-width="1.06" stroke-linecap="round" opacity="0.35"/><path d="M1569.0,464.8 L1572.6,464.6 L1576.1,464.5 L1579.7,464.4 L1583.3,464.5 L1586.9,464.6 L1590.5,464.9 L1594.1,465.3 L1597.6,465.9 L1601.2,466.6 L1604.8,467.3 L1608.4,468.2 L1612.0,469.1 L1615.6,469.9 L1619.2,470.8 L1622.7,471.5 L1626.3,472.2 L1629.9,472.8 L1633.5,473.2 L1637.1,473.5 L1640.7,473.7 L1644.2,473.7 L1647.8,473.6 L1651.4,473.5 L1655.0,473.4" fill="none" stroke="#ffffff" stroke-width="1.26" stroke-linecap="round" opacity="0.40"/><path d="M1561.4,465.2 L1565.5,465.1 L1569.7,465.1 L1573.9,465.1 L1578.0,465.2 L1582.2,465.4 L1586.4,465.7 L1590.6,466.2 L1594.7,466.9 L1598.9,467.6 L1603.1,468.4 L1607.3,469.3 L1611.4,470.3 L1615.6,471.2 L1619.8,472.1 L1623.9,472.9 L1628.1,473.7 L1632.3,474.3 L1636.5,474.8 L1640.6,475.1 L1644.8,475.3 L1649.0,475.4 L1653.2,475.4 L1657.3,475.4 L1661.5,475.3" fill="none" stroke="#ffffff" stroke-width="1.19" stroke-linecap="round" opacity="0.45"/><path d="M1560.5,466.4 L1564.2,466.3 L1567.8,466.1 L1571.5,466.1 L1575.1,466.1 L1578.8,466.3 L1582.4,466.6 L1586.1,467.0 L1589.7,467.6 L1593.3,468.3 L1597.0,469.1 L1600.6,469.9 L1604.3,470.8 L1607.9,471.7 L1611.6,472.5 L1615.2,473.3 L1618.8,474.0 L1622.5,474.5 L1626.1,475.0 L1629.8,475.3 L1633.4,475.4 L1637.1,475.5 L1640.7,475.4 L1644.4,475.3 L1648.0,475.2" fill="none" stroke="#ffffff" stroke-width="1.13" stroke-linecap="round" opacity="0.40"/><path d="M1562.3,467.8 L1566.2,467.7 L1570.0,467.6 L1573.9,467.6 L1577.7,467.7 L1581.6,467.8 L1585.4,468.2 L1589.3,468.6 L1593.1,469.2 L1597.0,469.9 L1600.8,470.7 L1604.7,471.6 L1608.5,472.5 L1612.4,473.4 L1616.2,474.2 L1620.1,475.0 L1623.9,475.7 L1627.8,476.3 L1631.6,476.8 L1635.5,477.1 L1639.3,477.3 L1643.2,477.3 L1647.0,477.3 L1650.9,477.2 L1654.7,477.1" fill="none" stroke="#ffffff" stroke-width="0.83" stroke-linecap="round" opacity="0.24"/><path d="M1563.6,469.2 L1567.5,469.1 L1571.3,469.0 L1575.1,469.0 L1579.0,469.0 L1582.8,469.2 L1586.7,469.5 L1590.5,470.0 L1594.3,470.6 L1598.2,471.3 L1602.0,472.1 L1605.8,472.9 L1609.7,473.8 L1613.5,474.7 L1617.4,475.6 L1621.2,476.4 L1625.0,477.1 L1628.9,477.7 L1632.7,478.1 L1636.5,478.4 L1640.4,478.6 L1644.2,478.7 L1648.1,478.7 L1651.9,478.6 L1655.7,478.4" fill="none" stroke="#ffffff" stroke-width="1.29" stroke-linecap="round" opacity="0.35"/><path d="M1567.9,470.9 L1571.6,470.7 L1575.2,470.6 L1578.8,470.6 L1582.5,470.6 L1586.1,470.8 L1589.7,471.1 L1593.4,471.5 L1597.0,472.1 L1600.6,472.8 L1604.3,473.5 L1607.9,474.4 L1611.5,475.3 L1615.2,476.1 L1618.8,477.0 L1622.5,477.8 L1626.1,478.5 L1629.7,479.0 L1633.4,479.4 L1637.0,479.7 L1640.6,479.9 L1644.3,480.0 L1647.9,479.9 L1651.5,479.8 L1655.2,479.6" fill="none" stroke="#ffffff" stroke-width="1.02" stroke-linecap="round" opacity="0.41"/><path d="M1564.2,471.8 L1567.7,471.6 L1571.1,471.5 L1574.6,471.4 L1578.1,471.4 L1581.6,471.6 L1585.0,471.9 L1588.5,472.3 L1592.0,472.8 L1595.4,473.5 L1598.9,474.3 L1602.4,475.1 L1605.9,475.9 L1609.3,476.8 L1612.8,477.6 L1616.3,478.4 L1619.7,479.1 L1623.2,479.6 L1626.7,480.0 L1630.2,480.3 L1633.6,480.5 L1637.1,480.5 L1640.6,480.4 L1644.0,480.3 L1647.5,480.1" fill="none" stroke="#ffffff" stroke-width="1.20" stroke-linecap="round" opacity="0.46"/><path d="M1564.8,473.1 L1568.7,473.0 L1572.6,472.9 L1576.5,472.8 L1580.4,472.9 L1584.3,473.1 L1588.2,473.4 L1592.1,473.9 L1596.0,474.5 L1599.9,475.2 L1603.8,476.0 L1607.7,476.9 L1611.6,477.8 L1615.5,478.7 L1619.4,479.6 L1623.3,480.4 L1627.2,481.1 L1631.1,481.7 L1635.0,482.1 L1638.9,482.4 L1642.8,482.6 L1646.7,482.7 L1650.6,482.7 L1654.5,482.6 L1658.4,482.5" fill="none" stroke="#ffffff" stroke-width="1.24" stroke-linecap="round" opacity="0.24"/></g>
<path d="M1709.1,462.6 L1705.7,463.4 L1702.7,465.5 L1700.8,468.8 L1700.1,472.6 L1700.8,476.4 L1702.7,479.7 L1705.7,481.8 L1709.1,482.6 L1709.1,462.6 L1711.7,462.2 L1714.3,461.8 L1716.9,461.3 L1719.5,461.0 L1722.1,460.6 L1724.6,460.3 L1727.2,460.0 L1729.8,459.8 L1732.4,459.7 L1735.0,459.5 L1737.6,459.5 L1740.2,459.5 L1742.8,459.6 L1745.4,459.7 L1748.0,459.9 L1750.6,460.1 L1753.2,460.4 L1755.8,460.8 L1758.3,461.2 L1760.9,461.7 L1763.5,462.2 L1766.1,462.7 L1768.7,463.3 L1771.3,463.9 L1773.9,464.5 L1776.5,465.2 L1779.1,465.8 L1781.7,466.4 L1784.3,466.9 L1786.8,467.5 L1789.4,468.0 L1792.0,468.5 L1794.6,468.9 L1797.2,469.2 L1799.8,469.5 L1802.4,469.8 L1805.0,469.9 L1807.6,470.1 L1810.2,470.1 L1812.8,470.1 L1815.4,470.0 L1818.0,469.9 L1820.5,469.8 L1823.1,469.6 L1825.7,469.4 L1828.3,469.1 L1830.9,468.9 L1833.5,468.6 L1833.5,468.6 L1834.9,468.9 L1836.0,469.8 L1836.8,471.1 L1837.1,472.6 L1836.8,474.1 L1836.0,475.4 L1834.9,476.3 L1833.5,476.6 L1833.5,476.6 L1830.9,477.4 L1828.3,478.1 L1825.7,478.9 L1823.1,479.6 L1820.5,480.3 L1818.0,480.9 L1815.4,481.5 L1812.8,482.0 L1810.2,482.5 L1807.6,482.9 L1805.0,483.2 L1802.4,483.4 L1799.8,483.6 L1797.2,483.7 L1794.6,483.7 L1792.0,483.7 L1789.4,483.5 L1786.8,483.4 L1784.3,483.1 L1781.7,482.8 L1779.1,482.5 L1776.5,482.1 L1773.9,481.7 L1771.3,481.3 L1768.7,480.8 L1766.1,480.4 L1763.5,480.0 L1760.9,479.5 L1758.3,479.1 L1755.8,478.8 L1753.2,478.4 L1750.6,478.1 L1748.0,477.9 L1745.4,477.8 L1742.8,477.7 L1740.2,477.7 L1737.6,477.8 L1735.0,477.9 L1732.4,478.2 L1729.8,478.5 L1727.2,478.8 L1724.6,479.2 L1722.1,479.7 L1719.5,480.2 L1716.9,480.8 L1714.3,481.4 L1711.7,482.0 L1709.1,482.6Z" fill="#ffffff" opacity="0.85" filter="url(#noise)"/>
<path d="M1398.3,515.8 L1396.9,516.1 L1395.8,517.0 L1395.0,518.3 L1394.7,519.8 L1395.0,521.3 L1395.8,522.6 L1396.9,523.5 L1398.3,523.8 L1398.3,515.8 L1400.7,515.1 L1403.2,514.4 L1405.6,513.8 L1408.1,513.2 L1410.5,512.6 L1412.9,512.0 L1415.4,511.5 L1417.8,511.0 L1420.2,510.6 L1422.7,510.2 L1425.1,510.0 L1427.6,509.7 L1430.0,509.6 L1432.4,509.5 L1434.9,509.5 L1437.3,509.5 L1439.8,509.6 L1442.2,509.8 L1444.6,510.0 L1447.1,510.3 L1449.5,510.7 L1451.9,511.0 L1454.4,511.4 L1456.8,511.9 L1459.3,512.3 L1461.7,512.8 L1464.1,513.3 L1466.6,513.8 L1469.0,514.2 L1471.5,514.7 L1473.9,515.2 L1476.3,515.6 L1478.8,516.0 L1481.2,516.4 L1483.6,516.7 L1486.1,517.0 L1488.5,517.3 L1491.0,517.6 L1493.4,517.8 L1495.8,517.9 L1498.3,518.1 L1500.7,518.1 L1503.2,518.2 L1505.6,518.3 L1508.0,518.3 L1510.5,518.3 L1512.9,518.3 L1515.4,518.3 L1515.4,518.3 L1515.9,518.4 L1516.3,518.7 L1516.6,519.2 L1516.7,519.8 L1516.6,520.4 L1516.3,520.9 L1515.9,521.2 L1515.4,521.3 L1515.4,521.3 L1512.9,522.1 L1510.5,522.8 L1508.0,523.6 L1505.6,524.3 L1503.2,525.0 L1500.7,525.7 L1498.3,526.3 L1495.8,526.9 L1493.4,527.4 L1491.0,527.8 L1488.5,528.2 L1486.1,528.6 L1483.6,528.8 L1481.2,529.0 L1478.8,529.1 L1476.3,529.2 L1473.9,529.2 L1471.5,529.1 L1469.0,529.0 L1466.6,528.8 L1464.1,528.6 L1461.7,528.4 L1459.3,528.1 L1456.8,527.7 L1454.4,527.4 L1451.9,527.0 L1449.5,526.6 L1447.1,526.3 L1444.6,525.9 L1442.2,525.5 L1439.8,525.2 L1437.3,524.9 L1434.9,524.6 L1432.4,524.3 L1430.0,524.1 L1427.6,523.9 L1425.1,523.7 L1422.7,523.6 L1420.2,523.5 L1417.8,523.4 L1415.4,523.4 L1412.9,523.4 L1410.5,523.4 L1408.1,523.4 L1405.6,523.5 L1403.2,523.6 L1400.7,523.7 L1398.3,523.8Z" fill="#ffffff" opacity="0.75" filter="url(#noise)"/>
<path d="M1550.2,512.3 L1547.8,512.8 L1545.7,514.4 L1544.4,516.6 L1543.9,519.3 L1544.4,522.0 L1545.7,524.2 L1547.8,525.8 L1550.2,526.3 L1550.2,512.3 L1552.7,512.1 L1555.2,511.8 L1557.6,511.6 L1560.1,511.4 L1562.6,511.3 L1565.1,511.1 L1567.6,511.0 L1570.1,511.0 L1572.5,510.9 L1575.0,510.9 L1577.5,511.0 L1580.0,511.1 L1582.5,511.2 L1584.9,511.4 L1587.4,511.6 L1589.9,511.9 L1592.4,512.2 L1594.9,512.5 L1597.3,512.8 L1599.8,513.2 L1602.3,513.6 L1604.8,514.0 L1607.3,514.4 L1609.8,514.8 L1612.2,515.2 L1614.7,515.6 L1617.2,516.0 L1619.7,516.3 L1622.2,516.7 L1624.6,517.0 L1627.1,517.2 L1629.6,517.5 L1632.1,517.7 L1634.6,517.8 L1637.0,517.9 L1639.5,517.9 L1642.0,517.9 L1644.5,517.9 L1647.0,517.8 L1649.5,517.6 L1651.9,517.5 L1654.4,517.2 L1656.9,517.0 L1659.4,516.7 L1661.9,516.4 L1664.3,516.0 L1666.8,515.7 L1669.3,515.3 L1669.3,515.3 L1670.7,515.6 L1671.8,516.5 L1672.6,517.8 L1672.9,519.3 L1672.6,520.8 L1671.8,522.1 L1670.7,523.0 L1669.3,523.3 L1669.3,523.3 L1666.8,523.7 L1664.3,524.1 L1661.9,524.5 L1659.4,524.9 L1656.9,525.3 L1654.4,525.6 L1651.9,525.9 L1649.5,526.1 L1647.0,526.3 L1644.5,526.5 L1642.0,526.6 L1639.5,526.7 L1637.0,526.7 L1634.6,526.6 L1632.1,526.5 L1629.6,526.3 L1627.1,526.1 L1624.6,525.9 L1622.2,525.6 L1619.7,525.3 L1617.2,524.9 L1614.7,524.6 L1612.2,524.2 L1609.8,523.8 L1607.3,523.4 L1604.8,523.0 L1602.3,522.7 L1599.8,522.4 L1597.3,522.1 L1594.9,521.9 L1592.4,521.7 L1589.9,521.5 L1587.4,521.4 L1584.9,521.4 L1582.5,521.4 L1580.0,521.5 L1577.5,521.7 L1575.0,521.9 L1572.5,522.1 L1570.1,522.5 L1567.6,522.8 L1565.1,523.2 L1562.6,523.7 L1560.1,524.2 L1557.6,524.7 L1555.2,525.2 L1552.7,525.7 L1550.2,526.3Z" fill="#ffffff" opacity="0.8" filter="url(#noise)"/>
<path d="M1706.4,511.8 L1704.0,512.3 L1701.9,513.9 L1700.6,516.1 L1700.1,518.8 L1700.6,521.5 L1701.9,523.7 L1704.0,525.3 L1706.4,525.8 L1706.4,511.8 L1708.9,511.6 L1711.4,511.4 L1714.0,511.2 L1716.5,511.1 L1719.0,510.9 L1721.5,510.7 L1724.1,510.6 L1726.6,510.5 L1729.1,510.4 L1731.6,510.4 L1734.2,510.3 L1736.7,510.3 L1739.2,510.3 L1741.7,510.4 L1744.3,510.4 L1746.8,510.5 L1749.3,510.6 L1751.8,510.7 L1754.4,510.9 L1756.9,511.1 L1759.4,511.2 L1761.9,511.4 L1764.5,511.6 L1767.0,511.8 L1769.5,512.0 L1772.0,512.2 L1774.6,512.4 L1777.1,512.6 L1779.6,512.8 L1782.1,513.0 L1784.7,513.2 L1787.2,513.4 L1789.7,513.5 L1792.2,513.7 L1794.8,513.8 L1797.3,513.9 L1799.8,514.0 L1802.3,514.0 L1804.9,514.1 L1807.4,514.1 L1809.9,514.1 L1812.4,514.1 L1815.0,514.1 L1817.5,514.0 L1820.0,514.0 L1822.5,513.9 L1825.1,513.9 L1827.6,513.8 L1827.6,513.8 L1829.3,514.2 L1830.8,515.3 L1831.8,516.9 L1832.1,518.8 L1831.8,520.7 L1830.8,522.3 L1829.3,523.4 L1827.6,523.8 L1827.6,523.8 L1825.1,524.1 L1822.5,524.4 L1820.0,524.8 L1817.5,525.1 L1815.0,525.4 L1812.4,525.6 L1809.9,525.9 L1807.4,526.1 L1804.9,526.3 L1802.3,526.5 L1799.8,526.6 L1797.3,526.7 L1794.8,526.8 L1792.2,526.8 L1789.7,526.8 L1787.2,526.8 L1784.7,526.8 L1782.1,526.7 L1779.6,526.6 L1777.1,526.5 L1774.6,526.3 L1772.0,526.2 L1769.5,526.0 L1767.0,525.8 L1764.5,525.6 L1761.9,525.4 L1759.4,525.2 L1756.9,525.1 L1754.4,524.9 L1751.8,524.7 L1749.3,524.6 L1746.8,524.5 L1744.3,524.4 L1741.7,524.4 L1739.2,524.3 L1736.7,524.3 L1734.2,524.3 L1731.6,524.4 L1729.1,524.4 L1726.6,524.5 L1724.1,524.6 L1721.5,524.7 L1719.0,524.9 L1716.5,525.1 L1714.0,525.2 L1711.4,525.4 L1708.9,525.6 L1706.4,525.8Z" fill="#ffffff" opacity="0.45" filter="url(#noise3)"/>
<path d="M1395.2,559.0 L1393.5,559.4 L1392.0,560.5 L1391.0,562.1 L1390.7,564.0 L1391.0,565.9 L1392.0,567.5 L1393.5,568.6 L1395.2,569.0 L1395.2,559.0 L1397.5,558.8 L1399.8,558.6 L1402.1,558.4 L1404.5,558.2 L1406.8,558.1 L1409.1,557.9 L1411.4,557.8 L1413.7,557.7 L1416.0,557.6 L1418.3,557.6 L1420.6,557.5 L1423.0,557.5 L1425.3,557.5 L1427.6,557.6 L1429.9,557.6 L1432.2,557.7 L1434.5,557.8 L1436.8,557.9 L1439.1,558.1 L1441.5,558.2 L1443.8,558.4 L1446.1,558.6 L1448.4,558.8 L1450.7,559.0 L1453.0,559.2 L1455.3,559.4 L1457.6,559.6 L1460.0,559.8 L1462.3,559.9 L1464.6,560.1 L1466.9,560.2 L1469.2,560.3 L1471.5,560.4 L1473.8,560.4 L1476.1,560.5 L1478.5,560.5 L1480.8,560.5 L1483.1,560.4 L1485.4,560.4 L1487.7,560.3 L1490.0,560.2 L1492.3,560.1 L1494.6,559.9 L1497.0,559.8 L1499.3,559.6 L1501.6,559.4 L1503.9,559.2 L1506.2,559.0 L1506.2,559.0 L1507.9,559.4 L1509.4,560.5 L1510.4,562.1 L1510.7,564.0 L1510.4,565.9 L1509.4,567.5 L1507.9,568.6 L1506.2,569.0 L1506.2,569.0 L1503.9,569.2 L1501.6,569.4 L1499.3,569.6 L1497.0,569.8 L1494.6,569.9 L1492.3,570.1 L1490.0,570.2 L1487.7,570.3 L1485.4,570.4 L1483.1,570.4 L1480.8,570.5 L1478.5,570.5 L1476.1,570.5 L1473.8,570.4 L1471.5,570.4 L1469.2,570.3 L1466.9,570.2 L1464.6,570.1 L1462.3,569.9 L1460.0,569.8 L1457.6,569.6 L1455.3,569.4 L1453.0,569.2 L1450.7,569.0 L1448.4,568.8 L1446.1,568.6 L1443.8,568.4 L1441.5,568.2 L1439.1,568.1 L1436.8,567.9 L1434.5,567.8 L1432.2,567.7 L1429.9,567.6 L1427.6,567.6 L1425.3,567.5 L1423.0,567.5 L1420.6,567.5 L1418.3,567.6 L1416.0,567.6 L1413.7,567.7 L1411.4,567.8 L1409.1,567.9 L1406.8,568.1 L1404.5,568.2 L1402.1,568.4 L1399.8,568.6 L1397.5,568.8 L1395.2,569.0Z" fill="#ffffff" opacity="0.12" filter="url(#noise)"/>
<path d="M1549.2,557.0 L1546.8,557.5 L1544.7,559.1 L1543.4,561.3 L1542.9,564.0 L1543.4,566.7 L1544.7,568.9 L1546.8,570.5 L1549.2,571.0 L1549.2,557.0 L1551.7,556.7 L1554.2,556.5 L1556.7,556.2 L1559.2,556.0 L1561.7,555.8 L1564.2,555.6 L1566.8,555.5 L1569.3,555.3 L1571.8,555.2 L1574.3,555.2 L1576.8,555.2 L1579.3,555.2 L1581.8,555.3 L1584.3,555.4 L1586.8,555.5 L1589.3,555.7 L1591.8,555.9 L1594.4,556.2 L1596.9,556.4 L1599.4,556.7 L1601.9,557.0 L1604.4,557.3 L1606.9,557.7 L1609.4,558.0 L1611.9,558.3 L1614.4,558.6 L1616.9,558.9 L1619.4,559.2 L1621.9,559.5 L1624.5,559.7 L1627.0,559.9 L1629.5,560.0 L1632.0,560.1 L1634.5,560.2 L1637.0,560.2 L1639.5,560.2 L1642.0,560.1 L1644.5,560.0 L1647.0,559.9 L1649.5,559.7 L1652.0,559.4 L1654.6,559.2 L1657.1,558.8 L1659.6,558.5 L1662.1,558.2 L1664.6,557.8 L1667.1,557.4 L1669.6,557.0 L1669.6,557.0 L1672.0,557.5 L1674.1,559.1 L1675.4,561.3 L1675.9,564.0 L1675.4,566.7 L1674.1,568.9 L1672.0,570.5 L1669.6,571.0 L1669.6,571.0 L1667.1,571.3 L1664.6,571.5 L1662.1,571.8 L1659.6,572.0 L1657.1,572.2 L1654.6,572.4 L1652.0,572.5 L1649.5,572.7 L1647.0,572.8 L1644.5,572.8 L1642.0,572.8 L1639.5,572.8 L1637.0,572.7 L1634.5,572.6 L1632.0,572.5 L1629.5,572.3 L1627.0,572.1 L1624.5,571.8 L1621.9,571.6 L1619.4,571.3 L1616.9,571.0 L1614.4,570.7 L1611.9,570.3 L1609.4,570.0 L1606.9,569.7 L1604.4,569.4 L1601.9,569.1 L1599.4,568.8 L1596.9,568.5 L1594.4,568.3 L1591.8,568.1 L1589.3,568.0 L1586.8,567.9 L1584.3,567.8 L1581.8,567.8 L1579.3,567.8 L1576.8,567.9 L1574.3,568.0 L1571.8,568.1 L1569.3,568.3 L1566.8,568.6 L1564.2,568.8 L1561.7,569.2 L1559.2,569.5 L1556.7,569.8 L1554.2,570.2 L1551.7,570.6 L1549.2,571.0Z" fill="#ffffff" opacity="0.45" filter="url(#noise)"/>
<path d="M1705.3,556.0 L1702.5,556.6 L1700.2,558.3 L1698.6,560.9 L1698.1,564.0 L1698.6,567.1 L1700.2,569.7 L1702.5,571.4 L1705.3,572.0 L1705.3,556.0 L1707.9,555.7 L1710.4,555.5 L1713.0,555.2 L1715.6,555.0 L1718.2,554.8 L1720.7,554.6 L1723.3,554.5 L1725.9,554.3 L1728.5,554.2 L1731.0,554.2 L1733.6,554.2 L1736.2,554.2 L1738.7,554.3 L1741.3,554.4 L1743.9,554.5 L1746.5,554.7 L1749.0,554.9 L1751.6,555.2 L1754.2,555.4 L1756.8,555.7 L1759.3,556.0 L1761.9,556.3 L1764.5,556.7 L1767.0,557.0 L1769.6,557.3 L1772.2,557.6 L1774.8,558.0 L1777.3,558.2 L1779.9,558.5 L1782.5,558.8 L1785.1,559.0 L1787.6,559.2 L1790.2,559.3 L1792.8,559.4 L1795.4,559.5 L1797.9,559.5 L1800.5,559.5 L1803.1,559.4 L1805.6,559.3 L1808.2,559.2 L1810.8,559.0 L1813.4,558.8 L1815.9,558.5 L1818.5,558.2 L1821.1,558.0 L1823.7,557.6 L1826.2,557.3 L1828.8,557.0 L1828.8,557.0 L1831.2,557.5 L1833.3,559.1 L1834.6,561.3 L1835.1,564.0 L1834.6,566.7 L1833.3,568.9 L1831.2,570.5 L1828.8,571.0 L1828.8,571.0 L1826.2,571.3 L1823.7,571.6 L1821.1,572.0 L1818.5,572.2 L1815.9,572.5 L1813.4,572.8 L1810.8,573.0 L1808.2,573.2 L1805.6,573.3 L1803.1,573.4 L1800.5,573.5 L1797.9,573.5 L1795.4,573.5 L1792.8,573.4 L1790.2,573.3 L1787.6,573.2 L1785.1,573.0 L1782.5,572.8 L1779.9,572.5 L1777.3,572.2 L1774.8,572.0 L1772.2,571.6 L1769.6,571.3 L1767.0,571.0 L1764.5,570.7 L1761.9,570.4 L1759.3,570.1 L1756.8,569.8 L1754.2,569.5 L1751.6,569.3 L1749.0,569.1 L1746.5,569.0 L1743.9,568.9 L1741.3,568.8 L1738.7,568.8 L1736.2,568.8 L1733.6,568.9 L1731.0,569.0 L1728.5,569.1 L1725.9,569.3 L1723.3,569.6 L1720.7,569.8 L1718.2,570.2 L1715.6,570.5 L1713.0,570.8 L1710.4,571.2 L1707.9,571.6 L1705.3,572.0Z" fill="#ffffff" opacity="0.8" filter="url(#noise2)"/>
</g>
<rect x="1537.8" y="185.6" width="155" height="44.2" fill="none" stroke="#f47a20" stroke-width="1.8"/>
<polyline points="1907.5,197.5 1911.5,193.5 1915.5,197.5" fill="none" stroke="#a0a0a0" stroke-width="1.2"/>
<polyline points="1907.5,563 1911.5,567 1915.5,563" fill="none" stroke="#a0a0a0" stroke-width="1.2"/>
<rect x="1904.5" y="202" width="12" height="90" fill="#696969" />
<line x1="1380" y1="575" x2="1920" y2="575" stroke="#464646" stroke-width="1" />
<rect x="1388" y="582" width="377" height="3" fill="#707070" />
<path d="M1468,585 L1474,591.5 V595 H1462 V591.5 Z" fill="#ececec" />
<path d="M1790,587.5 C1793,583 1799,583 1802,587.5 C1799,592 1793,592 1790,587.5 Z" fill="none" stroke="#c8c8c8" stroke-width="1.2" />
<circle cx="1796" cy="587.5" r="1.8" fill="#c8c8c8" />
<path d="M1808,582 L1801,590 M1801,590 L1799,593" fill="none" stroke="#c8c8c8" stroke-width="1.3" />
<path d="M1821,583 H1825.5 L1827,584.5 H1833 V593 H1821 Z" fill="#d0d0d0" />
<rect x="1850.5" y="582.5" width="11" height="11" fill="none" stroke="#d0d0d0" stroke-width="1.2"/>
<path d="M1856,585 V591 M1853,588 H1859" fill="none" stroke="#d0d0d0" stroke-width="1.2" />
<path d="M1879,583.5 H1890 M1882.5,583.5 V582 H1886.5 V583.5 M1880.5,585 V594 H1888.5 V585 M1883,586.5 V592.5 M1886,586.5 V592.5" fill="none" stroke="#d8d8d8" stroke-width="1.2" />
<rect x="1380" y="603" width="540" height="27" fill="#424242" />
<rect x="1380" y="603" width="54" height="27" fill="#535353" />
<text x="1389" y="620" font-size="11" fill="#f0f0f0" textLength="36" lengthAdjust="spacingAndGlyphs" font-weight="bold" >Calques</text>
<line x1="1489.5" y1="603" x2="1489.5" y2="629" stroke="#393939" stroke-width="1" />
<text x="1443" y="620" font-size="11" fill="#a8a8a8" textLength="39" lengthAdjust="spacingAndGlyphs" font-weight="bold" >Couches</text>
<line x1="1536.5" y1="603" x2="1536.5" y2="629" stroke="#393939" stroke-width="1" />
<text x="1500" y="620" font-size="11" fill="#a8a8a8" textLength="29" lengthAdjust="spacingAndGlyphs" font-weight="bold" >Tracés</text>
<line x1="1903" y1="611.5" x2="1913" y2="611.5" stroke="#c8c8c8" stroke-width="1" />
<line x1="1903" y1="613.5" x2="1913" y2="613.5" stroke="#c8c8c8" stroke-width="1" />
<line x1="1903" y1="615.5" x2="1913" y2="615.5" stroke="#c8c8c8" stroke-width="1" />
<line x1="1903" y1="617.5" x2="1913" y2="617.5" stroke="#c8c8c8" stroke-width="1" />
<rect x="1380" y="630" width="540" height="409" fill="#535353" />
<rect x="1384.5" y="639.5" width="103.5" height="19.5" rx="2" fill="#454545" stroke="#3e3e3e"/>
<circle cx="1395" cy="648" r="3.5" fill="none" stroke="#e0e0e0" stroke-width="1.4"/>
<line x1="1397.5" y1="650.5" x2="1400" y2="653" stroke="#e0e0e0" stroke-width="1.8" />
<text x="1406" y="653" font-size="11" fill="#e4e4e4" textLength="22" lengthAdjust="spacingAndGlyphs" >Type</text>
<polyline points="1477.5,648.0 1481,652.0 1484.5,648.0" fill="none" stroke="#c8c8c8" stroke-width="1.2"/>
<rect x="1509.5" y="644.5" width="11" height="9" fill="none" stroke="#d8d8d8" stroke-width="1"/>
<path d="M1511,652 L1513.5,648.5 L1515.5,650.5 L1517,649 L1519,652 Z" fill="#d8d8d8" />
<circle cx="1539.5" cy="649" r="5" fill="none" stroke="#d8d8d8" stroke-width="1.2"/>
<path d="M1543,645.5 L1536,652.5 A5,5 0 0 0 1543,645.5 Z" fill="#d8d8d8" />
<path d="M1559,644 H1569 V646.5 H1568 L1567.5,645.5 H1565 V653 H1566.5 V654 H1561.5 V653 H1563 V645.5 H1560.5 L1560,646.5 H1559 Z" fill="#d8d8d8" />
<rect x="1583.5" y="644.5" width="9" height="9" fill="none" stroke="#d8d8d8" stroke-width="1"/>
<rect x="1582.0" y="643.0" width="3" height="3" fill="#d8d8d8" />
<rect x="1591.0" y="643.0" width="3" height="3" fill="#d8d8d8" />
<rect x="1582.0" y="652.0" width="3" height="3" fill="#d8d8d8" />
<rect x="1591.0" y="652.0" width="3" height="3" fill="#d8d8d8" />
<path d="M1608,645 H1614 L1617,648 V654 H1608 Z" fill="none" stroke="#d8d8d8" stroke-width="1.1" />
<rect x="1607" y="650" width="5" height="5" fill="#d8d8d8" />
<rect x="1638.5" y="640.5" width="8" height="16" rx="4" fill="#3c3c3c" stroke="#454545"/>
<circle cx="1642.5" cy="644.5" r="3.6" fill="#e8e8e8" />
<line x1="1380" y1="662.5" x2="1920" y2="662.5" stroke="#464646" stroke-width="1" />
<rect x="1384.5" y="667.5" width="157.5" height="19.5" rx="2" fill="#454545" stroke="#3e3e3e"/>
<text x="1392" y="681.5" font-size="11" fill="#e4e4e4" textLength="32" lengthAdjust="spacingAndGlyphs" >Normal</text>
<polyline points="1531.5,676.0 1535,680.0 1538.5,676.0" fill="none" stroke="#c8c8c8" stroke-width="1.2"/>
<text x="1549" y="681.5" font-size="11" fill="#cfcfcf" textLength="39" lengthAdjust="spacingAndGlyphs" >Opacité :</text>
<rect x="1593.5" y="669.5" width="52.5" height="16.5" rx="2" fill="#464646" stroke="#3c3c3c"/>
<line x1="1631" y1="670" x2="1631" y2="686" stroke="#3c3c3c" stroke-width="1" />
<text x="1598" y="681.5" font-size="11" fill="#e8e8e8" textLength="28" lengthAdjust="spacingAndGlyphs" >100 %</text>
<polyline points="1635.0,676.0 1638.5,680.0 1642.0,676.0" fill="none" stroke="#c8c8c8" stroke-width="1.2"/>
<line x1="1380" y1="690.5" x2="1920" y2="690.5" stroke="#464646" stroke-width="1" />
<text x="1386" y="709.5" font-size="11" fill="#cfcfcf" textLength="36" lengthAdjust="spacingAndGlyphs" >Verrou :</text>
<rect x="1431.5" y="699.5" width="11" height="11" fill="none" stroke="#d8d8d8" stroke-width="1"/>
<rect x="1432.0" y="700.0" width="3.4" height="3.4" fill="#d8d8d8" />
<rect x="1432.0" y="706.8" width="3.4" height="3.4" fill="#d8d8d8" />
<rect x="1435.4" y="703.4" width="3.4" height="3.4" fill="#d8d8d8" />
<rect x="1438.8" y="700.0" width="3.4" height="3.4" fill="#d8d8d8" />
<rect x="1438.8" y="706.8" width="3.4" height="3.4" fill="#d8d8d8" />
<path d="M1466,699 L1459,706.5 L1460.5,708 Z" fill="#d8d8d8" />
<path d="M1458.5,707 C1456.5,707 1455.5,708 1455,709.5 C1454.7,710.3 1454,710.8 1453.5,711 C1456,711.5 1458.5,710.8 1459.5,708.3 Z" fill="#d8d8d8" />
<path d="M1481.5,698 V712 M1474.5,705 H1488.5" fill="none" stroke="#d8d8d8" stroke-width="1.3" />
<path d="M1481.5,697.5 L1479,700 H1484 Z M1481.5,712.5 L1479,710 H1484 Z M1474,705 L1476.5,702.5 V707.5 Z M1489,705 L1486.5,702.5 V707.5 Z" fill="#d8d8d8" />
<path d="M1500,701.5 H1508 V710 H1500 Z M1497,701.5 H1512 M1500,698.5 V712 M1497,710 H1512 M1508,698.5 V712" fill="none" stroke="#d8d8d8" stroke-width="1" stroke-dasharray="2,1"/>
<path d="M1522.5,705 V702.5 A3.5,3.5 0 0 1 1529.5,702.5 V705" fill="none" stroke="#d8d8d8" stroke-width="1.6" />
<rect x="1520.5" y="705" width="11" height="7.5" fill="#d8d8d8" />
<circle cx="1526" cy="708.5" r="1.2" fill="#535353" />
<text x="1559" y="709.5" font-size="11" fill="#cfcfcf" textLength="29" lengthAdjust="spacingAndGlyphs" >Fond :</text>
<rect x="1593.5" y="697.5" width="52.5" height="16.5" rx="2" fill="#464646" stroke="#3c3c3c"/>
<line x1="1631" y1="698" x2="1631" y2="714" stroke="#3c3c3c" stroke-width="1" />
<text x="1598" y="709.5" font-size="11" fill="#e8e8e8" textLength="28" lengthAdjust="spacingAndGlyphs" >100 %</text>
<polyline points="1635.0,704.0 1638.5,708.0 1642.0,704.0" fill="none" stroke="#c8c8c8" stroke-width="1.2"/>
<clipPath id="layclip"><rect x="1380" y="719" width="522" height="294"/></clipPath>
<g clip-path="url(#layclip)">
<rect x="1410" y="720.6" width="492" height="27" fill="#696969" />
<line x1="1380" y1="748.1" x2="1902" y2="748.1" stroke="#474747" stroke-width="1" />
<line x1="1409.5" y1="720.6" x2="1409.5" y2="747.6" stroke="#474747" stroke-width="1" />
<path d="M1388.5,735 C1391.5,730 1399.5,730 1402.5,735 C1399.5,740 1391.5,740 1388.5,735 Z" fill="#e8e8e8" />
<circle cx="1395.5" cy="735" r="2.6" fill="#535353" />
<circle cx="1396.3" cy="734.2" r="0.7" fill="#e8e8e8" />
<rect x="1414.5" y="726.1" width="31" height="17" fill="url(#checker)" stroke="#2e2e2e" stroke-width="1"/>
<rect x="1424" y="735" width="1.5" height="1.5" fill="#000" />
<rect x="1427" y="735" width="1.5" height="1.5" fill="#000" />
<path d="M1412.5,729.6 V723.1 H1420 M1440,723.1 H1447.5 V729.6 M1447.5,738.6 V745.6 H1440 M1420,745.6 H1412.5 V738.6" fill="none" stroke="#ffffff" stroke-width="1.3" />
<text x="1455" y="739.6" font-size="11" fill="#e6e6e6" textLength="38" lengthAdjust="spacingAndGlyphs" >Calque 9</text>
<line x1="1380" y1="776.1" x2="1902" y2="776.1" stroke="#474747" stroke-width="1" />
<line x1="1409.5" y1="748.6" x2="1409.5" y2="775.6" stroke="#474747" stroke-width="1" />
<rect x="1389.5" y="757.1" width="12" height="12" fill="none" stroke="#474747" stroke-width="1"/>
<rect x="1414.5" y="754.1" width="31" height="17" fill="url(#checker)" stroke="#2e2e2e" stroke-width="1"/>
<rect x="1432" y="761" width="1.5" height="1.5" fill="#000" />
<rect x="1432" y="759" width="1.5" height="1.5" fill="#000" />
<text x="1455" y="767.6" font-size="11" fill="#e6e6e6" textLength="38" lengthAdjust="spacingAndGlyphs" >Calque 8</text>
<line x1="1380" y1="804.1" x2="1902" y2="804.1" stroke="#474747" stroke-width="1" />
<line x1="1409.5" y1="776.6" x2="1409.5" y2="803.6" stroke="#474747" stroke-width="1" />
<rect x="1389.5" y="785.1" width="12" height="12" fill="none" stroke="#474747" stroke-width="1"/>
<rect x="1414.5" y="782.1" width="31" height="17" fill="#d8861a" stroke="#2e2e2e" stroke-width="1"/>
<rect x="1450.5" y="784.6" width="5" height="6" rx="2.5" fill="none" stroke="#d8d8d8" stroke-width="1.2"/><rect x="1450.5" y="789.6" width="5" height="6" rx="2.5" fill="none" stroke="#d8d8d8" stroke-width="1.2"/>
<rect x="1462.5" y="782.1" width="30" height="18" fill="#777777" stroke="#3a3a3a" stroke-width="1"/>
<path d="M1474,789.6 L1480,785.6 L1478,788.6 Z" fill="#000" />
<text x="1502" y="795.6" font-size="11" fill="#e6e6e6" textLength="35" lengthAdjust="spacingAndGlyphs" >Forme 1</text>
<line x1="1380" y1="832.1" x2="1902" y2="832.1" stroke="#474747" stroke-width="1" />
<line x1="1409.5" y1="804.6" x2="1409.5" y2="831.6" stroke="#474747" stroke-width="1" />
<rect x="1389.5" y="813.1" width="12" height="12" fill="none" stroke="#474747" stroke-width="1"/>
<rect x="1414.5" y="810.1" width="31" height="17" fill="url(#checker)" stroke="#2e2e2e" stroke-width="1"/>
<rect x="1435" y="822" width="1.5" height="1.5" fill="#000" />
<rect x="1422" y="824" width="1.5" height="1.5" fill="#000" />
<rect x="1423" y="820" width="1.5" height="1.5" fill="#000" />
<rect x="1420" y="821" width="1.5" height="1.5" fill="#000" />
<rect x="1422" y="820" width="1.5" height="1.5" fill="#000" />
<rect x="1435" y="821" width="1.5" height="1.5" fill="#000" />
<text x="1455" y="823.6" font-size="11" fill="#e6e6e6" textLength="66" lengthAdjust="spacingAndGlyphs" >Hybiou test dev</text>
<line x1="1380" y1="860.1" x2="1902" y2="860.1" stroke="#474747" stroke-width="1" />
<line x1="1409.5" y1="832.6" x2="1409.5" y2="859.6" stroke="#474747" stroke-width="1" />
<rect x="1389.5" y="841.1" width="12" height="12" fill="none" stroke="#474747" stroke-width="1"/>
<rect x="1414.5" y="838.1" width="31" height="17" fill="url(#checker)" stroke="#2e2e2e" stroke-width="1"/>
<rect x="1418" y="842" width="1.5" height="1.5" fill="#000" />
<rect x="1427" y="848" width="1.5" height="1.5" fill="#000" />
<rect x="1421" y="842" width="1.5" height="1.5" fill="#000" />
<rect x="1424" y="849" width="1.5" height="1.5" fill="#000" />
<rect x="1422" y="849" width="1.5" height="1.5" fill="#000" />
<rect x="1434" y="842" width="1.5" height="1.5" fill="#000" />
<text x="1455" y="851.6" font-size="11" fill="#e6e6e6" textLength="38" lengthAdjust="spacingAndGlyphs" >Calque 7</text>
<line x1="1380" y1="888.1" x2="1902" y2="888.1" stroke="#474747" stroke-width="1" />
<line x1="1409.5" y1="860.6" x2="1409.5" y2="887.6" stroke="#474747" stroke-width="1" />
<rect x="1389.5" y="869.1" width="12" height="12" fill="none" stroke="#474747" stroke-width="1"/>
<rect x="1414.5" y="866.1" width="31" height="17" fill="url(#checker)" stroke="#2e2e2e" stroke-width="1"/>
<rect x="1433" y="873" width="1.5" height="1.5" fill="#000" />
<rect x="1435" y="869" width="1.5" height="1.5" fill="#000" />
<rect x="1435" y="873" width="1.5" height="1.5" fill="#000" />
<rect x="1433" y="870" width="1.5" height="1.5" fill="#000" />
<rect x="1426" y="872" width="1.5" height="1.5" fill="#000" />
<rect x="1426" y="877" width="1.5" height="1.5" fill="#000" />
<text x="1455" y="879.6" font-size="11" fill="#e6e6e6" textLength="51" lengthAdjust="spacingAndGlyphs" >Hybiou test</text>
<line x1="1380" y1="916.1" x2="1902" y2="916.1" stroke="#474747" stroke-width="1" />
<line x1="1409.5" y1="888.6" x2="1409.5" y2="915.6" stroke="#474747" stroke-width="1" />
<rect x="1389.5" y="897.1" width="12" height="12" fill="none" stroke="#474747" stroke-width="1"/>
<rect x="1414.5" y="894.1" width="31" height="17" fill="url(#checker)" stroke="#2e2e2e" stroke-width="1"/>
<rect x="1425" y="902" width="1.5" height="1.5" fill="#000" />
<rect x="1420" y="900" width="1.5" height="1.5" fill="#000" />
<rect x="1420" y="897" width="1.5" height="1.5" fill="#000" />
<rect x="1425" y="898" width="1.5" height="1.5" fill="#000" />
<rect x="1425" y="905" width="1.5" height="1.5" fill="#000" />
<rect x="1419" y="903" width="1.5" height="1.5" fill="#000" />
<text x="1455" y="907.6" font-size="11" fill="#e6e6e6" textLength="38" lengthAdjust="spacingAndGlyphs" >Calque 5</text>
<line x1="1380" y1="944.1" x2="1902" y2="944.1" stroke="#474747" stroke-width="1" />
<line x1="1409.5" y1="916.6" x2="1409.5" y2="943.6" stroke="#474747" stroke-width="1" />
<rect x="1389.5" y="925.1" width="12" height="12" fill="none" stroke="#474747" stroke-width="1"/>
<rect x="1414.5" y="922.1" width="31" height="17" fill="url(#checker)" stroke="#2e2e2e" stroke-width="1"/>
<rect x="1441" y="925" width="1.5" height="1.5" fill="#802020" />
<rect x="1430" y="934" width="1.5" height="1.5" fill="#333" />
<rect x="1428" y="935" width="1.5" height="1.5" fill="#1a1a80" />
<rect x="1442" y="933" width="1.5" height="1.5" fill="#1a1a80" />
<rect x="1441" y="929" width="1.5" height="1.5" fill="#1a1a80" />
<rect x="1419" y="929" width="1.5" height="1.5" fill="#1a1a80" />
<text x="1455" y="935.6" font-size="11" fill="#e6e6e6" textLength="38" lengthAdjust="spacingAndGlyphs" >Calque 4</text>
<line x1="1380" y1="972.1" x2="1902" y2="972.1" stroke="#474747" stroke-width="1" />
<line x1="1409.5" y1="944.6" x2="1409.5" y2="971.6" stroke="#474747" stroke-width="1" />
<rect x="1389.5" y="953.1" width="12" height="12" fill="none" stroke="#474747" stroke-width="1"/>
<rect x="1414.5" y="950.1" width="31" height="17" fill="url(#checker)" stroke="#2e2e2e" stroke-width="1"/>
<rect x="1423" y="963" width="1.5" height="1.5" fill="#333" />
<rect x="1419" y="962" width="1.5" height="1.5" fill="#802020" />
<rect x="1419" y="959" width="1.5" height="1.5" fill="#333" />
<rect x="1427" y="961" width="1.5" height="1.5" fill="#802020" />
<rect x="1425" y="954" width="1.5" height="1.5" fill="#802020" />
<rect x="1426" y="960" width="1.5" height="1.5" fill="#802020" />
<text x="1455" y="963.6" font-size="11" fill="#e6e6e6" textLength="38" lengthAdjust="spacingAndGlyphs" >Calque 3</text>
<line x1="1380" y1="1000.1" x2="1902" y2="1000.1" stroke="#474747" stroke-width="1" />
<line x1="1409.5" y1="972.6" x2="1409.5" y2="999.6" stroke="#474747" stroke-width="1" />
<rect x="1389.5" y="981.1" width="12" height="12" fill="none" stroke="#474747" stroke-width="1"/>
<rect x="1414.5" y="978.1" width="31" height="17" fill="url(#checker)" stroke="#2e2e2e" stroke-width="1"/>
<rect x="1420" y="985" width="1.5" height="1.5" fill="#1a1a80" />
<rect x="1437" y="984" width="1.5" height="1.5" fill="#802020" />
<rect x="1420" y="990" width="1.5" height="1.5" fill="#333" />
<rect x="1422" y="986" width="1.5" height="1.5" fill="#802020" />
<rect x="1420" y="985" width="1.5" height="1.5" fill="#1a1a80" />
<rect x="1428" y="988" width="1.5" height="1.5" fill="#802020" />
<path d="M1433,980.6 C1432,986.6 1438,991.6 1442,981.6" fill="none" stroke="#8a1020" stroke-width="2" />
<text x="1455" y="991.6" font-size="11" fill="#e6e6e6" textLength="38" lengthAdjust="spacingAndGlyphs" >Calque 2</text>
<line x1="1380" y1="1028.1" x2="1902" y2="1028.1" stroke="#474747" stroke-width="1" />
<line x1="1409.5" y1="1000.6" x2="1409.5" y2="1027.6" stroke="#474747" stroke-width="1" />
<rect x="1389.5" y="1009.1" width="12" height="12" fill="none" stroke="#474747" stroke-width="1"/>
<rect x="1414.5" y="1006.1" width="31" height="17" fill="url(#checker)" stroke="#2e2e2e" stroke-width="1"/>
<rect x="1425" y="1014" width="1.5" height="1.5" fill="#000" />
<rect x="1432" y="1014" width="1.5" height="1.5" fill="#000" />
<rect x="1432" y="1014" width="1.5" height="1.5" fill="#000" />
<rect x="1430" y="1011" width="1.5" height="1.5" fill="#000" />
<rect x="1421" y="1011" width="1.5" height="1.5" fill="#000" />
<rect x="1437" y="1009" width="1.5" height="1.5" fill="#000" />
<text x="1455" y="1019.6" font-size="11" fill="#e6e6e6" textLength="38" lengthAdjust="spacingAndGlyphs" >Calque 1</text>
</g>
<polyline points="1907.5,732.5 1911.5,728.5 1915.5,732.5" fill="none" stroke="#a0a0a0" stroke-width="1.2"/>
<polyline points="1907.5,1002 1911.5,1006 1915.5,1002 " fill="none" stroke="#a0a0a0" stroke-width="1.2"/>
<rect x="1904.5" y="738" width="12" height="225" fill="#696969" />
<line x1="1380" y1="1013.5" x2="1920" y2="1013.5" stroke="#454545" stroke-width="1" />
<path d="M1720,1022.5 H1717 A3,3 0 0 0 1717,1028.5 H1720 M1724,1022.5 H1727 A3,3 0 0 1 1727,1028.5 H1724 M1719,1025.5 H1725" fill="none" stroke="#8e8e8e" stroke-width="1.2" />
<text x="1745" y="1031" font-size="13" fill="#d0d0d0" font-style="italic">fx</text>
<path d="M1754,1033 L1757,1033 L1755.5,1034.5 Z" fill="#d0d0d0" />
<rect x="1771" y="1020.5" width="13" height="10.5" fill="#d8d8d8" />
<circle cx="1777.5" cy="1025.8" r="3.2" fill="#535353" />
<circle cx="1805" cy="1026" r="5" fill="none" stroke="#d8d8d8" stroke-width="1.3"/>
<path d="M1808.5,1022.5 L1801.5,1029.5 A5,5 0 0 1 1808.5,1022.5 Z" fill="#d8d8d8" />
<path d="M1809,1032 L1812,1032 L1810.5,1033.5 Z" fill="#d8d8d8" />
<path d="M1826,1020.5 H1830.5 L1832,1022 H1838 V1031 H1826 Z" fill="#d8d8d8" />
<rect x="1852.5" y="1020.5" width="11" height="11" fill="none" stroke="#d8d8d8" stroke-width="1.2"/>
<path d="M1858,1023 V1029 M1855,1026 H1861" fill="none" stroke="#d8d8d8" stroke-width="1.2" />
<path d="M1879,1021.5 H1890 M1882.5,1021.5 V1020 H1886.5 V1021.5 M1880.5,1023 V1032 H1888.5 V1023 M1883,1024.5 V1030.5 M1886,1024.5 V1030.5" fill="none" stroke="#d8d8d8" stroke-width="1.2" />
<rect x="0" y="1039" width="1920" height="41" fill="#2e3c36" />
<path d="M16,1053.5 L23,1052.5 V1059.3 H16 Z M24,1052.3 L32,1051 V1059.3 H24 Z M16,1060.3 H23 V1067.3 L16,1066.3 Z M24,1060.3 H32 V1068.5 L24,1067.4 Z" fill="#ffffff" />
<rect x="639" y="1040" width="48" height="40" fill="#46534d" />
<rect x="640" y="1078" width="46" height="2" fill="#8cc3ec" />
<rect x="741" y="1078" width="40" height="2" fill="#8cc3ec" />
<rect x="790" y="1078" width="40" height="2" fill="#8cc3ec" />
<rect x="1133" y="1078" width="32" height="2" fill="#8cc3ec" />
<rect x="1166" y="1078" width="7" height="2" fill="#8cc3ec" />
<rect x="1231" y="1078" width="40" height="2" fill="#8cc3ec" />
<rect x="1280" y="1078" width="40" height="2" fill="#8cc3ec" />
<circle cx="75" cy="1060" r="12" fill="#ff66aa" />
<circle cx="75" cy="1060" r="12" fill="none" stroke="#ffffff" stroke-width="1.5"/>
<text x="75" y="1063.5" font-size="8.5" fill="#ffffff" font-weight="bold" text-anchor="middle" >osu!</text>
<path d="M112,1055 L124,1049 L136,1055 L124,1061 Z" fill="#5fa641" />
<path d="M112,1055 L124,1061 V1073 L112,1067 Z" fill="#7a5436" />
<path d="M136,1055 L124,1061 V1073 L136,1067 Z" fill="#5d3f28" />
<path d="M112,1055 L124,1061 L136,1055 V1058 L124,1064 L112,1058 Z" fill="#4c8d34" />
<circle cx="175" cy="1060" r="11" fill="none" stroke="#0aa6b9" stroke-width="3"/>
<path d="M164,1048 H171 V1068 H184 L181,1073 H166 L168,1070 V1050 Z" fill="#c8aa6e" />
<rect x="211" y="1049" width="22" height="22" rx="2" fill="#e44c4c"/>
<path d="M214,1064 C214,1056 218,1055 222,1057 C226,1055 230,1056 230,1064 C229,1066 227,1066 225,1063 H219 C217,1066 215,1066 214,1064 Z" fill="#ffffff" />
<rect x="260" y="1051" width="12" height="12" fill="#e02a1a" />
<rect x="266" y="1058" width="14" height="13" fill="#f5c400" />
<rect x="269" y="1061" width="6" height="6" fill="#e02a1a" />
<circle cx="320" cy="1060" r="11.5" fill="#1b2838" />
<circle cx="320" cy="1060" r="11.5" fill="none" stroke="#2a6fa8" stroke-width="2"/>
<circle cx="323" cy="1057" r="3.5" fill="none" stroke="#ffffff" stroke-width="1.6"/>
<path d="M310,1062 L318,1065 L322,1059" fill="none" stroke="#ffffff" stroke-width="2" />
<path d="M359,1048 H379 V1068 L369,1073 L359,1068 Z" fill="#111111" />
<text x="369" y="1061" font-size="7.5" fill="#ffffff" font-weight="bold" text-anchor="middle" >EPIC</text>
<circle cx="417" cy="1060" r="9.5" fill="none" stroke="#8a30e0" stroke-width="4"/>
<g transform="translate(466,1060)"><circle r="7" fill="none" stroke="#9aa0a0" stroke-width="4.5"/><rect x="-2" y="-11.5" width="4" height="4" fill="#9aa0a0" transform="rotate(0)"/><rect x="-2" y="-11.5" width="4" height="4" fill="#9aa0a0" transform="rotate(45)"/><rect x="-2" y="-11.5" width="4" height="4" fill="#9aa0a0" transform="rotate(90)"/><rect x="-2" y="-11.5" width="4" height="4" fill="#9aa0a0" transform="rotate(135)"/><rect x="-2" y="-11.5" width="4" height="4" fill="#9aa0a0" transform="rotate(180)"/><rect x="-2" y="-11.5" width="4" height="4" fill="#9aa0a0" transform="rotate(225)"/><rect x="-2" y="-11.5" width="4" height="4" fill="#9aa0a0" transform="rotate(270)"/><rect x="-2" y="-11.5" width="4" height="4" fill="#9aa0a0" transform="rotate(315)"/></g>
<rect x="506" y="1050" width="10" height="10" fill="#e53935" />
<rect x="517" y="1050" width="10" height="10" fill="#43a047" />
<rect x="506" y="1061" width="10" height="10" fill="#fdd835" />
<rect x="517" y="1061" width="10" height="10" fill="#8e24aa" />
<rect x="553" y="1049" width="22" height="22" rx="1" fill="#5a3fa0" stroke="#2a1a60"/>
<path d="M560,1068 L565,1060 L570,1062 M563,1056 L568,1058 L572,1054" fill="none" stroke="#f7e04a" stroke-width="2" />
<rect x="556" y="1050" width="16" height="3" fill="#dddddd" />
<rect x="603" y="1049" width="22" height="22" fill="#001e36" stroke="#31a8ff" stroke-width="1.5"/>
<text x="605.5" y="1066" font-size="12" fill="#31a8ff" textLength="16" lengthAdjust="spacingAndGlyphs" font-weight="bold" >Ps</text>
<rect x="652" y="1049" width="22" height="22" fill="#001e36" stroke="#31a8ff" stroke-width="1.5"/>
<text x="654.5" y="1066" font-size="12" fill="#31a8ff" textLength="16" lengthAdjust="spacingAndGlyphs" font-weight="bold" >Ps</text>
<rect x="701" y="1049" width="22" height="22" fill="#2a003f" stroke="#e77cff" stroke-width="1.5"/>
<text x="703.5" y="1066" font-size="12" fill="#e77cff" textLength="16" lengthAdjust="spacingAndGlyphs" font-weight="bold" >Pr</text>
<rect x="750" y="1050" width="22" height="20" rx="5" fill="#7289da"/>
<circle cx="757" cy="1060" r="2" fill="#ffffff" />
<circle cx="765" cy="1060" r="2" fill="#ffffff" />
<circle cx="768" cy="1066" r="7" fill="#e84141" />
<text x="768" y="1069.5" font-size="8.5" fill="#ffffff" font-weight="bold" text-anchor="middle" >9+</text>
<circle cx="810" cy="1061" r="11" fill="#ff7139" />
<circle cx="811" cy="1062" r="7.5" fill="#6f2ec4" />
<path d="M801,1055 C803,1049 810,1047 816,1049 C812,1050 809,1052 808,1055 Z" fill="#ffcc33" />
<circle cx="859" cy="1060" r="11.5" fill="#1ed760" />
<path d="M852,1055.5 C856,1054 862,1054.5 866,1057 M853,1059.5 C856,1058.5 861,1059 864.5,1061 M854,1063.5 C857,1063 860,1063 863,1064.5" fill="none" stroke="#111111" stroke-width="1.8" />
<path d="M897,1061 L908,1071 L919,1050 L908,1058 Z" fill="#f0f0f0" />
<path d="M903,1060 L908,1065 L917,1049" fill="none" stroke="#f47b20" stroke-width="3" />
<rect x="946" y="1050" width="21" height="21" fill="#f5c400" />
<text x="956.5" y="1064" font-size="8" fill="#ffffff" font-weight="bold" text-anchor="middle" >Live</text>
<path d="M998,1049 H1010 L1015,1054 V1071 H998 Z" fill="#f2f2f2" />
<path d="M1044,1064 C1043,1050 1065,1050 1064,1064" fill="none" stroke="#1a3fa0" stroke-width="3" />
<rect x="1042" y="1061" width="5" height="9" fill="#1a3fa0" />
<rect x="1061" y="1061" width="5" height="9" fill="#1a3fa0" />
<path d="M1048,1068 L1050,1058 L1052,1066 L1054,1056 L1056,1066 L1058,1060 L1060,1068 Z" fill="#f5a000" />
<rect x="1092" y="1049" width="24" height="23" rx="4" fill="#2fb38f"/>
<rect x="1097" y="1055" width="14" height="9" rx="2" fill="#1d4d40"/>
<rect x="1099" y="1058" width="4" height="3" fill="#ffffff" />
<rect x="1105" y="1058" width="4" height="3" fill="#ffffff" />
<path d="M1140,1053 H1148 L1150,1055 H1165 V1070 H1140 Z" fill="#f5c64b" />
<rect x="1140" y="1058" width="25" height="12" fill="#ffd866" />
<rect x="1148" y="1064" width="9" height="6" fill="#1e73c8" />
<circle cx="1202" cy="1060" r="11" fill="#db4437" />
<path d="M1202,1060 L1192.5,1065.5 A11,11 0 0 0 1207.5,1069.5 Z" fill="#0f9d58" />
<path d="M1202,1060 L1207.5,1069.5 A11,11 0 0 0 1213,1060 Z" fill="#f4b400" />
<path d="M1202,1060 L1213,1060 A11,11 0 0 0 1207.5,1050.5 Z" fill="#db4437" />
<circle cx="1202" cy="1060" r="5" fill="#ffffff" />
<circle cx="1202" cy="1060" r="3.8" fill="#4285f4" />
<rect x="1239" y="1051" width="24" height="18" fill="#3a8dde" />
<rect x="1241" y="1053" width="20" height="14" fill="#e6f2fb" />
<circle cx="1246" cy="1058" r="3" fill="#3a8dde" />
<rect x="1252" y="1055" width="7" height="2" fill="#3a8dde" />
<rect x="1252" y="1059" width="7" height="2" fill="#3a8dde" />
<rect x="1243" y="1063" width="16" height="2" fill="#3a8dde" />
<ellipse cx="1298" cy="1062" rx="11" ry="9" fill="#9fd0f0" />
<circle cx="1293" cy="1058" r="2.5" fill="#f5c400" />
<circle cx="1291" cy="1064" r="2" fill="#e53935" />
<path d="M1293,1073 L1307,1051" fill="none" stroke="#f07a1a" stroke-width="3" />
<path d="M1305,1049 L1311,1051 L1307,1055 Z" fill="#d8b07a" />
<path d="M1640.5,1062.5 L1645,1058 L1649.5,1062.5" fill="none" stroke="#ffffff" stroke-width="1.2" />
<rect x="1662.5" y="1054.5" width="13" height="9" fill="none" stroke="#ffffff" stroke-width="1"/>
<path d="M1666,1066.5 H1672 M1669,1063.5 V1066.5" fill="none" stroke="#ffffff" stroke-width="1" />
<rect x="1661" y="1052" width="5" height="4" fill="#2e3c36" stroke="#ffffff" stroke-width="1"/>
<path d="M1685,1064 H1700 C1702,1064 1703,1062 1702,1060 C1701,1058 1699,1058 1698,1058.5 C1697,1055 1692,1054 1690,1057 C1687,1056 1685,1058 1685.5,1060 C1683,1060.5 1683,1064 1685,1064 Z" fill="#e0e0e0" />
<path d="M1710,1057.5 H1713 L1717,1054 V1066 L1713,1062.5 H1710 Z" fill="none" stroke="#ffffff" stroke-width="1.1" />
<path d="M1719.5,1057.5 C1721,1059 1721,1061 1719.5,1062.5 M1722,1055.5 C1724.5,1058 1724.5,1062 1722,1064.5" fill="none" stroke="#ffffff" stroke-width="1.1" />
<path d="M1738,1066 C1738,1063 1741,1061 1744,1063 L1751,1053 M1746,1054 L1752,1058 M1740,1066 L1744,1064" fill="none" stroke="#ffffff" stroke-width="1.2" />
<text x="1768" y="1064.5" font-size="11.5" fill="#ffffff" textLength="21" lengthAdjust="spacingAndGlyphs" >FRA</text>
<text x="1817" y="1055.5" font-size="11.5" fill="#ffffff" textLength="29" lengthAdjust="spacingAndGlyphs" >23:34</text>
<text x="1803.5" y="1073.5" font-size="11.5" fill="#ffffff" textLength="58" lengthAdjust="spacingAndGlyphs" >25/03/2020</text>
<path d="M1878.5,1052.5 H1897.5 V1065.5 H1889 L1885,1069 V1065.5 H1878.5 Z" fill="none" stroke="#ffffff" stroke-width="1.2" />
<rect x="1919" y="1040" width="1" height="40" fill="#7a8580" />
</svg></body></html>
